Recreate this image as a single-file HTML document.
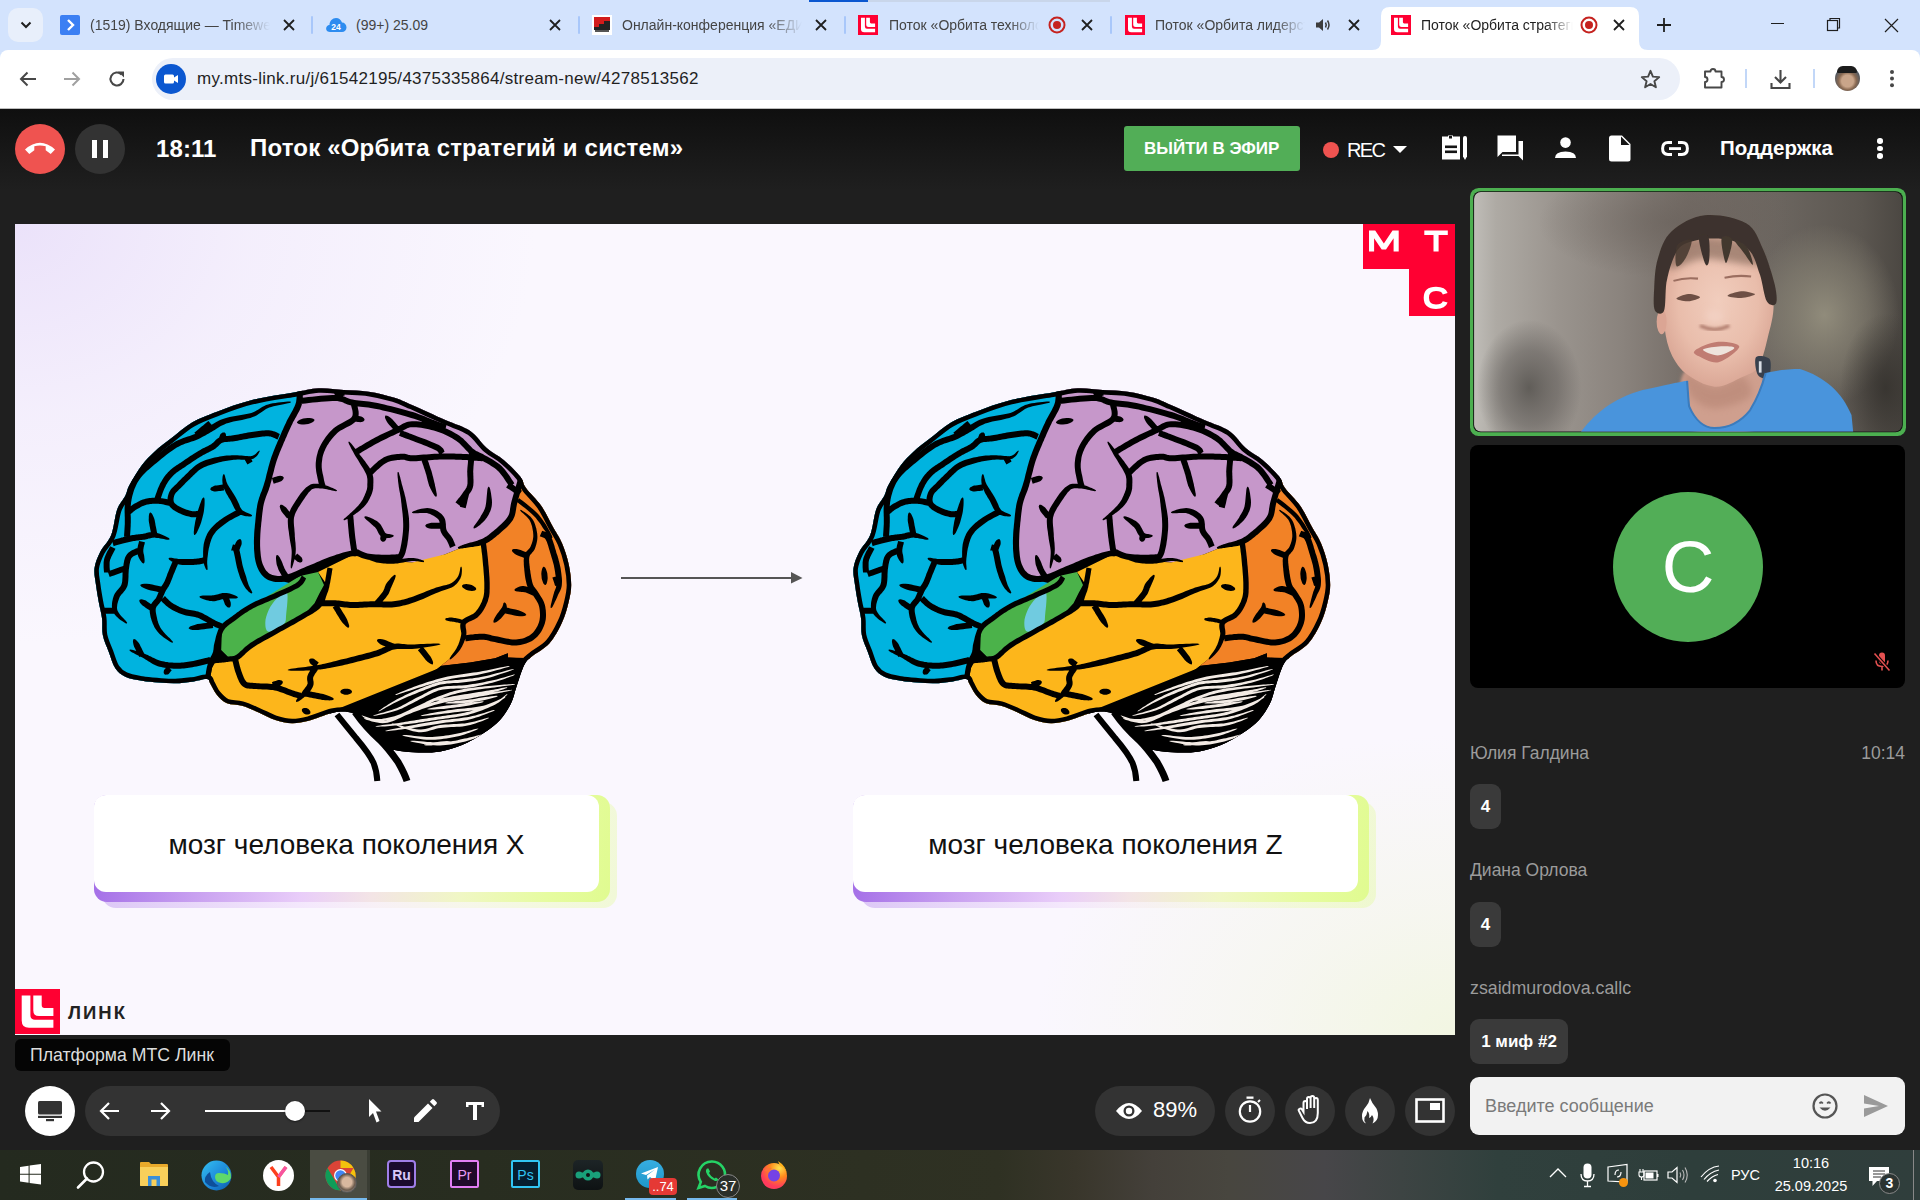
<!DOCTYPE html>
<html><head><meta charset="utf-8">
<style>
*{margin:0;padding:0;box-sizing:border-box}
html,body{width:1920px;height:1200px;overflow:hidden;background:#1f1f1f;font-family:"Liberation Sans",sans-serif}
.a{position:absolute}
svg{position:absolute;overflow:visible}
#tabs{left:0;top:0;width:1920px;height:58px;background:#d3e3fd}
#toolbar{left:0;top:50px;width:1920px;height:58px;background:#fff;border-radius:8px 8px 0 0}
.tt{position:absolute;top:15px;font-size:14px;color:#1f1f1f;white-space:nowrap;overflow:hidden;line-height:20px}
.sep{position:absolute;top:16px;width:2px;height:18px;background:#a8c7fa;border-radius:1px}
#hdr{left:0;top:109px;width:1920px;height:81px;background:linear-gradient(#0f0f0f,#1f1f1f)}
#slide{left:15px;top:224px;width:1440px;height:811px;background:radial-gradient(ellipse 520px 420px at 0% 0%,#ebe2fa 0%,rgba(240,233,251,0.6) 45%,rgba(250,247,254,0) 100%),radial-gradient(ellipse 420px 300px at 100% 100%,#f2f6e2 0%,rgba(244,246,232,0.6) 45%,rgba(250,247,254,0) 100%),#faf7fe;overflow:hidden}
#taskbar{left:0;top:1150px;width:1920px;height:50px;background:linear-gradient(90deg,#242a1f 0%,#282d20 25%,#2d3022 45%,#2f3123 52%,#39362b 56%,#44403a 60%,#48463f 64%,#474649 69%,#3d4443 73%,#30403d 78%,#2e3e3b 88%,#303e3c 100%)}
</style></head><body>

<!-- Tab strip -->
<div id="tabs" class="a">
  <div class="a" style="left:809px;top:0;width:59px;height:2px;background:#0b57d0"></div>
  <div class="a" style="left:868px;top:0;width:242px;height:2px;background:#c9d6ea"></div>
  <div class="a" style="left:8px;top:8px;width:35px;height:34px;border-radius:10px;background:#e8effb"></div>
  <svg style="left:18px;top:17px" width="16" height="16" viewBox="0 0 16 16"><path d="M3.5 5.5 L8 10 L12.5 5.5" fill="none" stroke="#1f1f1f" stroke-width="2"/></svg>
  <!-- tab1 -->
  <div class="a" style="left:60px;top:15px;width:20px;height:20px;background:#3b7ff3;border-radius:2px"></div>
  <svg style="left:60px;top:15px" width="20" height="20"><path d="M8 5 L13 10 L8 15" fill="none" stroke="#fff" stroke-width="2.4"/></svg>
  <div class="tt" style="left:90px;width:180px;color:#444;-webkit-mask-image:linear-gradient(90deg,#000 80%,transparent)">(1519) Входящие — Timeweb</div>
  <svg style="left:283px;top:19px" width="12" height="12"><path d="M1 1L11 11M11 1L1 11" stroke="#1f1f1f" stroke-width="1.8"/></svg>
  <div class="sep" style="left:311px"></div>
  <!-- tab2 -->
  <svg style="left:325px;top:15px" width="22" height="20" viewBox="0 0 22 20"><path d="M5 17 C1.5 17 0.5 14 1.5 12 C2.3 10.5 3.5 10 4.5 10 C4.5 6 7.5 3 11 3 C14 3 16 5 17 7.5 C19.5 7.5 21.5 9.5 21.5 12.5 C21.5 15 19.5 17 17 17 Z" fill="#2d8cf0"/><text x="11" y="14.5" font-size="8.5" font-weight="bold" fill="#fff" text-anchor="middle" font-family="Liberation Sans">24</text></svg>
  <div class="tt" style="left:356px;width:180px;color:#444">(99+) 25.09</div>
  <svg style="left:549px;top:19px" width="12" height="12"><path d="M1 1L11 11M11 1L1 11" stroke="#1f1f1f" stroke-width="1.8"/></svg>
  <div class="sep" style="left:578px"></div>
  <!-- tab3 -->
  <div class="a" style="left:592px;top:15px;width:20px;height:20px;background:#fff"></div>
  <div class="a" style="left:594px;top:17px;width:16px;height:12px;background:#d21b1b"></div>
  <svg style="left:594px;top:17px" width="16" height="16"><path d="M0 13 L0 10 L5 10 L5 7 L10 7 L10 4 L16 4 L16 13 Z" fill="#222"/><rect x="1" y="13" width="14" height="2" fill="#555"/></svg>
  <div class="tt" style="left:622px;width:180px;color:#444;-webkit-mask-image:linear-gradient(90deg,#000 80%,transparent)">Онлайн-конференция «ЕДИНО</div>
  <svg style="left:815px;top:19px" width="12" height="12"><path d="M1 1L11 11M11 1L1 11" stroke="#1f1f1f" stroke-width="1.8"/></svg>
  <div class="sep" style="left:844px"></div>
  <!-- tab4 -->
  <svg style="left:858px;top:15px" width="20" height="20"><rect width="20" height="20" fill="#ff0032"/><path d="M3 2.8 H6.9 V11.5 Q6.9 13.7 9 13.7 H17.1 V17.2 H6.3 Q3 17.2 3 14 Z M8.2 2.8 H11.9 V7.1 Q11.9 8.4 13.1 8.4 H17.1 V12 H10.7 Q8.2 12 8.2 9.5 Z" fill="#fff"/></svg>
  <div class="tt" style="left:889px;width:150px;color:#444;-webkit-mask-image:linear-gradient(90deg,#000 80%,transparent)">Поток «Орбита технологий</div>
  <svg style="left:1048px;top:16px" width="18" height="18"><circle cx="9" cy="9" r="7.5" fill="none" stroke="#c5221f" stroke-width="2"/><circle cx="9" cy="9" r="4" fill="#c5221f"/></svg>
  <svg style="left:1081px;top:19px" width="12" height="12"><path d="M1 1L11 11M11 1L1 11" stroke="#1f1f1f" stroke-width="1.8"/></svg>
  <div class="sep" style="left:1110px"></div>
  <!-- tab5 -->
  <svg style="left:1125px;top:15px" width="20" height="20"><rect width="20" height="20" fill="#ff0032"/><path d="M3 2.8 H6.9 V11.5 Q6.9 13.7 9 13.7 H17.1 V17.2 H6.3 Q3 17.2 3 14 Z M8.2 2.8 H11.9 V7.1 Q11.9 8.4 13.1 8.4 H17.1 V12 H10.7 Q8.2 12 8.2 9.5 Z" fill="#fff"/></svg>
  <div class="tt" style="left:1155px;width:150px;color:#444;-webkit-mask-image:linear-gradient(90deg,#000 80%,transparent)">Поток «Орбита лидерства</div>
  <svg style="left:1314px;top:16px" width="18" height="18" viewBox="0 0 18 18"><path d="M2 6.5 H5 L9 3 V15 L5 11.5 H2 Z" fill="#3c3c3c"/><path d="M11.5 6.5 Q13 9 11.5 11.5 M13.5 4.5 Q16.5 9 13.5 13.5" fill="none" stroke="#3c3c3c" stroke-width="1.5"/></svg>
  <svg style="left:1348px;top:19px" width="12" height="12"><path d="M1 1L11 11M11 1L1 11" stroke="#1f1f1f" stroke-width="1.8"/></svg>
  <!-- active tab -->
  <svg style="left:1372px;top:7px" width="276" height="43" viewBox="0 0 276 43"><path d="M0 43 Q9 43 9 34 V9 Q9 0 18 0 H258 Q267 0 267 9 V34 Q267 43 276 43 Z" fill="#fff"/></svg>
  <svg style="left:1391px;top:15px" width="20" height="20"><rect width="20" height="20" fill="#ff0032"/><path d="M3 2.8 H6.9 V11.5 Q6.9 13.7 9 13.7 H17.1 V17.2 H6.3 Q3 17.2 3 14 Z M8.2 2.8 H11.9 V7.1 Q11.9 8.4 13.1 8.4 H17.1 V12 H10.7 Q8.2 12 8.2 9.5 Z" fill="#fff"/></svg>
  <div class="tt" style="left:1421px;width:152px;color:#1f1f1f;-webkit-mask-image:linear-gradient(90deg,#000 82%,transparent)">Поток «Орбита стратегий</div>
  <svg style="left:1580px;top:16px" width="18" height="18"><circle cx="9" cy="9" r="7.5" fill="none" stroke="#c5221f" stroke-width="2"/><circle cx="9" cy="9" r="4" fill="#c5221f"/></svg>
  <svg style="left:1613px;top:19px" width="12" height="12"><path d="M1 1L11 11M11 1L1 11" stroke="#1f1f1f" stroke-width="1.8"/></svg>
  <svg style="left:1657px;top:18px" width="14" height="14"><path d="M7 0V14M0 7H14" stroke="#1f1f1f" stroke-width="1.8"/></svg>
  <div class="a" style="left:1771px;top:23px;width:13px;height:1px;background:#1f1f1f"></div>
  <svg style="left:1826px;top:17px" width="16" height="16"><rect x="1.5" y="3.5" width="10" height="10" fill="none" stroke="#1f1f1f" stroke-width="1.2"/><path d="M4 3.5 V1.5 H13.5 V11 H11.5" fill="none" stroke="#1f1f1f" stroke-width="1.2"/></svg>
  <svg style="left:1884px;top:18px" width="15" height="15"><path d="M1 1L14 14M14 1L1 14" stroke="#1f1f1f" stroke-width="1.2"/></svg>
</div>

<!-- Toolbar -->
<div id="toolbar" class="a">
  <div class="a" style="left:152px;top:8px;width:1528px;height:42px;border-radius:21px;background:#ecf0f9"></div>
  <svg style="left:18px;top:19px" width="20" height="20" viewBox="0 0 20 20"><path d="M18 10H3M9.5 3.5L3 10L9.5 16.5" fill="none" stroke="#474747" stroke-width="2"/></svg>
  <svg style="left:62px;top:19px" width="20" height="20" viewBox="0 0 20 20"><path d="M2 10H17M10.5 3.5L17 10L10.5 16.5" fill="none" stroke="#a0a0a0" stroke-width="2"/></svg>
  <svg style="left:107px;top:19px" width="20" height="20" viewBox="0 0 20 20"><path d="M16.5 10 A6.5 6.5 0 1 1 14.6 5.4" fill="none" stroke="#474747" stroke-width="2.1"/><path d="M11 2.5 H17 V8.5 Z" fill="#474747"/></svg>
  <div class="a" style="left:156px;top:14px;width:30px;height:30px;border-radius:50%;background:#0b57d0"></div>
  <svg style="left:161px;top:19px" width="20" height="20" viewBox="0 0 20 20"><rect x="3" y="5.5" width="10" height="9" rx="1.5" fill="#fff"/><path d="M13 8.5 L17 6 V14 L13 11.5 Z" fill="#fff"/></svg>
  <div class="a" style="left:197px;top:18px;font-size:17px;line-height:22px;color:#1f1f1f;white-space:nowrap;letter-spacing:0.28px">my.mts-link.ru/j/61542195/4375335864/stream-new/4278513562</div>
  <svg style="left:1640px;top:19px" width="21" height="20" viewBox="0 0 21 20"><path d="M10.5 1.8 L12.9 7.6 L19.2 8.1 L14.4 12.2 L15.9 18.3 L10.5 15 L5.1 18.3 L6.6 12.2 L1.8 8.1 L8.1 7.6 Z" fill="none" stroke="#474747" stroke-width="1.9" stroke-linejoin="round"/></svg>
  <svg style="left:1703px;top:18px" width="22" height="22" viewBox="0 0 22 22"><path d="M1.5 3.5 H7 Q7 1 9.5 1 Q12 1 12 3.5 H18 V9 Q20.5 9 20.5 11.5 Q20.5 14 18 14 V19.5 H1.5 V14 Q4 14 4 11.5 Q4 9 1.5 9 Z" fill="none" stroke="#474747" stroke-width="1.9" stroke-linejoin="round" transform="translate(0.5,0)"/></svg>
  <div class="a" style="left:1745px;top:19px;width:2px;height:19px;background:#c2d7f8"></div>
  <svg style="left:1770px;top:19px" width="21" height="21" viewBox="0 0 21 21"><path d="M10.5 1 V13 M5 8 L10.5 13.5 L16 8" fill="none" stroke="#474747" stroke-width="2.1"/><path d="M1.5 14 V19 H19.5 V14" fill="none" stroke="#474747" stroke-width="2.1"/></svg>
  <div class="a" style="left:1813px;top:19px;width:2px;height:19px;background:#c2d7f8"></div>
  <div class="a" style="left:1835px;top:16px;width:25px;height:25px;border-radius:50%;background:radial-gradient(circle at 50% 60%,#c9a58a 0 30%,#8a6a52 45%,#4b5560 70%,#9aa3ad 100%)"></div>
  <div class="a" style="left:1837px;top:16px;width:20px;height:7px;border-radius:10px 10px 2px 2px;background:#1c1c1c"></div>
  <svg style="left:1886px;top:69px;top:19px" width="12" height="20" viewBox="0 0 12 20"><circle cx="6" cy="3" r="2" fill="#474747"/><circle cx="6" cy="9.6" r="2" fill="#474747"/><circle cx="6" cy="16.2" r="2" fill="#474747"/></svg>
</div>
<div class="a" style="left:0;top:108px;width:1920px;height:1px;background:#bdbdbd"></div>

<!-- App header -->
<div id="hdr" class="a">
  <div class="a" style="left:15px;top:15px;width:50px;height:50px;border-radius:50%;background:#ef5350"></div>
  <svg style="left:15px;top:15px" width="50" height="50" viewBox="0 0 50 50"><path d="M10 25.5 Q25 12 40 25.5 L35.7 30 L30.7 26.2 L30.7 22.3 Q25 20.6 19.3 22.3 L19.3 26.2 L14.3 30 Z" fill="#fff"/></svg>
  <div class="a" style="left:75px;top:15px;width:50px;height:50px;border-radius:50%;background:#333"></div>
  <div class="a" style="left:92px;top:31px;width:5px;height:18px;background:#fff"></div>
  <div class="a" style="left:103px;top:31px;width:5px;height:18px;background:#fff"></div>
  <div class="a" style="left:156px;top:26px;font-size:24px;line-height:28px;color:#fff;font-weight:bold;letter-spacing:0.1px">18:11</div>
  <div class="a" style="left:250px;top:25px;font-size:24px;line-height:28px;color:#fff;font-weight:bold;letter-spacing:0.18px;white-space:nowrap">Поток «Орбита стратегий и систем»</div>
  <div class="a" style="left:1124px;top:17px;width:176px;height:45px;border-radius:3px;background:#52ae57"></div>
  <div class="a" style="left:1144px;top:30px;font-size:17px;line-height:20px;color:#fff;font-weight:bold;white-space:nowrap">ВЫЙТИ В ЭФИР</div>
  <div class="a" style="left:1323px;top:33px;width:16px;height:16px;border-radius:50%;background:#ef5350"></div>
  <div class="a" style="left:1347px;top:29px;font-size:20px;line-height:24px;color:#fff;letter-spacing:-1.6px;white-space:nowrap">REC</div>
  <svg style="left:1393px;top:37px" width="14" height="8"><path d="M0 0H14L7 7Z" fill="#fff"/></svg>
  <!-- icons -->
  <svg style="left:1441px;top:26px" width="28" height="26" viewBox="0 0 28 26"><path d="M1 1.5 H7 V0.5 H12 V1.5 H19 V24.5 H1 Z" fill="#fff"/><rect x="8" y="1" width="3" height="2.5" fill="#151515"/><rect x="4" y="10.5" width="12" height="2.6" fill="#151515"/><rect x="4" y="15.5" width="12" height="2.6" fill="#151515"/><path d="M22 3 Q22 1 24 1 Q26 1 26 3 V21.5 L24 25 L22 21.5 Z" fill="#fff"/></svg>
  <svg style="left:1497px;top:26px" width="27" height="26" viewBox="0 0 27 26"><path d="M0.5 0.5 H19 V17 H5.5 L0.5 22 Z" fill="#fff"/><path d="M21.5 6 H26 V25.5 L21.5 21 H5 V19.5 H21.5 Z" fill="#fff"/></svg>
  <svg style="left:1555px;top:28px" width="21" height="22" viewBox="0 0 21 22"><circle cx="10.5" cy="5.6" r="5.3" fill="#fff"/><path d="M0 21 Q0 14.5 10.5 14.5 Q21 14.5 21 21 Z" fill="#fff"/></svg>
  <svg style="left:1609px;top:26px" width="22" height="27" viewBox="0 0 22 27"><path d="M2.5 0.5 H13 L21.5 9 V24 Q21.5 26.5 19 26.5 H2.5 Q0 26.5 0 24 V3 Q0 0.5 2.5 0.5 Z" fill="#fff"/><path d="M12 1.5 V10 H20.5 Z" fill="#151515"/><path d="M12 1.5 L20.5 10 H12 Z" fill="#fff" opacity="0"/></svg>
  <svg style="left:1661px;top:32px" width="28" height="15" viewBox="0 0 28 15"><path d="M11 1.6 H7 Q1.6 1.6 1.6 7.5 Q1.6 13.4 7 13.4 H11 M17 1.6 H21 Q26.4 1.6 26.4 7.5 Q26.4 13.4 21 13.4 H17" fill="none" stroke="#fff" stroke-width="3"/><rect x="8" y="6.2" width="12" height="2.8" fill="#fff"/></svg>
  <div class="a" style="left:1720px;top:27px;font-size:20.5px;line-height:24px;color:#fff;font-weight:bold;white-space:nowrap">Поддержка</div>
  <div class="a" style="left:1877px;top:29px;width:5.5px;height:5.5px;border-radius:50%;background:#fff"></div>
  <div class="a" style="left:1877px;top:36.5px;width:5.5px;height:5.5px;border-radius:50%;background:#fff"></div>
  <div class="a" style="left:1877px;top:44px;width:5.5px;height:5.5px;border-radius:50%;background:#fff"></div>
</div>

<!-- Slide -->
<div id="slide" class="a">
  <!-- MTS logo -->
  <div class="a" style="left:1348px;top:0;width:92px;height:45px;background:#ff0032"></div>
  <div class="a" style="left:1394px;top:45px;width:46px;height:47px;background:#ff0032"></div>
  <svg style="left:1348px;top:0" width="92" height="92" viewBox="0 0 92 92"><path d="M6 27.6 V6.4 H12.2 L20.85 19.5 L29.5 6.4 H35.7 V27.6 H30.6 V14.2 L23 25.4 H18.7 L11.1 14.2 V27.6 Z" fill="#fff"/><path d="M61.3 6.4 H84.8 V11 H75.6 V27.6 H70.5 V11 H61.3 Z" fill="#fff"/><path d="M84.6 69 Q82.5 62.7 73 62.7 Q60.7 62.7 60.7 73.8 Q60.7 84.9 73 84.9 Q82.5 84.9 84.6 78.6 L79.8 77.2 Q78.5 80.5 73 80.5 Q66 80.5 66 73.8 Q66 67.1 73 67.1 Q78.5 67.1 79.8 70.4 Z" fill="#fff"/></svg>
  <!-- arrow -->
  <div class="a" style="left:606px;top:353px;width:170px;height:2px;background:#555"></div>
  <svg style="left:776px;top:348px" width="12" height="12"><path d="M0 0 L11.5 6 L0 11.5 Z" fill="#555"/></svg>
  <!-- caption boxes -->
  <div class="a" style="left:87px;top:578px;width:515px;height:106px;border-radius:14px;background:linear-gradient(100deg,#9f68e6 0%,#c8a0f0 22%,#e9cdf9 42%,#f3e4e6 55%,#f0f7c4 72%,#e6fca0 88%,#e0fb90 100%);opacity:0.35"></div>
  <div class="a" style="left:79px;top:570.5px;width:515.5px;height:107.5px;border-radius:13px;background:linear-gradient(100deg,#9f68e6 0%,#c8a0f0 22%,#e9cdf9 42%,#f3e4e6 55%,#f0f7c4 72%,#e6fca0 88%,#e0fb90 100%)"></div>
  <div class="a" style="left:79px;top:570.5px;width:505px;height:97.5px;border-radius:12px;background:#fff;font-size:28px;line-height:99px;text-align:center;color:#111">мозг человека поколения X</div>
  <div class="a" style="left:846px;top:578px;width:515px;height:106px;border-radius:14px;background:linear-gradient(100deg,#9f68e6 0%,#c8a0f0 22%,#e9cdf9 42%,#f3e4e6 55%,#f0f7c4 72%,#e6fca0 88%,#e0fb90 100%);opacity:0.35"></div>
  <div class="a" style="left:838px;top:570.5px;width:515.5px;height:107.5px;border-radius:13px;background:linear-gradient(100deg,#9f68e6 0%,#c8a0f0 22%,#e9cdf9 42%,#f3e4e6 55%,#f0f7c4 72%,#e6fca0 88%,#e0fb90 100%)"></div>
  <div class="a" style="left:838px;top:570.5px;width:505px;height:97.5px;border-radius:12px;background:#fff;font-size:28px;line-height:99px;text-align:center;color:#111">мозг человека поколения Z</div>
  <!-- Link logo -->
  <div class="a" style="left:0;top:765.3px;width:45px;height:45.2px;background:#ff0032"></div>
  <svg style="left:0;top:765.3px" width="45" height="45" viewBox="0 0 45 45"><path d="M6.7 6.4 H15.4 V26 Q15.4 30.75 20 30.75 H38.4 V38.8 H14 Q6.7 38.8 6.7 31.5 Z M18.3 6.4 H26.7 V16 Q26.7 19 29.5 19 H38.4 V27.1 H24 Q18.3 27.1 18.3 21.5 Z" fill="#fff"/></svg>
  <div class="a" style="left:53px;top:778px;font-size:18.5px;line-height:22px;color:#222;font-weight:bold;letter-spacing:2px">ЛИНК</div>
  <!--BRAINS--><svg style="left:-15px;top:-224px" width="1920" height="1200" viewBox="0 0 1920 1200"><defs><clipPath id="bclip"><path d="M94.5 568.3C95.2 562.8 97.5 557.2 100.3 551.7C103.1 546.2 108.4 542.0 111.2 535.0C114.0 528.0 114.7 516.5 117.0 510.0C119.3 503.5 123.2 500.0 125.3 495.8C127.4 491.6 126.7 490.1 129.5 485.0C132.3 479.9 137.8 470.6 142.0 465.0C146.2 459.4 149.6 456.1 154.5 451.7C159.4 447.2 164.9 443.2 171.2 438.3C177.4 433.4 184.4 426.9 192.0 422.5C199.6 418.1 207.0 415.4 217.0 411.7C227.0 407.9 239.2 403.2 252.0 400.0C264.8 396.8 282.6 394.4 293.7 392.5C304.8 390.6 310.4 388.7 318.7 388.3C327.0 387.9 335.4 389.4 343.7 390.0C352.0 390.6 360.4 390.4 368.7 391.7C377.0 392.9 386.5 395.3 393.7 397.5C400.9 399.7 403.4 401.2 412.0 405.0C420.6 408.8 435.6 415.7 445.3 420.0C455.0 424.3 463.4 426.3 470.3 431.0C477.2 435.7 481.4 443.5 487.0 448.3C492.6 453.1 498.1 455.3 503.7 460.0C509.2 464.7 516.6 472.0 520.3 476.7C524.0 481.4 522.5 483.1 526.0 488.0C529.5 492.9 536.6 499.1 541.2 505.8C545.8 512.5 550.2 522.0 553.7 528.3C557.2 534.5 559.5 537.3 562.0 543.3C564.5 549.3 567.2 557.2 568.7 564.2C570.2 571.2 571.2 578.8 571.2 585.0C571.2 591.2 570.2 595.5 568.7 601.7C567.2 608.0 565.2 615.6 562.0 622.5C558.8 629.4 554.4 637.8 549.5 643.3C544.6 648.8 536.7 652.7 532.8 655.8C528.9 658.9 527.9 659.4 526.0 662.0C524.1 664.6 523.2 667.0 521.6 671.3C520.0 675.5 518.0 682.1 516.2 687.5C514.4 692.9 513.5 698.4 510.8 703.8C508.1 709.2 504.5 715.1 500.0 720.0C495.5 724.9 490.0 728.8 483.7 733.0C477.4 737.2 469.2 741.9 462.0 745.0C454.8 748.1 447.5 750.1 440.3 751.4C433.1 752.6 425.4 752.6 418.7 752.5C412.0 752.4 405.4 751.9 400.0 751.0C394.6 750.1 390.5 749.7 386.0 747.0C381.5 744.3 377.5 740.0 373.0 735.0C368.5 730.0 363.2 720.8 359.0 717.0C354.8 713.2 352.5 712.7 348.0 712.0C343.5 711.3 338.6 711.5 332.0 713.0C325.4 714.5 315.4 719.1 308.7 720.8C302.0 722.5 297.6 723.4 292.0 723.3C286.4 723.2 280.9 721.8 275.3 720.0C269.8 718.2 264.2 714.9 258.7 712.5C253.1 710.1 247.3 707.3 242.0 705.8C236.7 704.3 231.2 705.1 227.0 703.3C222.8 701.5 219.8 698.2 217.0 695.0C214.2 691.8 212.2 686.7 210.5 684.0C208.8 681.3 210.1 679.4 207.0 679.0C203.9 678.6 197.3 681.0 192.0 681.7C186.7 682.4 180.9 683.2 175.3 683.3C169.8 683.4 164.2 682.9 158.7 682.5C153.1 682.1 147.6 681.8 142.0 680.8C136.4 679.8 129.8 678.8 125.3 676.7C120.8 674.6 118.1 672.5 115.3 668.3C112.5 664.1 110.8 657.2 108.7 651.7C106.6 646.2 103.9 640.6 102.8 635.0C101.7 629.4 102.7 623.8 102.0 618.3C101.3 612.8 99.7 607.2 98.7 601.7C97.7 596.2 96.7 590.6 96.0 585.0C95.3 579.4 93.8 573.8 94.5 568.3Z"/></clipPath><g id="brain"><path d="M94.5 568.3C95.2 562.8 97.5 557.2 100.3 551.7C103.1 546.2 108.4 542.0 111.2 535.0C114.0 528.0 114.7 516.5 117.0 510.0C119.3 503.5 123.2 500.0 125.3 495.8C127.4 491.6 126.7 490.1 129.5 485.0C132.3 479.9 137.8 470.6 142.0 465.0C146.2 459.4 149.6 456.1 154.5 451.7C159.4 447.2 164.9 443.2 171.2 438.3C177.4 433.4 184.4 426.9 192.0 422.5C199.6 418.1 207.0 415.4 217.0 411.7C227.0 407.9 239.2 403.2 252.0 400.0C264.8 396.8 282.6 394.4 293.7 392.5C304.8 390.6 310.4 388.7 318.7 388.3C327.0 387.9 335.4 389.4 343.7 390.0C352.0 390.6 360.4 390.4 368.7 391.7C377.0 392.9 386.5 395.3 393.7 397.5C400.9 399.7 403.4 401.2 412.0 405.0C420.6 408.8 435.6 415.7 445.3 420.0C455.0 424.3 463.4 426.3 470.3 431.0C477.2 435.7 481.4 443.5 487.0 448.3C492.6 453.1 498.1 455.3 503.7 460.0C509.2 464.7 516.6 472.0 520.3 476.7C524.0 481.4 522.5 483.1 526.0 488.0C529.5 492.9 536.6 499.1 541.2 505.8C545.8 512.5 550.2 522.0 553.7 528.3C557.2 534.5 559.5 537.3 562.0 543.3C564.5 549.3 567.2 557.2 568.7 564.2C570.2 571.2 571.2 578.8 571.2 585.0C571.2 591.2 570.2 595.5 568.7 601.7C567.2 608.0 565.2 615.6 562.0 622.5C558.8 629.4 554.4 637.8 549.5 643.3C544.6 648.8 536.7 652.7 532.8 655.8C528.9 658.9 527.9 659.4 526.0 662.0C524.1 664.6 523.2 667.0 521.6 671.3C520.0 675.5 518.0 682.1 516.2 687.5C514.4 692.9 513.5 698.4 510.8 703.8C508.1 709.2 504.5 715.1 500.0 720.0C495.5 724.9 490.0 728.8 483.7 733.0C477.4 737.2 469.2 741.9 462.0 745.0C454.8 748.1 447.5 750.1 440.3 751.4C433.1 752.6 425.4 752.6 418.7 752.5C412.0 752.4 405.4 751.9 400.0 751.0C394.6 750.1 390.5 749.7 386.0 747.0C381.5 744.3 377.5 740.0 373.0 735.0C368.5 730.0 363.2 720.8 359.0 717.0C354.8 713.2 352.5 712.7 348.0 712.0C343.5 711.3 338.6 711.5 332.0 713.0C325.4 714.5 315.4 719.1 308.7 720.8C302.0 722.5 297.6 723.4 292.0 723.3C286.4 723.2 280.9 721.8 275.3 720.0C269.8 718.2 264.2 714.9 258.7 712.5C253.1 710.1 247.3 707.3 242.0 705.8C236.7 704.3 231.2 705.1 227.0 703.3C222.8 701.5 219.8 698.2 217.0 695.0C214.2 691.8 212.2 686.7 210.5 684.0C208.8 681.3 210.1 679.4 207.0 679.0C203.9 678.6 197.3 681.0 192.0 681.7C186.7 682.4 180.9 683.2 175.3 683.3C169.8 683.4 164.2 682.9 158.7 682.5C153.1 682.1 147.6 681.8 142.0 680.8C136.4 679.8 129.8 678.8 125.3 676.7C120.8 674.6 118.1 672.5 115.3 668.3C112.5 664.1 110.8 657.2 108.7 651.7C106.6 646.2 103.9 640.6 102.8 635.0C101.7 629.4 102.7 623.8 102.0 618.3C101.3 612.8 99.7 607.2 98.7 601.7C97.7 596.2 96.7 590.6 96.0 585.0C95.3 579.4 93.8 573.8 94.5 568.3Z" fill="#000"/>
<g clip-path="url(#bclip)">
<path d="M80.0 370.0L299.5 370.0L299.5 393.3L298.7 404.2L289.5 422.5L282.0 439.2L273.7 460.0L267.0 485.0L261.2 501.7L258.7 518.3L257.0 543.3L259.5 564.2L268.7 576.7L285.3 582.0L297.8 585.0L277.0 595.0L252.0 606.0L233.7 618.3L222.0 628.3L217.0 643.3L215.3 653.3L210.3 664.2L207.0 700.0L80.0 700.0Z" fill="#00b3df"/>
<path d="M299.5 370.0L530.0 370.0L530.0 470.0L514.0 490.0L514.5 501.7L510.3 518.3L495.3 533.3L482.8 541.7L466.2 545.8L445.3 554.2L424.5 561.7L412.0 562.5L393.7 561.7L377.0 560.0L356.2 553.3L335.3 558.3L310.3 568.3L285.3 578.3L268.7 576.7L259.5 564.2L257.0 543.3L258.7 518.3L261.2 501.7L267.0 485.0L273.7 460.0L282.0 439.2L289.5 422.5L298.7 404.2L299.5 393.3Z" fill="#c697ca"/>
<path d="M318.0 572.0L356.2 553.3L377.0 560.0L412.0 562.5L445.3 554.2L466.2 545.8L482.8 541.7L485.3 560.0L487.0 585.0L485.3 600.0L477.0 614.2L463.7 622.5L463.7 635.0L458.7 648.3L453.7 655.8L437.0 669.0L400.0 690.0L332.0 712.0L308.7 730.0L240.0 730.0L212.0 700.0L209.0 684.0L212.0 668.0L216.0 661.0L229.5 660.0L237.8 656.7L252.0 645.0L277.0 630.8L302.0 616.7L318.7 605.8L324.5 593.3L327.0 585.0Z" fill="#fdb61b"/>
<path d="M514.0 490.0L530.0 470.0L590.0 470.0L590.0 660.0L527.0 659.0L520.3 658.3L507.8 657.5L507.8 653.3L495.3 658.3L470.3 662.5L441.2 665.8L437.0 669.0L453.7 655.8L458.7 648.3L463.7 635.0L463.7 622.5L477.0 614.2L485.3 600.0L487.0 585.0L485.3 560.0L482.8 541.7L495.3 533.3L510.3 518.3L514.5 501.7Z" fill="#f28226"/>
<path d="M252.0 606.0L285.3 585.0L300.0 576.0L318.0 572.0L324.0 585.0L319.5 593.3L314.5 603.3L302.0 616.7L277.0 630.8L252.0 645.0L237.8 656.7L229.5 658.3L221.2 650.0L222.0 628.3L233.7 618.3Z" fill="#4bb24a"/>
<path d="M265.3 622.5C265.3 618.9 266.8 614.0 268.7 610.0C270.6 606.0 273.9 601.2 277.0 598.3C280.1 595.4 285.5 589.9 287.0 592.5C288.5 595.1 286.8 608.9 286.2 614.2C285.6 619.5 286.6 621.3 283.7 624.2C280.8 627.1 271.8 632.0 268.7 631.7C265.6 631.4 265.3 626.1 265.3 622.5Z" fill="#70cbe0"/>
<path d="M330 712 L437 669 L441 666 L470 662.5 L495 658.3 L508 653.3 L508 657.5 L527 658 L590 655 L590 800 L330 800 Z" fill="#000"/>
<path d="M94.5 568.3C95.2 562.8 97.5 557.2 100.3 551.7C103.1 546.2 108.4 542.0 111.2 535.0C114.0 528.0 114.7 516.5 117.0 510.0C119.3 503.5 123.2 500.0 125.3 495.8C127.4 491.6 126.7 490.1 129.5 485.0C132.3 479.9 137.8 470.6 142.0 465.0C146.2 459.4 149.6 456.1 154.5 451.7C159.4 447.2 164.9 443.2 171.2 438.3C177.4 433.4 184.4 426.9 192.0 422.5C199.6 418.1 207.0 415.4 217.0 411.7C227.0 407.9 239.2 403.2 252.0 400.0C264.8 396.8 282.6 394.4 293.7 392.5C304.8 390.6 310.4 388.7 318.7 388.3C327.0 387.9 335.4 389.4 343.7 390.0C352.0 390.6 360.4 390.4 368.7 391.7C377.0 392.9 386.5 395.3 393.7 397.5C400.9 399.7 403.4 401.2 412.0 405.0C420.6 408.8 435.6 415.7 445.3 420.0C455.0 424.3 463.4 426.3 470.3 431.0C477.2 435.7 481.4 443.5 487.0 448.3C492.6 453.1 498.1 455.3 503.7 460.0C509.2 464.7 516.6 472.0 520.3 476.7C524.0 481.4 522.5 483.1 526.0 488.0C529.5 492.9 536.6 499.1 541.2 505.8C545.8 512.5 550.2 522.0 553.7 528.3C557.2 534.5 559.5 537.3 562.0 543.3C564.5 549.3 567.2 557.2 568.7 564.2C570.2 571.2 571.2 578.8 571.2 585.0C571.2 591.2 570.2 595.5 568.7 601.7C567.2 608.0 565.2 615.6 562.0 622.5C558.8 629.4 554.4 637.8 549.5 643.3C544.6 648.8 536.7 652.7 532.8 655.8C528.9 658.9 527.9 659.4 526.0 662.0C524.1 664.6 523.2 667.0 521.6 671.3C520.0 675.5 518.0 682.1 516.2 687.5C514.4 692.9 513.5 698.4 510.8 703.8C508.1 709.2 504.5 715.1 500.0 720.0C495.5 724.9 490.0 728.8 483.7 733.0C477.4 737.2 469.2 741.9 462.0 745.0C454.8 748.1 447.5 750.1 440.3 751.4C433.1 752.6 425.4 752.6 418.7 752.5C412.0 752.4 405.4 751.9 400.0 751.0C394.6 750.1 390.5 749.7 386.0 747.0C381.5 744.3 377.5 740.0 373.0 735.0C368.5 730.0 363.2 720.8 359.0 717.0C354.8 713.2 352.5 712.7 348.0 712.0C343.5 711.3 338.6 711.5 332.0 713.0C325.4 714.5 315.4 719.1 308.7 720.8C302.0 722.5 297.6 723.4 292.0 723.3C286.4 723.2 280.9 721.8 275.3 720.0C269.8 718.2 264.2 714.9 258.7 712.5C253.1 710.1 247.3 707.3 242.0 705.8C236.7 704.3 231.2 705.1 227.0 703.3C222.8 701.5 219.8 698.2 217.0 695.0C214.2 691.8 212.2 686.7 210.5 684.0C208.8 681.3 210.1 679.4 207.0 679.0C203.9 678.6 197.3 681.0 192.0 681.7C186.7 682.4 180.9 683.2 175.3 683.3C169.8 683.4 164.2 682.9 158.7 682.5C153.1 682.1 147.6 681.8 142.0 680.8C136.4 679.8 129.8 678.8 125.3 676.7C120.8 674.6 118.1 672.5 115.3 668.3C112.5 664.1 110.8 657.2 108.7 651.7C106.6 646.2 103.9 640.6 102.8 635.0C101.7 629.4 102.7 623.8 102.0 618.3C101.3 612.8 99.7 607.2 98.7 601.7C97.7 596.2 96.7 590.6 96.0 585.0C95.3 579.4 93.8 573.8 94.5 568.3Z" fill="none" stroke="#000" stroke-width="9"/>
<path fill="#000" d="M296.4 389.0L296.4 389.9L296.4 391.1L296.5 392.5L296.5 393.9L296.6 395.5L296.6 397.1L296.5 398.7L296.3 400.3L296.1 401.9L295.7 403.3L295.2 404.8L294.5 406.4L293.7 408.1L292.8 409.9L291.8 411.8L290.8 413.6L289.7 415.5L288.6 417.4L287.6 419.3L286.7 421.1L285.9 422.9L285.1 424.6L284.3 426.2L283.6 427.8L282.9 429.4L282.1 431.0L281.4 432.7L280.7 434.4L279.9 436.2L279.1 438.0L278.3 439.9L277.5 441.8L276.7 443.8L275.8 445.8L274.9 447.9L274.1 450.0L273.2 452.2L272.4 454.4L271.5 456.7L270.8 459.0L270.0 461.5L269.3 464.0L268.5 466.7L267.9 469.3L267.2 472.0L266.5 474.6L265.9 477.2L265.3 479.7L264.6 482.0L264.0 484.1L263.4 486.0L262.8 487.8L262.2 489.5L261.6 491.2L260.9 492.8L260.3 494.3L259.8 495.9L259.2 497.5L258.7 499.2L258.2 500.9L257.8 502.6L257.4 504.3L257.1 505.9L256.9 507.5L256.6 509.0L256.4 510.7L256.2 512.4L256.0 514.1L255.8 516.0L255.6 518.0L255.4 520.2L255.2 522.5L254.9 525.0L254.7 527.6L254.4 530.3L254.2 533.0L254.1 535.7L254.0 538.3L253.9 540.9L253.9 543.3L254.0 545.7L254.0 548.0L254.1 550.3L254.3 552.6L254.5 554.8L254.7 557.1L255.1 559.2L255.5 561.3L256.0 563.3L256.6 565.2L257.2 567.0L258.0 568.7L258.8 570.4L259.7 571.9L260.7 573.5L261.8 574.9L263.0 576.2L264.3 577.4L265.7 578.5L267.2 579.4L268.8 580.2L270.4 580.8L272.1 581.3L273.9 581.7L275.7 582.0L277.6 582.1L279.6 582.1L281.6 582.0L283.7 581.7L285.9 581.3L288.3 580.8L290.8 580.0L293.3 579.0L295.9 578.0L298.5 576.9L301.2 575.7L303.8 574.5L306.4 573.3L309.0 572.2L311.5 571.2L314.0 570.1L316.6 569.1L319.1 568.0L321.7 566.9L324.2 565.8L326.8 564.8L329.2 563.8L331.7 562.9L334.0 562.0L336.3 561.2L338.5 560.5L340.7 559.7L342.8 558.9L344.9 558.2L346.8 557.6L348.7 557.1L350.6 556.6L352.4 556.3L354.3 556.1L356.1 556.1L357.9 556.2L359.8 556.6L361.7 557.2L363.8 557.9L365.9 558.7L368.0 559.5L370.1 560.3L372.2 561.1L374.4 561.8L376.4 562.4L378.4 562.7L380.2 563.0L381.9 563.3L383.6 563.5L385.3 563.6L386.9 563.7L388.6 563.8L390.3 563.8L392.0 563.8L393.8 563.8L395.6 563.6L397.6 563.4L399.5 563.1L401.5 562.8L403.4 562.4L405.3 562.0L407.2 561.7L408.9 561.4L410.5 561.2L412.0 561.0L413.4 561.0L414.8 561.1L416.2 561.2L417.6 561.3L418.9 561.5L420.1 561.7L421.2 561.9L422.2 562.1L423.1 562.2L423.9 562.1L424.1 560.9L423.5 560.5L422.7 560.2L421.7 559.9L420.6 559.5L419.4 559.2L418.1 558.8L416.6 558.5L415.1 558.3L413.6 558.1L412.0 558.0L410.3 558.0L408.5 558.1L406.7 558.3L404.8 558.5L402.8 558.8L400.9 559.0L399.0 559.3L397.1 559.5L395.4 559.6L393.6 559.6L392.0 559.6L390.4 559.5L388.8 559.5L387.3 559.3L385.7 559.2L384.2 559.0L382.6 558.7L381.0 558.4L379.3 558.1L377.6 557.6L375.8 557.1L374.0 556.5L372.0 555.6L370.0 554.7L367.9 553.8L365.7 552.9L363.4 552.1L361.1 551.3L358.7 550.8L356.3 550.5L354.0 550.5L351.8 550.6L349.5 550.9L347.4 551.4L345.2 551.9L343.1 552.5L340.9 553.2L338.8 553.9L336.6 554.6L334.3 555.4L331.9 556.2L329.5 557.1L327.0 558.0L324.4 559.1L321.9 560.1L319.3 561.2L316.7 562.3L314.2 563.4L311.6 564.4L309.1 565.4L306.5 566.5L303.9 567.7L301.3 568.8L298.6 570.0L296.0 571.2L293.5 572.3L291.1 573.3L288.8 574.1L286.6 574.8L284.7 575.3L282.8 575.6L281.0 575.8L279.4 575.9L277.8 575.9L276.3 575.8L274.9 575.6L273.7 575.3L272.4 575.0L271.3 574.5L270.2 574.0L269.2 573.4L268.3 572.7L267.4 571.8L266.5 570.9L265.7 569.9L265.0 568.7L264.3 567.5L263.6 566.1L263.0 564.7L262.4 563.2L261.9 561.6L261.5 560.0L261.2 558.1L260.9 556.2L260.7 554.2L260.5 552.1L260.3 550.0L260.2 547.8L260.1 545.5L260.1 543.3L260.1 541.0L260.2 538.5L260.3 536.0L260.4 533.4L260.6 530.8L260.8 528.2L261.1 525.6L261.3 523.1L261.6 520.8L261.8 518.6L262.0 516.6L262.2 514.8L262.4 513.1L262.6 511.4L262.8 509.9L263.0 508.4L263.2 507.0L263.5 505.5L263.8 504.0L264.2 502.5L264.6 500.9L265.1 499.5L265.6 498.0L266.1 496.5L266.7 495.0L267.3 493.4L268.0 491.7L268.7 489.9L269.3 488.0L270.0 485.9L270.6 483.6L271.3 481.2L271.9 478.7L272.5 476.1L273.2 473.5L273.9 470.9L274.5 468.2L275.2 465.7L275.9 463.3L276.6 461.0L277.4 458.8L278.2 456.6L279.0 454.4L279.8 452.3L280.7 450.3L281.5 448.2L282.4 446.2L283.2 444.3L284.0 442.3L284.9 440.4L285.6 438.6L286.4 436.9L287.1 435.2L287.8 433.6L288.5 432.0L289.2 430.4L290.0 428.8L290.7 427.2L291.5 425.5L292.3 423.9L293.1 422.1L294.1 420.4L295.1 418.5L296.2 416.7L297.2 414.8L298.3 412.8L299.3 410.9L300.2 409.0L301.0 407.0L301.7 405.1L302.2 403.1L302.5 401.1L302.7 399.2L302.8 397.2L302.8 395.4L302.7 393.7L302.7 392.2L302.6 390.9L302.6 389.9L302.6 389.0ZM209.6 682.4L209.8 681.3L210.0 679.9L210.3 678.2L210.6 676.2L210.9 674.2L211.3 672.1L211.6 670.1L212.0 668.1L212.4 666.4L212.8 664.9L213.2 663.7L213.6 662.6L214.1 661.5L214.6 660.5L215.2 659.5L215.7 658.5L216.3 657.5L216.8 656.4L217.3 655.3L217.8 654.1L218.1 652.9L218.4 651.8L218.5 650.8L218.6 649.8L218.7 648.8L218.8 647.9L218.9 647.0L219.1 646.0L219.3 645.0L219.5 643.9L219.9 642.6L220.2 641.1L220.6 639.6L221.0 638.1L221.4 636.5L221.8 635.0L222.3 633.5L222.9 632.1L223.5 630.8L224.2 629.7L224.9 628.7L225.7 627.8L226.6 626.9L227.6 626.0L228.6 625.2L229.8 624.3L231.0 623.4L232.3 622.5L233.8 621.5L235.2 620.4L236.8 619.2L238.4 618.1L240.0 616.8L241.7 615.6L243.5 614.3L245.3 613.1L247.2 611.9L249.2 610.6L251.2 609.4L253.2 608.3L255.4 607.2L257.7 606.1L260.2 605.0L262.7 603.9L265.3 602.8L268.0 601.7L270.6 600.6L273.2 599.5L275.7 598.4L278.1 597.4L280.4 596.3L282.7 595.3L285.1 594.2L287.4 593.2L289.7 592.2L291.8 591.2L293.9 590.1L295.9 589.1L297.6 588.2L299.3 587.2L300.7 586.1L301.9 585.0L302.9 583.9L303.8 582.8L304.4 581.7L305.0 580.7L305.4 579.9L305.7 579.2L305.9 578.8L306.2 578.4L301.8 575.6L301.4 576.2L301.1 576.9L300.7 577.6L300.4 578.3L300.0 579.0L299.5 579.8L298.9 580.5L298.2 581.3L297.4 582.1L296.3 582.8L295.0 583.7L293.4 584.6L291.6 585.5L289.6 586.5L287.5 587.4L285.3 588.5L283.0 589.5L280.6 590.5L278.2 591.6L275.9 592.6L273.6 593.7L271.1 594.7L268.6 595.8L266.0 596.9L263.3 598.0L260.7 599.1L258.1 600.2L255.5 601.3L253.1 602.5L250.8 603.7L248.6 604.9L246.5 606.2L244.4 607.5L242.4 608.8L240.5 610.1L238.7 611.4L237.0 612.6L235.3 613.9L233.7 615.1L232.2 616.2L230.7 617.3L229.3 618.2L228.0 619.2L226.7 620.1L225.4 621.1L224.2 622.1L223.0 623.1L221.9 624.3L220.8 625.5L219.8 626.9L218.9 628.4L218.1 630.0L217.5 631.7L216.9 633.4L216.4 635.1L215.9 636.8L215.5 638.4L215.2 639.9L214.8 641.4L214.5 642.7L214.2 643.9L213.9 645.2L213.8 646.3L213.7 647.3L213.6 648.3L213.5 649.2L213.4 650.0L213.2 650.8L213.1 651.7L212.8 652.5L212.5 653.3L212.1 654.2L211.7 655.1L211.2 656.0L210.6 657.0L210.0 658.1L209.4 659.3L208.9 660.5L208.3 661.9L207.8 663.5L207.4 665.2L206.9 667.1L206.5 669.1L206.1 671.2L205.8 673.4L205.4 675.4L205.1 677.3L204.9 679.1L204.6 680.5L204.4 681.6ZM209.2 663.6L210.0 663.5L211.0 663.5L212.3 663.4L213.7 663.3L215.2 663.2L216.8 663.0L218.3 662.9L219.8 662.8L221.1 662.7L222.2 662.6L223.2 662.5L224.1 662.4L224.9 662.3L225.7 662.2L226.4 662.1L227.1 662.0L227.8 661.9L228.5 661.8L229.2 661.7L229.9 661.6L230.6 661.5L231.2 661.4L231.9 661.4L232.7 661.3L233.5 661.3L234.5 661.1L235.6 660.9L236.7 660.5L237.9 659.9L239.2 659.2L240.5 658.3L241.8 657.3L243.0 656.1L244.3 654.9L245.6 653.6L247.0 652.3L248.5 651.0L250.0 649.7L251.7 648.4L253.5 647.2L255.4 645.9L257.6 644.5L260.0 643.2L262.5 641.7L265.1 640.3L267.7 638.9L270.4 637.4L273.1 635.9L275.7 634.5L278.3 633.1L280.8 631.6L283.4 630.2L286.0 628.7L288.7 627.3L291.3 625.8L293.9 624.4L296.4 623.0L298.8 621.6L301.1 620.2L303.3 618.9L305.4 617.7L307.3 616.6L309.3 615.5L311.1 614.4L312.9 613.4L314.6 612.3L316.2 611.2L317.8 610.1L319.2 608.9L320.6 607.6L321.8 606.2L322.8 604.7L323.7 603.2L324.4 601.7L324.9 600.3L325.4 598.9L325.8 597.6L326.2 596.3L326.6 595.2L326.9 594.2L327.3 593.3L327.6 592.4L327.9 591.7L328.2 590.9L328.4 590.2L328.6 589.4L328.8 588.6L329.1 587.7L329.3 586.7L329.5 585.5L329.8 584.1L330.2 582.4L330.5 580.5L330.9 578.5L331.2 576.4L331.6 574.4L331.9 572.6L332.1 570.9L332.4 569.5L332.6 568.4L327.4 567.6L327.3 568.6L327.0 570.0L326.7 571.7L326.4 573.6L326.1 575.5L325.7 577.6L325.4 579.5L325.1 581.4L324.7 583.1L324.5 584.5L324.2 585.6L324.0 586.6L323.8 587.4L323.6 588.1L323.4 588.7L323.2 589.3L323.0 589.9L322.8 590.6L322.5 591.4L322.1 592.4L321.6 593.5L321.2 594.8L320.9 596.0L320.5 597.3L320.0 598.5L319.6 599.7L319.0 600.8L318.4 602.0L317.7 603.0L316.8 604.0L315.8 605.0L314.6 606.0L313.3 607.0L311.8 607.9L310.2 608.9L308.5 609.9L306.7 611.0L304.8 612.1L302.7 613.2L300.7 614.5L298.5 615.7L296.2 617.1L293.8 618.4L291.3 619.8L288.8 621.3L286.1 622.7L283.5 624.2L280.9 625.7L278.3 627.1L275.7 628.5L273.2 630.0L270.6 631.4L267.9 632.8L265.2 634.3L262.6 635.8L260.0 637.2L257.4 638.6L255.0 640.1L252.7 641.5L250.5 642.8L248.6 644.2L246.7 645.7L245.0 647.1L243.5 648.5L242.1 649.9L240.7 651.1L239.5 652.3L238.4 653.3L237.4 654.1L236.4 654.8L235.5 655.3L234.8 655.6L234.1 655.9L233.5 656.0L232.9 656.1L232.3 656.2L231.6 656.2L230.8 656.2L230.0 656.3L229.1 656.4L228.3 656.6L227.6 656.7L227.0 656.8L226.3 656.9L225.7 657.0L225.0 657.1L224.3 657.1L223.6 657.2L222.7 657.3L221.8 657.4L220.6 657.5L219.3 657.6L217.9 657.7L216.4 657.9L214.8 658.0L213.3 658.1L211.9 658.2L210.7 658.3L209.6 658.3L208.8 658.4ZM519.1 475.2L518.7 476.7L518.1 478.8L517.3 481.3L516.5 484.0L515.6 487.0L514.7 490.0L513.9 493.0L513.0 495.9L512.3 498.6L511.6 500.9L511.1 503.1L510.7 505.1L510.4 507.0L510.1 508.6L509.9 510.2L509.7 511.6L509.4 512.9L509.0 514.2L508.4 515.4L507.7 516.7L506.8 518.1L505.7 519.6L504.3 521.1L502.8 522.6L501.3 524.1L499.6 525.6L498.0 527.1L496.4 528.5L494.8 529.8L493.4 531.0L492.0 532.1L490.8 533.1L489.6 534.1L488.5 534.9L487.4 535.7L486.4 536.4L485.3 537.1L484.1 537.7L482.9 538.4L481.7 539.0L480.3 539.6L478.8 540.1L477.2 540.7L475.5 541.2L473.7 541.7L472.0 542.2L470.2 542.6L468.6 543.0L467.1 543.5L465.7 543.9L464.5 544.3L463.4 544.7L462.4 545.1L461.5 545.4L460.7 545.8L459.9 546.1L459.3 546.4L458.7 546.7L458.2 547.0L457.8 547.4L458.2 548.6L458.7 548.8L459.3 548.8L459.9 548.7L460.6 548.6L461.4 548.5L462.3 548.4L463.3 548.3L464.3 548.1L465.5 547.9L466.7 547.7L468.0 547.5L469.5 547.3L471.1 547.1L472.9 546.9L474.7 546.6L476.6 546.3L478.5 545.9L480.4 545.5L482.2 545.0L483.9 544.4L485.5 543.8L486.9 543.1L488.3 542.3L489.6 541.5L490.9 540.6L492.1 539.8L493.3 538.8L494.6 537.8L495.9 536.7L497.2 535.6L498.7 534.4L500.3 533.0L501.9 531.6L503.6 530.1L505.4 528.5L507.1 526.9L508.7 525.2L510.2 523.4L511.6 521.7L512.9 519.9L513.8 518.0L514.6 516.3L515.1 514.5L515.5 512.8L515.8 511.1L516.1 509.5L516.3 507.8L516.6 506.2L516.9 504.4L517.4 502.5L518.0 500.2L518.8 497.6L519.6 494.7L520.5 491.7L521.4 488.7L522.3 485.7L523.1 483.0L523.8 480.5L524.4 478.4L524.9 476.8ZM480.3 541.3L480.5 542.5L480.6 543.8L480.9 545.5L481.1 547.3L481.4 549.3L481.6 551.4L481.9 553.6L482.2 555.8L482.4 558.0L482.6 560.3L482.8 562.5L483.0 565.0L483.3 567.6L483.5 570.3L483.7 573.0L483.9 575.6L484.1 578.2L484.2 580.7L484.3 582.9L484.3 585.0L484.3 586.9L484.3 588.6L484.2 590.2L484.2 591.6L484.1 592.9L483.9 594.2L483.7 595.4L483.5 596.6L483.2 597.8L482.7 599.1L482.2 600.5L481.7 601.9L481.0 603.3L480.3 604.8L479.5 606.2L478.7 607.5L477.8 608.9L476.9 610.1L476.0 611.3L475.1 612.3L474.2 613.1L473.0 613.9L471.7 614.6L470.3 615.3L468.7 616.0L467.1 616.7L465.6 617.5L464.0 618.4L462.6 619.6L461.4 621.0L460.6 622.7L460.3 624.4L460.2 626.0L460.3 627.5L460.5 628.9L460.8 630.2L461.0 631.4L461.2 632.6L461.3 633.6L461.2 634.6L461.0 635.7L460.7 637.0L460.4 638.3L460.0 639.6L459.6 641.0L459.2 642.3L458.7 643.6L458.2 644.9L457.6 646.1L457.0 647.3L456.4 648.5L455.6 649.7L454.8 651.0L453.9 652.3L452.9 653.5L452.0 654.7L451.2 655.8L450.5 656.9L449.9 657.8L449.6 658.6L450.4 659.4L451.2 659.0L452.0 658.3L453.0 657.5L454.0 656.5L455.1 655.4L456.3 654.3L457.4 653.1L458.5 651.8L459.5 650.6L460.4 649.3L461.1 648.0L461.9 646.7L462.6 645.3L463.2 644.0L463.9 642.6L464.4 641.1L465.0 639.7L465.4 638.3L465.8 636.9L466.2 635.4L466.4 633.8L466.4 632.2L466.3 630.7L466.1 629.3L465.8 628.0L465.7 626.8L465.6 625.9L465.6 625.1L465.7 624.5L466.0 624.0L466.4 623.5L467.1 622.9L468.2 622.2L469.5 621.6L471.0 620.9L472.5 620.2L474.2 619.4L475.9 618.5L477.5 617.4L478.9 616.1L480.1 614.8L481.2 613.4L482.3 611.9L483.3 610.4L484.2 608.9L485.1 607.3L485.9 605.7L486.6 604.1L487.3 602.5L487.9 600.9L488.3 599.3L488.7 597.8L489.1 596.4L489.3 594.9L489.5 593.4L489.6 591.9L489.6 590.3L489.7 588.7L489.7 586.9L489.7 585.0L489.7 582.8L489.6 580.4L489.5 577.9L489.3 575.2L489.1 572.5L488.9 569.8L488.7 567.1L488.4 564.5L488.2 562.1L488.0 559.7L487.8 557.5L487.5 555.2L487.3 552.9L487.0 550.7L486.7 548.6L486.5 546.6L486.2 544.8L486.0 543.1L485.8 541.8L485.7 540.7ZM465.5 620.6L464.9 620.4L464.2 620.2L463.3 620.0L462.2 619.7L461.1 619.4L460.0 619.1L458.8 618.8L457.6 618.5L456.4 618.2L455.3 618.0L454.2 617.9L453.1 617.7L451.9 617.6L450.8 617.5L449.6 617.6L448.6 617.7L447.6 617.9L446.7 618.1L445.9 618.3L445.3 618.8L445.3 619.6L445.8 620.2L446.5 620.5L447.4 620.8L448.4 621.1L449.4 621.3L450.5 621.5L451.6 621.6L452.7 621.7L453.7 621.8L454.7 622.0L455.6 622.2L456.7 622.4L457.8 622.6L459.0 622.9L460.1 623.2L461.2 623.5L462.2 623.8L463.1 624.1L463.9 624.3L464.5 624.4ZM516.7 501.7L517.8 502.6L519.2 503.7L520.9 505.0L522.8 506.5L524.9 508.1L527.0 509.8L529.0 511.5L531.0 513.2L532.9 514.9L534.4 516.5L535.9 518.1L537.3 519.9L538.7 521.7L540.1 523.6L541.4 525.5L542.6 527.4L543.8 529.2L545.0 530.8L546.1 532.2L547.1 533.4L548.0 534.4L548.7 535.2L549.2 535.9L549.7 536.5L550.1 536.9L550.4 537.3L550.7 537.6L551.0 537.9L551.2 538.1L551.6 538.2L552.4 537.8L552.4 537.4L552.4 537.0L552.3 536.7L552.1 536.3L552.0 535.8L551.7 535.2L551.4 534.5L551.0 533.7L550.5 532.7L549.9 531.6L549.1 530.2L548.3 528.7L547.3 526.9L546.2 525.1L544.9 523.1L543.6 521.2L542.2 519.2L540.7 517.2L539.2 515.3L537.6 513.5L535.8 511.8L533.9 510.0L531.8 508.2L529.7 506.4L527.6 504.7L525.5 503.1L523.6 501.6L521.9 500.3L520.4 499.2L519.3 498.3ZM291.0 401.7L289.6 401.6L287.8 401.6L285.6 401.8L283.3 402.0L280.7 402.2L278.1 402.5L275.4 402.9L272.8 403.3L270.4 403.8L268.2 404.4L266.1 405.1L264.3 405.9L262.6 406.8L261.0 407.8L259.5 408.7L258.0 409.7L256.5 410.6L254.9 411.4L253.2 412.2L251.3 412.9L249.1 413.5L246.6 414.1L243.9 414.6L241.1 415.1L238.2 415.5L235.3 416.0L232.4 416.5L229.6 417.0L226.9 417.7L224.4 418.4L222.2 419.2L220.1 420.1L218.1 421.0L216.3 422.0L214.6 422.9L213.0 423.9L211.5 424.8L210.0 425.7L208.6 426.6L207.2 427.4L205.9 428.1L204.6 428.9L203.4 429.5L202.3 430.2L201.2 430.8L200.2 431.4L199.0 432.0L197.8 432.6L196.5 433.3L195.0 434.0L193.4 434.6L191.6 435.2L189.7 435.9L187.7 436.5L185.6 437.2L183.3 438.0L181.0 438.9L178.6 439.9L176.2 441.1L173.8 442.4L171.3 444.0L168.6 445.8L165.9 447.8L163.2 449.8L160.4 452.0L157.7 454.1L155.1 456.3L152.6 458.3L150.4 460.2L148.4 461.9L146.6 463.4L144.9 464.9L143.4 466.2L142.1 467.5L140.8 468.7L139.6 469.9L138.5 471.1L137.4 472.3L136.4 473.6L135.4 474.9L134.4 476.3L133.5 477.7L132.6 479.1L131.9 480.5L131.1 481.9L130.5 483.3L129.8 484.7L129.3 486.1L128.7 487.5L128.2 489.0L127.7 490.5L127.2 492.0L126.8 493.5L126.4 495.1L126.0 496.6L125.7 498.2L125.5 499.8L125.2 501.4L125.0 503.0L124.8 504.7L124.7 506.5L124.6 508.3L124.6 510.2L124.6 512.0L124.7 513.9L124.7 515.7L124.8 517.5L124.8 519.2L124.8 520.9L124.8 522.4L124.8 524.0L124.7 525.6L124.6 527.3L124.5 528.9L124.4 530.5L124.3 532.0L124.2 533.4L124.1 534.6L124.1 535.7L124.0 536.5L130.0 536.9L130.0 536.1L130.1 535.0L130.2 533.8L130.3 532.4L130.4 530.9L130.5 529.3L130.6 527.6L130.7 525.9L130.7 524.2L130.8 522.6L130.8 520.9L130.8 519.1L130.8 517.3L130.7 515.5L130.6 513.7L130.6 511.9L130.6 510.2L130.6 508.5L130.7 506.8L130.8 505.3L131.0 503.7L131.1 502.2L131.4 500.7L131.6 499.3L131.9 497.9L132.2 496.5L132.6 495.1L133.0 493.7L133.4 492.3L133.8 491.0L134.3 489.6L134.8 488.3L135.4 487.0L135.9 485.8L136.5 484.5L137.1 483.3L137.8 482.1L138.5 480.9L139.3 479.7L140.2 478.5L141.1 477.3L142.0 476.2L143.0 475.1L144.0 474.0L145.0 472.9L146.2 471.8L147.5 470.6L148.9 469.4L150.5 468.0L152.2 466.5L154.2 464.8L156.5 462.9L158.9 460.9L161.5 458.8L164.1 456.7L166.8 454.6L169.5 452.6L172.1 450.7L174.6 449.0L176.8 447.6L179.0 446.4L181.1 445.3L183.3 444.4L185.4 443.6L187.5 442.9L189.6 442.2L191.6 441.6L193.6 440.9L195.6 440.2L197.4 439.4L199.1 438.7L200.5 438.0L201.8 437.3L203.1 436.6L204.2 436.0L205.3 435.4L206.4 434.7L207.6 434.1L208.8 433.4L210.2 432.6L211.7 431.8L213.2 430.8L214.7 429.9L216.1 428.9L217.6 428.0L219.2 427.0L220.8 426.1L222.5 425.2L224.3 424.4L226.2 423.6L228.3 422.9L230.8 422.3L233.4 421.6L236.2 421.1L239.1 420.5L242.0 419.9L244.9 419.3L247.7 418.6L250.3 417.9L252.7 417.1L254.9 416.2L256.9 415.2L258.6 414.1L260.2 413.1L261.7 412.0L263.2 411.0L264.6 410.0L266.0 409.1L267.6 408.3L269.2 407.6L271.2 407.0L273.5 406.3L276.0 405.8L278.5 405.2L281.1 404.7L283.6 404.2L285.9 403.7L288.0 403.3L289.7 402.9L291.0 402.3ZM198.1 437.3L199.0 436.6L200.3 435.5L201.8 434.3L203.4 432.9L205.2 431.5L206.9 430.0L208.6 428.6L210.1 427.4L211.3 426.4L212.2 425.6L208.4 421.0L207.5 421.7L206.2 422.8L204.7 424.0L203.1 425.4L201.3 426.8L199.6 428.3L197.9 429.7L196.4 430.9L195.2 431.9L194.3 432.7ZM279.8 433.9L279.3 433.7L278.7 433.4L277.9 433.1L277.0 432.6L275.9 432.1L274.7 431.6L273.4 431.2L272.0 430.8L270.5 430.5L268.9 430.3L267.3 430.3L265.7 430.3L264.0 430.4L262.3 430.6L260.5 430.8L258.7 431.0L256.9 431.2L255.1 431.5L253.3 431.8L251.6 432.0L249.7 432.3L247.8 432.6L245.9 433.0L244.0 433.3L242.0 433.7L240.1 434.1L238.3 434.4L236.5 434.8L234.8 435.1L233.2 435.3L231.8 435.5L230.5 435.7L229.2 435.8L227.9 435.9L226.6 435.9L225.3 436.1L224.0 436.2L222.7 436.4L221.4 436.8L220.1 437.2L218.8 437.8L217.6 438.6L216.6 439.3L215.7 440.1L214.9 440.9L214.1 441.7L213.4 442.4L212.7 443.0L212.0 443.6L211.2 444.2L210.2 444.7L209.2 445.3L208.1 445.9L207.0 446.4L205.8 447.0L204.5 447.7L203.1 448.3L201.7 449.1L200.3 449.9L198.8 450.7L197.2 451.7L195.6 452.7L193.9 453.8L192.1 454.9L190.3 456.1L188.6 457.3L186.8 458.4L185.1 459.6L183.5 460.7L182.0 461.7L180.6 462.7L179.2 463.6L177.9 464.5L176.5 465.3L175.2 466.2L174.0 467.1L172.7 468.1L171.5 469.0L170.3 470.1L169.1 471.2L168.0 472.3L167.0 473.5L166.0 474.6L165.0 475.8L164.1 477.0L163.3 478.3L162.5 479.6L161.7 480.9L160.9 482.2L160.1 483.6L159.4 485.2L158.6 486.9L157.9 488.6L157.2 490.4L156.6 492.2L155.9 493.9L155.4 495.5L154.9 496.9L154.5 498.1L154.2 499.0L159.8 501.0L160.2 500.1L160.6 498.9L161.1 497.5L161.6 495.9L162.2 494.2L162.8 492.5L163.5 490.8L164.1 489.2L164.8 487.7L165.5 486.4L166.1 485.1L166.8 483.9L167.5 482.8L168.3 481.6L169.0 480.5L169.8 479.4L170.6 478.4L171.5 477.4L172.4 476.4L173.3 475.4L174.3 474.5L175.3 473.7L176.3 472.8L177.5 472.0L178.6 471.2L179.9 470.3L181.2 469.5L182.5 468.6L183.9 467.7L185.4 466.7L186.9 465.6L188.5 464.5L190.2 463.4L191.9 462.3L193.7 461.1L195.4 459.9L197.1 458.8L198.8 457.8L200.4 456.8L201.8 455.9L203.2 455.1L204.5 454.4L205.8 453.7L207.1 453.0L208.4 452.4L209.6 451.8L210.8 451.2L212.0 450.6L213.2 449.9L214.4 449.2L215.6 448.4L216.6 447.6L217.6 446.7L218.4 445.9L219.1 445.2L219.8 444.5L220.4 444.0L221.0 443.5L221.6 443.1L222.3 442.8L223.1 442.5L224.0 442.3L224.9 442.1L225.9 442.0L227.1 441.9L228.3 441.8L229.6 441.8L231.0 441.6L232.6 441.5L234.2 441.3L235.8 441.0L237.6 440.7L239.4 440.3L241.2 440.0L243.2 439.6L245.1 439.2L247.0 438.9L248.9 438.5L250.7 438.2L252.4 438.0L254.2 437.7L256.0 437.4L257.8 437.2L259.5 436.9L261.2 436.7L262.9 436.5L264.5 436.4L265.9 436.3L267.3 436.3L268.5 436.3L269.5 436.4L270.6 436.6L271.6 436.9L272.6 437.3L273.6 437.7L274.5 438.1L275.4 438.5L276.2 438.9L276.9 439.2L277.6 439.5ZM223.9 441.2L224.2 440.7L224.4 440.1L224.8 439.3L225.2 438.4L225.6 437.5L226.0 436.5L226.0 435.5L225.9 434.5L225.6 433.6L224.8 432.6L224.2 432.4L223.0 432.4L222.1 432.8L221.3 433.4L220.5 434.1L220.1 435.0L219.7 436.0L219.3 436.9L219.0 437.7L218.7 438.3L218.5 438.8ZM259.3 450.6L258.6 450.9L258.1 451.4L257.4 452.0L256.8 452.7L256.1 453.4L255.3 454.2L254.5 454.8L253.6 455.3L252.6 455.8L251.6 456.0L250.4 456.2L248.9 456.2L247.3 456.1L245.5 456.0L243.5 455.8L241.5 455.6L239.5 455.4L237.5 455.3L235.5 455.2L233.6 455.2L231.8 455.3L230.0 455.4L228.3 455.5L226.6 455.6L224.9 455.8L223.2 456.0L221.5 456.3L219.8 456.6L218.0 456.9L216.3 457.2L214.6 457.6L212.8 458.0L211.1 458.5L209.3 459.0L207.5 459.5L205.7 460.1L203.9 460.8L202.2 461.5L200.5 462.3L198.8 463.2L197.2 464.2L195.7 465.3L194.2 466.5L192.8 467.7L191.5 468.9L190.2 470.1L189.0 471.3L187.9 472.5L186.8 473.5L185.7 474.5L184.7 475.5L183.8 476.4L182.9 477.2L182.0 478.1L181.2 478.9L180.4 479.7L179.6 480.5L178.9 481.3L178.1 482.1L177.3 482.9L176.6 483.7L175.8 484.5L174.9 485.2L174.1 486.1L173.2 486.9L172.3 487.8L171.4 488.7L170.6 489.8L169.9 490.9L169.3 492.0L168.8 493.2L168.4 494.4L168.1 495.6L167.8 496.8L167.6 498.1L167.5 499.4L167.6 500.7L167.7 502.0L168.0 503.3L168.5 504.5L169.1 505.7L169.9 506.8L170.8 507.8L171.7 508.6L172.7 509.4L173.8 510.2L174.8 510.8L175.9 511.5L177.0 512.1L178.1 512.7L179.3 513.3L180.6 513.8L182.0 514.4L183.4 514.9L184.8 515.4L186.2 515.9L187.6 516.3L189.0 516.6L190.3 516.9L191.6 517.2L192.8 517.3L194.1 517.3L195.3 517.3L196.4 517.1L197.5 517.0L198.4 516.8L199.2 516.6L199.9 516.4L200.4 516.3L200.8 516.3L199.8 510.3L199.3 510.4L198.6 510.6L197.9 510.7L197.1 510.9L196.4 511.1L195.6 511.2L194.8 511.3L194.0 511.3L193.2 511.3L192.4 511.2L191.5 511.1L190.4 510.8L189.2 510.5L188.0 510.1L186.7 509.7L185.4 509.3L184.2 508.8L183.0 508.3L181.9 507.8L180.9 507.3L179.9 506.8L178.9 506.3L178.0 505.7L177.1 505.2L176.3 504.6L175.6 504.0L175.0 503.5L174.5 503.0L174.2 502.5L173.9 502.1L173.8 501.6L173.6 501.0L173.6 500.3L173.5 499.5L173.6 498.7L173.7 497.8L173.9 497.0L174.1 496.1L174.4 495.3L174.7 494.6L175.0 493.9L175.5 493.3L176.0 492.6L176.7 491.9L177.4 491.2L178.2 490.4L179.0 489.6L179.9 488.8L180.8 488.0L181.7 487.1L182.5 486.3L183.2 485.5L184.0 484.7L184.7 483.9L185.5 483.1L186.3 482.3L187.1 481.5L187.9 480.7L188.9 479.8L189.9 478.9L190.9 477.8L192.1 476.7L193.2 475.6L194.4 474.4L195.6 473.3L196.8 472.2L198.0 471.1L199.3 470.1L200.5 469.2L201.8 468.4L203.1 467.7L204.6 467.0L206.1 466.4L207.7 465.8L209.3 465.2L211.0 464.7L212.7 464.2L214.3 463.7L216.0 463.2L217.7 462.8L219.3 462.3L220.9 461.9L222.5 461.6L224.0 461.3L225.6 461.0L227.2 460.7L228.8 460.4L230.5 460.2L232.2 460.0L233.8 459.8L235.5 459.7L237.4 459.6L239.3 459.6L241.3 459.7L243.3 459.7L245.3 459.7L247.2 459.7L249.1 459.6L250.8 459.3L252.4 459.0L253.8 458.4L255.0 457.6L256.1 456.8L257.0 455.8L257.7 454.9L258.3 453.9L258.8 453.0L259.2 452.3L259.6 451.6L259.7 451.0ZM244.4 458.9L244.6 459.3L244.8 459.8L245.1 460.4L245.5 461.0L245.9 461.7L246.2 462.4L246.6 463.0L246.9 463.6L247.2 464.1L247.4 464.4L252.6 461.6L252.4 461.2L252.2 460.7L251.9 460.1L251.5 459.5L251.1 458.8L250.8 458.1L250.4 457.5L250.1 456.9L249.8 456.4L249.6 456.1ZM223.4 474.2L223.0 474.9L222.8 475.7L222.6 476.6L222.5 477.6L222.4 478.8L222.3 480.1L222.4 481.4L222.5 482.9L222.7 484.3L223.1 485.8L223.6 487.4L224.2 489.0L225.0 490.6L225.7 492.3L226.6 494.0L227.6 495.6L228.5 497.2L229.5 498.7L230.3 500.1L231.1 501.5L231.7 502.7L232.3 503.9L232.9 505.2L233.5 506.5L234.1 507.8L234.8 509.1L235.6 510.3L236.5 511.5L237.5 512.6L238.7 513.6L240.1 514.5L241.5 515.1L243.1 515.6L244.6 515.9L246.1 516.2L247.6 516.3L248.9 516.4L250.1 516.5L251.1 516.4L251.9 516.1L252.1 515.5L251.5 514.8L250.6 514.3L249.5 513.8L248.3 513.3L247.0 512.8L245.8 512.2L244.5 511.6L243.5 511.0L242.6 510.4L241.9 509.8L241.4 509.1L240.9 508.3L240.4 507.4L239.9 506.4L239.5 505.3L239.0 504.1L238.4 502.8L237.8 501.4L237.1 500.0L236.3 498.5L235.5 497.1L234.6 495.6L233.7 494.1L232.7 492.5L231.8 490.9L230.8 489.4L229.8 488.0L228.9 486.6L228.1 485.3L227.5 484.2L227.0 483.1L226.5 481.9L226.2 480.8L225.9 479.6L225.6 478.5L225.3 477.5L225.1 476.5L224.8 475.6L224.6 474.8L224.0 474.2ZM210.3 489.5L211.3 490.5L212.6 491.0L214.1 491.4L215.7 491.5L217.4 491.3L219.0 491.1L220.6 490.9L222.0 490.7L223.2 490.6L224.1 490.5L223.3 484.5L222.5 484.6L221.3 484.8L219.9 485.0L218.3 485.2L216.6 485.4L215.0 485.6L213.4 486.2L212.1 486.9L211.0 487.6L210.3 488.9ZM238.9 509.1L238.0 509.5L236.9 510.1L235.5 510.8L233.9 511.6L232.2 512.5L230.4 513.5L228.6 514.4L226.9 515.5L225.2 516.5L223.6 517.5L222.2 518.5L220.8 519.6L219.3 520.6L217.9 521.7L216.5 522.8L215.2 524.0L213.9 525.2L212.7 526.4L211.5 527.7L210.4 528.9L209.5 530.2L208.6 531.5L207.8 532.8L207.1 534.1L206.5 535.5L205.9 536.8L205.4 538.2L204.9 539.6L204.5 541.1L204.1 542.6L203.7 544.2L203.5 546.0L203.3 547.8L203.2 549.7L203.1 551.6L203.1 553.4L203.1 555.2L203.1 556.9L203.2 558.5L203.3 560.0L203.5 561.4L203.7 562.8L204.0 564.1L204.3 565.2L204.7 566.3L205.1 567.3L205.5 568.2L205.8 569.0L206.2 569.6L206.7 570.1L207.3 569.9L207.6 569.3L207.6 568.5L207.5 567.7L207.5 566.8L207.4 565.7L207.3 564.7L207.2 563.6L207.2 562.4L207.2 561.2L207.3 560.0L207.4 558.6L207.6 557.1L207.8 555.5L208.0 553.8L208.2 552.0L208.5 550.3L208.8 548.6L209.2 547.0L209.6 545.4L209.9 544.0L210.3 542.7L210.7 541.4L211.1 540.2L211.5 539.0L212.0 537.9L212.5 536.8L213.0 535.8L213.7 534.7L214.4 533.7L215.2 532.7L216.0 531.6L217.0 530.6L218.0 529.5L219.2 528.5L220.4 527.4L221.7 526.4L223.0 525.4L224.3 524.4L225.7 523.4L227.0 522.5L228.4 521.6L229.9 520.6L231.6 519.7L233.3 518.7L235.0 517.8L236.6 517.0L238.2 516.2L239.6 515.5L240.8 514.8L241.7 514.3ZM203.4 497.4L202.5 498.3L201.8 499.6L201.2 501.0L200.6 502.7L199.9 504.5L199.3 506.5L198.6 508.4L198.0 510.4L197.5 512.4L197.1 514.3L196.6 516.2L196.0 518.4L195.4 520.7L195.0 523.0L194.6 525.4L194.2 527.7L194.0 529.9L193.8 531.8L193.8 533.5L194.2 534.9L194.8 535.1L195.9 534.1L196.8 532.7L197.6 530.9L198.5 528.9L199.5 526.8L200.4 524.5L201.2 522.2L201.8 519.9L202.4 517.7L202.9 515.7L203.4 513.7L203.8 511.7L204.1 509.6L204.3 507.5L204.5 505.5L204.6 503.5L204.6 501.7L204.6 500.1L204.5 498.7L204.0 497.6ZM129.7 514.8L130.1 514.5L130.7 514.0L131.3 513.4L132.0 512.9L132.8 512.2L133.6 511.6L134.4 511.0L135.2 510.3L136.0 509.8L136.8 509.3L137.7 508.7L138.7 508.2L139.7 507.7L140.7 507.1L141.7 506.6L142.8 506.1L143.8 505.7L144.9 505.2L145.9 504.9L146.9 504.6L148.0 504.4L149.1 504.2L150.2 504.0L151.4 503.9L152.5 503.8L153.7 503.7L154.9 503.7L156.1 503.7L157.3 503.7L158.5 503.8L159.7 503.9L160.9 504.1L162.3 504.3L163.7 504.6L165.1 504.9L166.4 505.2L167.7 505.5L168.8 505.8L169.8 506.1L170.6 506.2L171.8 500.4L171.1 500.2L170.2 500.0L169.1 499.7L167.8 499.4L166.4 499.1L164.9 498.7L163.4 498.4L161.9 498.2L160.4 497.9L158.9 497.8L157.6 497.7L156.2 497.7L154.9 497.7L153.5 497.7L152.2 497.8L150.8 497.9L149.4 498.0L148.1 498.2L146.8 498.5L145.5 498.8L144.1 499.2L142.8 499.6L141.6 500.1L140.3 500.6L139.1 501.2L138.0 501.8L136.8 502.4L135.8 503.0L134.7 503.6L133.8 504.1L132.7 504.8L131.7 505.5L130.8 506.2L129.8 506.9L129.0 507.6L128.2 508.3L127.4 508.9L126.8 509.4L126.3 509.8L125.9 510.2ZM168.6 558.6L169.0 559.4L169.6 559.9L170.4 560.5L171.3 561.2L172.4 561.8L173.6 562.4L174.8 563.0L176.2 563.6L177.6 564.1L179.1 564.5L180.7 564.8L182.4 564.9L184.2 565.0L186.1 565.0L188.0 565.0L189.9 565.0L191.7 564.9L193.4 564.9L195.0 564.8L196.4 564.7L197.8 564.6L199.1 564.4L200.3 564.2L201.4 564.0L202.5 563.8L203.4 563.6L204.2 563.3L204.9 563.2L205.5 563.0L205.9 562.9L204.7 557.1L204.1 557.2L203.5 557.3L202.7 557.5L202.0 557.7L201.1 557.9L200.2 558.1L199.3 558.3L198.2 558.5L197.1 558.6L196.0 558.7L194.6 558.8L193.1 558.9L191.5 558.9L189.7 559.0L187.9 559.0L186.1 559.0L184.4 559.0L182.7 558.9L181.2 558.9L179.9 558.9L178.6 558.9L177.4 558.8L176.1 558.6L174.9 558.4L173.7 558.2L172.6 558.0L171.5 557.8L170.5 557.7L169.6 557.7L168.8 558.0ZM173.2 559.8L172.9 560.5L172.6 561.4L172.1 562.5L171.6 563.7L171.1 564.9L170.5 566.3L170.0 567.6L169.4 568.9L168.9 570.2L168.4 571.4L168.0 572.5L167.5 573.6L167.1 574.8L166.7 575.9L166.3 577.0L165.9 578.0L165.5 579.0L165.1 580.0L164.7 580.9L164.3 581.7L163.9 582.4L163.6 583.1L163.2 583.7L162.8 584.3L162.4 584.9L162.0 585.6L161.5 586.2L161.1 587.0L160.6 587.8L160.1 588.6L159.7 589.6L159.3 590.5L158.9 591.4L158.5 592.4L158.1 593.3L157.7 594.3L157.3 595.2L156.9 596.1L156.5 596.9L156.1 597.7L155.7 598.4L155.2 599.1L154.5 599.8L153.8 600.6L153.0 601.5L152.2 602.5L151.5 603.6L150.8 604.9L150.2 606.3L149.8 607.8L149.7 609.4L149.7 611.0L149.8 612.6L150.1 614.3L150.4 615.9L150.7 617.6L151.2 619.1L151.7 620.7L152.2 622.1L152.7 623.4L153.2 624.6L153.8 625.8L154.3 626.9L154.9 628.0L155.6 629.0L156.3 630.0L157.0 631.0L157.8 632.0L158.7 632.9L159.6 633.9L160.7 635.0L162.0 636.1L163.4 637.2L164.9 638.3L166.4 639.3L167.9 640.3L169.3 641.2L170.5 641.9L171.6 642.5L172.6 642.7L173.0 642.3L172.6 641.3L171.7 640.4L170.7 639.3L169.6 638.1L168.3 636.9L167.1 635.7L165.8 634.4L164.7 633.2L163.6 632.1L162.8 631.1L162.1 630.1L161.4 629.2L160.8 628.3L160.3 627.4L159.8 626.5L159.4 625.6L159.0 624.7L158.6 623.7L158.2 622.7L157.9 621.6L157.5 620.4L157.2 619.0L156.9 617.6L156.6 616.2L156.3 614.7L156.0 613.3L155.8 612.0L155.7 610.7L155.7 609.6L155.8 608.8L155.9 608.1L156.2 607.5L156.5 606.8L157.0 606.1L157.6 605.4L158.3 604.6L159.1 603.7L159.8 602.8L160.6 601.8L161.3 600.7L161.9 599.6L162.4 598.6L162.8 597.6L163.2 596.6L163.6 595.6L164.0 594.7L164.4 593.8L164.8 592.9L165.1 592.1L165.5 591.4L165.8 590.7L166.2 590.1L166.6 589.5L167.0 588.9L167.4 588.2L167.8 587.6L168.3 586.9L168.8 586.1L169.2 585.2L169.7 584.3L170.2 583.3L170.6 582.3L171.0 581.3L171.4 580.2L171.9 579.1L172.3 578.0L172.7 576.9L173.1 575.8L173.5 574.7L174.0 573.6L174.5 572.5L175.0 571.2L175.5 569.9L176.1 568.6L176.6 567.3L177.2 566.0L177.7 564.8L178.1 563.7L178.5 562.8L178.8 562.2ZM140.2 585.3L141.4 586.7L143.3 587.8L145.5 588.8L148.1 589.8L150.9 590.4L153.7 591.0L156.3 591.6L158.7 592.2L160.7 592.6L162.1 592.9L163.5 587.1L162.0 586.8L160.0 586.3L157.6 585.8L155.0 585.2L152.2 584.6L149.4 584.0L146.7 583.7L144.2 583.7L142.1 583.9L140.4 584.7ZM139.3 600.2L139.5 601.7L140.2 603.0L141.3 604.3L142.5 605.6L144.1 606.6L145.6 607.7L147.1 608.7L148.4 609.5L149.5 610.3L150.3 610.8L153.7 605.8L152.9 605.3L151.8 604.5L150.4 603.7L149.0 602.7L147.4 601.7L145.9 600.6L144.2 600.0L142.6 599.5L141.1 599.3L139.7 599.8ZM113.7 546.2L114.2 546.0L114.8 545.8L115.5 545.6L116.3 545.3L117.2 545.1L118.1 544.8L119.1 544.5L120.1 544.2L121.0 544.0L122.0 543.7L122.9 543.5L123.9 543.2L125.0 542.9L126.0 542.7L127.1 542.4L128.2 542.2L129.3 541.9L130.4 541.7L131.5 541.5L132.5 541.3L133.6 541.1L134.7 540.9L135.9 540.7L137.0 540.6L138.2 540.4L139.4 540.3L140.6 540.1L141.8 540.0L143.0 539.8L144.2 539.7L145.4 539.4L146.5 539.2L147.6 538.9L148.6 538.6L149.6 538.4L150.5 538.2L151.4 538.0L152.3 537.8L153.2 537.7L154.2 537.6L155.4 537.7L156.9 537.9L158.6 538.1L160.3 538.5L162.1 538.8L163.9 539.1L165.5 539.4L167.0 539.7L168.3 539.8L169.4 539.5L169.6 538.9L168.9 538.1L167.8 537.4L166.4 536.7L164.9 535.9L163.2 535.2L161.5 534.4L159.8 533.8L158.0 533.2L156.3 532.7L154.8 532.4L153.3 532.2L151.9 532.1L150.6 532.2L149.3 532.3L148.2 532.6L147.1 532.8L146.1 533.1L145.2 533.4L144.2 533.6L143.2 533.7L142.2 533.9L141.0 534.0L139.9 534.2L138.7 534.3L137.5 534.5L136.3 534.6L135.1 534.8L133.9 535.0L132.7 535.1L131.5 535.3L130.3 535.6L129.1 535.8L128.0 536.1L126.8 536.3L125.7 536.6L124.6 536.8L123.5 537.1L122.5 537.4L121.4 537.6L120.4 537.9L119.4 538.2L118.4 538.5L117.4 538.8L116.4 539.0L115.4 539.3L114.5 539.6L113.7 539.9L113.0 540.1L112.4 540.3L111.9 540.4ZM150.0 512.6L149.3 513.6L149.0 514.8L148.8 516.3L148.8 517.9L148.7 519.6L148.8 521.3L149.1 522.9L149.4 524.5L149.6 526.0L149.9 527.3L150.1 528.4L150.3 529.5L150.5 530.5L150.7 531.5L150.9 532.4L151.0 533.2L151.2 533.9L151.3 534.6L151.5 535.2L151.6 535.6L157.4 534.4L157.3 533.9L157.2 533.3L157.1 532.7L156.9 531.9L156.7 531.1L156.6 530.2L156.4 529.3L156.2 528.3L156.0 527.2L155.7 526.1L155.5 524.9L155.3 523.5L155.0 521.9L154.7 520.2L154.2 518.6L153.6 517.0L152.9 515.5L152.3 514.2L151.6 513.2L150.6 512.4ZM139.1 541.1L139.0 541.6L138.8 542.3L138.6 543.2L138.3 544.2L138.0 545.3L137.8 546.5L137.5 547.8L137.4 549.2L137.3 550.5L137.3 551.9L137.5 553.3L137.8 554.8L138.2 556.2L138.7 557.6L139.5 558.9L140.2 560.2L141.0 561.3L141.7 562.2L142.4 563.0L143.4 563.4L144.0 563.2L144.5 562.2L144.6 561.2L144.6 560.0L144.5 558.7L144.3 557.3L144.2 555.9L143.9 554.6L143.6 553.4L143.4 552.3L143.3 551.5L143.3 550.6L143.3 549.7L143.5 548.7L143.6 547.7L143.9 546.6L144.1 545.6L144.4 544.7L144.6 543.8L144.8 543.0L144.9 542.3ZM110.1 546.2L109.8 546.9L109.3 547.8L108.7 548.9L108.0 550.2L107.2 551.6L106.5 553.1L105.8 554.6L105.1 556.2L104.5 557.8L104.1 559.3L103.8 560.9L103.6 562.5L103.6 564.1L103.6 565.7L103.6 567.2L103.7 568.6L103.8 569.9L103.9 571.0L104.0 571.9L104.0 572.6L110.0 572.4L110.0 571.6L109.9 570.6L109.8 569.4L109.7 568.2L109.6 566.9L109.6 565.5L109.6 564.2L109.6 562.9L109.7 561.7L109.9 560.7L110.2 559.6L110.7 558.4L111.2 557.1L111.9 555.7L112.6 554.3L113.3 553.0L113.9 551.8L114.6 550.6L115.1 549.6L115.5 548.8ZM139.0 547.3L138.4 547.6L137.6 547.9L136.5 548.3L135.3 548.8L133.9 549.4L132.5 550.0L131.1 550.8L129.7 551.7L128.3 552.7L127.2 553.9L126.3 555.2L125.6 556.5L125.0 557.8L124.6 559.2L124.2 560.5L124.0 561.9L123.7 563.3L123.5 564.7L123.3 566.1L123.0 567.6L122.8 569.2L122.7 571.0L122.6 572.8L122.5 574.7L122.5 576.5L122.4 578.3L122.3 580.0L122.2 581.5L121.9 582.9L121.6 584.1L121.3 585.1L120.7 586.0L120.1 586.9L119.4 587.8L118.6 588.7L117.7 589.7L116.8 590.8L115.9 591.9L115.0 593.2L114.3 594.5L113.7 595.9L113.3 597.2L112.9 598.6L112.6 599.9L112.3 601.3L112.1 602.6L112.0 603.9L111.9 605.2L111.9 606.4L112.0 607.6L112.1 608.7L112.3 609.7L112.6 610.7L112.9 611.6L113.4 612.4L113.8 613.3L114.4 614.0L114.9 614.8L115.6 615.5L116.2 616.3L117.1 617.1L118.1 618.1L119.2 619.0L120.4 619.9L121.7 620.7L122.9 621.5L124.0 622.3L125.1 622.9L126.0 623.4L126.8 623.5L127.2 623.1L126.9 622.3L126.3 621.4L125.5 620.5L124.5 619.5L123.6 618.5L122.6 617.5L121.6 616.4L120.7 615.4L119.9 614.5L119.4 613.7L118.9 613.0L118.4 612.3L118.0 611.6L117.7 611.0L117.5 610.5L117.3 609.9L117.2 609.4L117.1 608.8L117.0 608.1L117.0 607.4L117.1 606.6L117.2 605.6L117.3 604.6L117.5 603.5L117.8 602.4L118.1 601.3L118.5 600.2L118.9 599.1L119.3 598.0L119.7 597.1L120.1 596.3L120.7 595.5L121.4 594.6L122.2 593.7L123.1 592.7L124.0 591.6L124.9 590.5L125.9 589.1L126.7 587.6L127.4 585.9L127.8 584.2L128.1 582.3L128.3 580.4L128.4 578.6L128.5 576.7L128.5 574.8L128.6 573.0L128.7 571.4L128.8 569.8L129.0 568.4L129.2 567.0L129.4 565.6L129.6 564.3L129.9 563.0L130.1 561.9L130.4 560.8L130.7 559.9L131.0 559.0L131.4 558.3L131.8 557.7L132.3 557.2L133.1 556.6L134.0 556.0L135.1 555.4L136.3 554.9L137.5 554.4L138.7 553.9L139.8 553.5L140.8 553.1L141.6 552.7ZM109.7 577.0L110.8 576.6L112.2 576.1L114.0 575.5L115.9 574.8L118.0 574.1L120.1 573.3L122.0 572.6L123.8 572.0L125.2 571.5L126.3 571.1L124.3 565.5L123.2 565.9L121.8 566.4L120.0 567.0L118.1 567.7L116.0 568.4L113.9 569.2L112.0 569.9L110.2 570.5L108.8 571.0L107.7 571.4ZM102.0 613.8L102.9 613.8L104.0 613.8L105.4 613.8L107.0 613.8L108.6 613.8L110.3 613.8L111.9 613.8L113.3 613.8L114.4 613.8L115.3 613.8L115.3 607.8L114.4 607.8L113.3 607.8L111.9 607.8L110.3 607.8L108.6 607.8L107.0 607.8L105.4 607.8L104.0 607.8L102.9 607.8L102.0 607.8ZM231.1 550.4L231.8 550.5L232.6 550.6L233.0 550.6L233.3 550.6L233.3 550.6L233.2 550.5L233.1 550.4L233.0 550.4L233.2 550.6L233.4 551.1L233.7 552.1L234.1 553.4L234.4 555.0L234.8 556.8L235.2 558.8L235.6 560.9L236.0 563.0L236.4 565.1L236.9 567.2L237.4 569.1L237.9 570.9L238.5 572.8L239.1 574.6L239.7 576.5L240.3 578.3L241.1 580.0L241.8 581.6L242.6 583.2L243.4 584.7L244.1 586.0L244.9 587.2L245.7 588.4L246.6 589.4L247.4 590.3L248.2 591.2L249.0 591.9L249.8 592.5L250.4 593.0L251.0 593.3L251.8 593.5L252.2 593.1L252.3 592.4L252.0 591.7L251.6 590.9L251.2 590.1L250.7 589.2L250.2 588.3L249.7 587.3L249.2 586.3L248.7 585.2L248.3 584.0L247.9 582.7L247.4 581.2L246.9 579.7L246.5 578.0L246.0 576.3L245.4 574.5L244.8 572.8L244.2 571.0L243.7 569.2L243.2 567.5L242.7 565.7L242.3 563.9L241.9 561.8L241.5 559.8L241.1 557.7L240.7 555.7L240.3 553.8L239.9 552.0L239.5 550.3L239.0 548.9L238.4 547.6L237.6 546.5L236.6 545.6L235.5 545.0L234.4 544.7L233.5 544.6L232.9 544.6L232.5 544.6L232.7 544.6L232.9 544.6ZM239.0 551.1L239.3 550.4L239.6 549.4L240.1 548.3L240.5 547.0L241.1 545.7L241.6 544.3L241.7 542.9L241.6 541.6L241.4 540.4L240.6 539.3L240.0 539.1L238.7 539.4L237.7 540.1L236.8 541.1L236.0 542.2L235.4 543.5L234.9 544.9L234.5 546.1L234.0 547.3L233.7 548.2L233.4 548.9ZM160.7 600.5L161.2 600.9L161.8 601.5L162.4 602.2L163.2 603.0L164.1 603.8L165.1 604.8L166.1 605.7L167.2 606.6L168.4 607.5L169.6 608.3L170.7 609.0L171.9 609.7L173.2 610.4L174.4 611.1L175.8 611.7L177.1 612.3L178.5 612.9L179.9 613.5L181.3 614.0L182.8 614.6L184.3 615.0L185.9 615.4L187.5 615.7L189.1 616.0L190.6 616.2L192.1 616.5L193.6 616.7L195.0 617.0L196.4 617.4L197.7 617.8L199.0 618.3L200.3 619.0L201.8 619.7L203.2 620.5L204.6 621.3L206.0 622.1L207.4 623.0L208.8 623.7L210.2 624.5L211.4 625.2L212.6 625.8L213.8 626.3L215.0 626.9L216.0 627.4L217.1 627.8L218.0 628.2L218.9 628.6L219.6 628.9L220.3 629.2L220.8 629.4L223.2 624.0L222.7 623.7L222.0 623.4L221.3 623.1L220.4 622.7L219.5 622.3L218.5 621.9L217.5 621.4L216.4 620.9L215.3 620.4L214.2 619.8L213.0 619.2L211.8 618.5L210.5 617.8L209.1 616.9L207.6 616.1L206.1 615.2L204.5 614.4L203.0 613.6L201.4 612.8L199.7 612.2L198.1 611.6L196.4 611.2L194.8 610.8L193.2 610.5L191.6 610.3L190.0 610.0L188.6 609.8L187.2 609.5L185.9 609.2L184.6 608.8L183.4 608.4L182.1 607.9L180.8 607.4L179.5 606.9L178.3 606.3L177.1 605.7L176.0 605.1L174.9 604.5L173.8 603.9L172.8 603.3L171.9 602.7L171.0 601.9L170.1 601.2L169.2 600.4L168.3 599.5L167.5 598.7L166.7 597.9L166.0 597.2L165.4 596.6L164.9 596.1ZM188.7 628.6L190.4 629.5L192.6 629.9L195.3 630.0L198.2 630.0L201.2 629.6L204.1 629.2L207.0 628.8L209.5 628.5L211.7 628.2L213.2 628.0L212.4 622.0L210.9 622.2L208.7 622.5L206.2 622.9L203.3 623.3L200.3 623.7L197.4 624.1L194.6 624.9L192.1 625.7L190.0 626.6L188.7 628.0ZM199.5 597.0L200.1 597.8L201.1 598.3L202.3 598.8L203.6 599.2L205.1 599.7L206.6 600.2L208.2 600.6L209.8 600.9L211.4 601.1L212.9 601.3L214.4 601.2L215.9 600.9L217.3 600.6L218.6 600.3L219.9 599.9L221.1 599.6L222.3 599.3L223.4 599.0L224.4 598.9L225.4 598.7L226.5 598.6L227.8 598.5L229.1 598.5L230.6 598.5L232.0 598.5L233.4 598.5L234.7 598.5L235.9 598.4L236.9 598.3L237.8 597.8L237.8 597.2L237.2 596.5L236.3 596.0L235.3 595.5L234.0 595.0L232.7 594.5L231.2 594.0L229.7 593.6L228.2 593.3L226.7 593.0L225.2 592.9L223.7 592.9L222.3 593.1L220.9 593.5L219.6 593.8L218.3 594.2L217.1 594.5L215.9 594.8L214.8 595.0L213.7 595.2L212.7 595.3L211.5 595.5L210.2 595.5L208.7 595.6L207.2 595.6L205.7 595.6L204.2 595.6L202.8 595.6L201.5 595.7L200.4 595.9L199.5 596.4ZM222.5 598.1L222.8 598.8L223.2 599.7L223.6 600.8L224.1 602.1L224.6 603.4L225.1 604.7L226.0 605.8L226.9 606.7L227.9 607.4L229.2 607.6L229.8 607.4L230.6 606.3L230.8 605.1L230.8 603.8L230.7 602.4L230.2 601.1L229.7 599.8L229.2 598.6L228.7 597.5L228.4 596.6L228.1 595.9ZM129.4 650.3L130.1 651.1L131.0 651.7L132.2 652.4L133.6 653.1L135.1 653.9L136.6 654.7L138.2 655.5L139.8 656.3L141.3 657.1L142.8 657.8L144.1 658.6L145.5 659.4L146.9 660.3L148.3 661.2L149.7 662.1L151.2 663.0L152.8 663.9L154.4 664.8L156.0 665.5L157.8 666.2L159.5 666.7L161.2 667.1L163.0 667.5L164.7 667.8L166.5 668.1L168.2 668.3L170.0 668.5L171.7 668.6L173.5 668.7L175.2 668.8L177.0 668.8L178.7 668.8L180.4 668.7L182.2 668.6L183.9 668.4L185.6 668.2L187.3 668.0L189.0 667.7L190.7 667.4L192.5 667.2L194.4 666.8L196.5 666.4L198.6 665.9L200.8 665.4L202.9 664.9L204.9 664.4L206.8 663.9L208.5 663.5L209.9 663.2L211.0 662.9L209.6 657.1L208.5 657.3L207.1 657.7L205.4 658.1L203.5 658.6L201.5 659.1L199.4 659.6L197.3 660.1L195.2 660.5L193.3 660.9L191.5 661.2L189.8 661.5L188.1 661.8L186.5 662.0L184.8 662.2L183.2 662.4L181.6 662.6L180.1 662.7L178.5 662.8L176.9 662.8L175.4 662.8L173.8 662.7L172.2 662.6L170.5 662.5L168.9 662.4L167.3 662.1L165.7 661.9L164.2 661.6L162.6 661.3L161.1 660.9L159.6 660.4L158.2 659.9L156.8 659.4L155.3 658.8L153.9 658.1L152.4 657.4L150.9 656.6L149.3 655.9L147.8 655.1L146.2 654.4L144.6 653.8L143.0 653.2L141.4 652.6L139.7 652.0L137.9 651.5L136.2 651.0L134.6 650.5L133.1 650.1L131.8 649.8L130.6 649.6L129.6 649.7ZM133.4 639.3L132.9 640.9L133.1 642.7L133.5 644.7L134.1 646.8L135.2 648.8L136.2 650.9L137.2 652.9L138.1 654.6L138.8 656.1L139.3 657.1L144.7 654.5L144.2 653.4L143.4 651.9L142.5 650.2L141.6 648.2L140.5 646.2L139.5 644.1L138.2 642.3L136.8 640.8L135.5 639.6L134.0 639.1ZM167.2 666.4L166.9 666.7L166.5 667.3L165.9 667.9L165.3 668.6L164.7 669.3L164.1 670.0L163.8 671.0L163.7 672.0L163.7 672.9L164.3 674.0L164.7 674.4L165.9 674.8L166.8 674.6L167.8 674.4L168.7 673.9L169.3 673.2L169.9 672.5L170.5 671.8L171.0 671.1L171.5 670.6L171.8 670.2ZM300.3 404.0L302.5 403.8L305.4 403.5L308.9 403.1L312.8 402.6L316.9 402.2L321.1 401.8L325.2 401.4L329.0 401.2L332.4 401.0L335.2 401.0L337.4 401.1L339.2 401.4L340.6 401.7L341.9 402.1L343.2 402.6L344.4 403.2L345.8 403.8L347.5 404.4L349.3 405.0L351.4 405.4L353.7 405.8L355.9 406.2L358.2 406.4L360.6 406.7L363.0 407.0L365.5 407.2L368.1 407.6L370.8 407.9L373.5 408.4L376.4 408.9L379.5 409.6L382.8 410.4L386.4 411.2L390.0 412.1L393.8 413.0L397.5 414.0L401.1 415.0L404.7 416.0L408.0 416.9L411.1 417.9L414.0 418.8L416.9 419.8L419.7 420.8L422.4 421.9L425.0 422.9L427.5 424.0L429.9 424.9L432.1 425.8L434.1 426.6L436.0 427.3L437.6 427.9L439.1 428.4L440.3 428.7L441.4 429.0L442.4 429.3L443.2 429.4L443.8 429.6L444.4 429.7L444.8 429.8L445.3 429.9L446.7 424.1L446.2 424.0L445.7 423.8L445.1 423.7L444.5 423.6L443.8 423.4L442.9 423.2L442.0 423.0L440.9 422.6L439.5 422.2L438.0 421.7L436.3 421.0L434.3 420.3L432.1 419.4L429.8 418.4L427.2 417.4L424.6 416.3L421.8 415.2L418.9 414.2L415.9 413.1L412.9 412.1L409.7 411.2L406.3 410.2L402.7 409.2L399.0 408.2L395.2 407.2L391.5 406.3L387.8 405.4L384.2 404.5L380.8 403.7L377.6 403.1L374.6 402.5L371.7 402.0L368.9 401.6L366.2 401.3L363.7 401.0L361.2 400.7L358.9 400.5L356.7 400.2L354.6 399.9L352.6 399.6L350.9 399.2L349.4 398.7L348.1 398.2L346.8 397.7L345.4 397.1L343.9 396.5L342.2 395.9L340.2 395.5L338.0 395.2L335.4 395.0L332.3 395.0L328.7 395.2L324.7 395.5L320.5 395.8L316.3 396.2L312.1 396.7L308.3 397.1L304.8 397.5L301.9 397.8L299.7 398.0ZM336.5 398.8L337.0 398.5L337.7 398.2L338.6 397.9L339.6 397.5L340.7 397.0L341.7 396.6L342.7 396.2L343.6 395.8L344.3 395.5L344.9 395.3L342.5 389.7L342.0 390.0L341.3 390.3L340.4 390.6L339.4 391.0L338.3 391.5L337.3 391.9L336.3 392.3L335.4 392.7L334.7 393.0L334.1 393.2ZM350.7 403.8L350.9 404.8L351.2 406.1L351.6 407.6L352.0 409.0L352.4 410.6L352.6 412.1L352.7 413.5L352.6 414.8L352.4 415.8L352.0 416.6L351.3 417.5L350.1 418.5L348.4 419.5L346.5 420.6L344.3 421.8L342.1 423.0L339.7 424.2L337.5 425.5L335.3 427.0L333.3 428.6L331.6 430.2L330.0 431.8L328.5 433.6L327.1 435.3L325.7 437.1L324.4 438.9L323.2 440.7L322.1 442.6L321.0 444.4L320.1 446.2L319.3 448.0L318.5 449.8L317.9 451.6L317.4 453.4L316.9 455.2L316.5 457.0L316.2 458.8L316.0 460.6L315.8 462.3L315.7 464.1L315.7 465.9L315.8 467.8L316.0 469.7L316.2 471.5L316.5 473.3L316.9 475.0L317.2 476.6L317.5 478.1L317.8 479.4L318.1 480.6L318.3 481.7L318.5 482.7L318.7 483.6L319.0 484.5L319.2 485.2L319.4 485.9L319.6 486.4L319.7 486.9L319.8 487.2L319.9 487.5L325.7 485.9L325.6 485.5L325.4 485.0L325.3 484.5L325.1 484.0L324.9 483.5L324.7 482.8L324.5 482.1L324.3 481.3L324.1 480.5L323.9 479.4L323.7 478.2L323.4 476.8L323.1 475.3L322.7 473.8L322.4 472.2L322.1 470.6L321.9 468.9L321.7 467.3L321.7 465.8L321.7 464.3L321.8 462.8L322.0 461.3L322.2 459.7L322.4 458.1L322.7 456.6L323.1 455.0L323.6 453.5L324.1 451.9L324.8 450.4L325.5 448.8L326.3 447.2L327.2 445.6L328.3 444.0L329.3 442.3L330.5 440.7L331.8 439.0L333.1 437.4L334.4 435.9L335.9 434.4L337.3 433.0L338.8 431.8L340.6 430.6L342.7 429.4L344.9 428.3L347.1 427.1L349.4 425.9L351.6 424.7L353.6 423.3L355.5 421.8L357.0 420.0L358.0 417.8L358.6 415.6L358.7 413.5L358.6 411.4L358.2 409.5L357.8 407.6L357.4 406.0L357.0 404.6L356.8 403.6L356.7 402.8ZM354.0 421.3L354.6 421.4L355.5 421.5L356.6 421.7L357.8 421.9L359.0 422.1L360.2 422.3L361.5 422.1L362.6 421.8L363.6 421.3L364.4 420.3L364.6 419.7L364.1 418.5L363.3 417.7L362.4 417.0L361.2 416.4L360.0 416.2L358.8 416.0L357.6 415.8L356.5 415.6L355.6 415.5L355.0 415.3ZM337.1 490.5L336.4 489.9L335.3 489.3L334.1 488.7L332.7 488.0L331.1 487.4L329.5 486.7L327.8 486.1L326.2 485.6L324.6 485.1L323.1 484.8L321.8 484.5L320.5 484.3L319.2 484.0L317.8 483.8L316.4 483.7L315.0 483.7L313.5 483.8L312.0 484.1L310.5 484.6L309.0 485.4L307.5 486.4L306.0 487.6L304.6 488.9L303.2 490.4L301.9 492.0L300.6 493.6L299.4 495.3L298.2 496.9L297.2 498.5L296.2 500.1L295.2 501.5L294.3 503.0L293.3 504.5L292.4 506.0L291.5 507.5L290.7 509.1L290.0 510.8L289.3 512.5L288.7 514.3L288.3 516.1L288.0 518.1L287.8 520.1L287.8 522.1L287.9 524.0L288.0 526.0L288.2 528.0L288.5 529.9L288.8 531.7L289.0 533.5L289.2 535.2L289.5 537.0L289.7 538.8L290.0 540.5L290.3 542.2L290.6 543.8L290.9 545.4L291.2 547.0L291.4 548.5L291.6 550.1L291.7 551.6L291.7 553.3L291.6 555.1L291.5 557.0L291.3 558.9L291.1 560.8L290.9 562.6L290.8 564.3L290.7 565.9L290.7 567.2L290.9 568.2L291.5 568.4L292.1 567.4L292.5 566.2L293.0 564.8L293.5 563.1L294.0 561.3L294.5 559.4L294.9 557.5L295.3 555.5L295.6 553.6L295.7 551.8L295.8 550.0L295.8 548.2L295.7 546.5L295.6 544.8L295.5 543.1L295.3 541.4L295.1 539.8L295.0 538.1L294.8 536.5L294.8 534.8L294.7 532.9L294.5 531.1L294.4 529.2L294.2 527.3L294.0 525.5L293.9 523.7L293.8 521.9L293.8 520.3L293.9 518.7L294.1 517.3L294.5 515.9L294.9 514.5L295.5 513.1L296.1 511.7L296.8 510.4L297.6 509.0L298.4 507.6L299.3 506.2L300.3 504.8L301.2 503.3L302.2 501.8L303.2 500.3L304.3 498.7L305.4 497.0L306.5 495.5L307.6 494.0L308.6 492.6L309.7 491.4L310.7 490.4L311.6 489.6L312.5 489.1L313.4 488.7L314.3 488.5L315.3 488.3L316.3 488.2L317.5 488.2L318.6 488.3L319.9 488.4L321.2 488.5L322.5 488.6L323.9 488.8L325.3 489.0L326.9 489.3L328.6 489.7L330.3 490.0L331.9 490.4L333.4 490.7L334.7 491.0L335.9 491.2L336.9 491.1ZM280.1 505.2L279.7 506.6L280.1 508.1L280.6 509.6L281.4 511.3L282.5 512.7L283.7 514.2L284.8 515.5L285.7 516.8L286.6 517.8L287.1 518.6L291.9 514.8L291.3 514.1L290.5 513.1L289.5 511.8L288.4 510.4L287.3 509.0L286.1 507.5L284.7 506.4L283.3 505.5L282.0 504.8L280.5 504.8ZM293.3 558.1L293.7 558.4L294.3 558.9L295.0 559.6L295.8 560.3L296.7 561.0L297.5 561.7L298.5 562.1L299.6 562.4L300.6 562.4L301.8 561.9L302.2 561.5L302.5 560.2L302.4 559.2L302.0 558.2L301.5 557.2L300.6 556.5L299.8 555.8L299.0 555.1L298.3 554.4L297.7 553.9L297.3 553.5ZM297.0 422.8L298.3 423.8L300.0 424.2L301.9 424.4L304.0 424.5L306.2 424.2L308.3 423.9L310.4 423.2L312.1 422.4L313.6 421.6L314.5 420.3L314.5 419.7L313.2 418.7L311.5 418.3L309.6 418.1L307.5 418.0L305.3 418.3L303.2 418.6L301.1 419.3L299.4 420.1L297.9 420.9L297.0 422.2ZM273.7 483.7L274.4 483.5L275.3 483.2L276.5 482.8L277.8 482.4L279.1 482.0L280.5 481.6L281.6 480.9L282.6 480.0L283.4 479.1L283.8 477.8L283.6 477.2L282.6 476.3L281.4 476.0L280.1 475.8L278.7 475.9L277.4 476.3L276.0 476.7L274.7 477.1L273.6 477.4L272.6 477.7L271.9 477.9ZM348.4 441.9L348.5 442.7L348.9 443.7L349.3 444.7L349.9 445.8L350.5 447.1L351.2 448.4L351.9 449.8L352.8 451.3L353.6 452.8L354.5 454.4L355.5 456.2L356.7 458.1L358.0 460.1L359.3 462.2L360.6 464.4L361.9 466.5L363.2 468.5L364.3 470.5L365.2 472.2L366.0 473.7L366.5 475.0L366.9 476.3L367.1 477.4L367.3 478.5L367.4 479.6L367.4 480.6L367.4 481.7L367.4 482.8L367.3 483.9L367.3 485.0L367.3 485.9L367.3 486.7L367.2 487.4L367.1 488.1L367.0 488.7L366.9 489.3L366.7 489.9L366.5 490.6L366.2 491.3L365.9 492.2L365.5 493.2L365.1 494.1L364.7 495.2L364.2 496.2L363.7 497.3L363.2 498.4L362.7 499.5L362.1 500.5L361.4 501.6L360.7 502.6L360.0 503.6L359.1 504.6L358.2 505.7L357.1 506.8L356.1 507.8L355.0 508.9L353.9 510.0L352.8 511.0L351.8 511.9L350.9 512.8L350.0 513.6L349.1 514.4L348.2 515.2L347.3 516.0L346.5 516.7L345.7 517.4L345.0 518.0L344.3 518.6L343.8 519.1L343.5 519.8L343.9 520.2L344.5 520.2L345.2 520.0L346.0 519.6L346.9 519.2L347.9 518.8L348.9 518.2L349.9 517.6L351.0 517.0L352.1 516.3L353.1 515.6L354.2 514.8L355.3 514.0L356.5 513.1L357.8 512.2L359.0 511.2L360.3 510.2L361.5 509.1L362.7 508.1L363.8 507.0L364.9 505.8L365.8 504.7L366.7 503.5L367.5 502.4L368.2 501.2L368.9 500.0L369.6 498.8L370.1 497.6L370.6 496.5L371.1 495.4L371.5 494.4L371.9 493.4L372.2 492.5L372.5 491.6L372.7 490.7L372.9 489.8L373.1 488.9L373.2 488.0L373.2 487.1L373.3 486.1L373.3 485.0L373.3 484.0L373.4 483.0L373.4 481.8L373.4 480.6L373.4 479.3L373.3 477.8L373.0 476.3L372.7 474.7L372.1 473.0L371.4 471.3L370.5 469.4L369.4 467.4L368.0 465.4L366.5 463.4L365.0 461.3L363.4 459.3L361.9 457.3L360.4 455.5L359.1 453.7L357.9 452.2L356.8 450.7L355.8 449.3L354.7 448.0L353.8 446.7L352.8 445.5L352.0 444.5L351.2 443.5L350.4 442.7L349.7 442.0L349.0 441.5ZM347.3 516.3L347.4 517.4L347.5 518.9L347.7 520.6L347.8 522.6L348.0 524.7L348.2 526.9L348.4 529.1L348.6 531.3L348.8 533.4L349.0 535.3L349.2 537.2L349.5 539.1L349.7 541.1L350.0 543.0L350.3 544.9L350.6 546.7L350.8 548.4L351.1 549.9L351.3 551.2L351.6 552.4L351.9 553.4L352.2 554.3L352.8 555.2L353.9 556.2L355.5 556.5L356.8 556.3L357.4 556.0L357.4 556.0L356.4 556.3L355.4 556.2L357.0 550.4L355.8 550.3L354.6 550.7L354.3 550.8L354.6 550.7L355.5 550.5L356.7 550.9L357.4 551.4L357.6 551.7L357.6 551.6L357.4 551.0L357.2 550.1L357.0 548.8L356.7 547.4L356.5 545.8L356.2 544.0L356.0 542.2L355.7 540.3L355.4 538.3L355.2 536.5L355.0 534.7L354.8 532.8L354.6 530.8L354.4 528.6L354.2 526.4L354.0 524.2L353.8 522.1L353.7 520.1L353.5 518.4L353.4 516.9L353.3 515.7ZM357.7 454.6L359.0 453.9L360.6 452.9L362.4 451.8L364.5 450.6L366.8 449.2L369.2 447.8L371.6 446.4L374.0 445.1L376.3 443.8L378.4 442.7L380.5 441.6L382.6 440.5L384.8 439.4L386.9 438.4L389.1 437.3L391.2 436.3L393.3 435.4L395.3 434.4L397.2 433.6L399.1 432.7L400.8 431.9L402.4 431.0L403.7 430.2L404.9 429.5L406.1 428.9L407.1 428.3L408.1 427.9L409.3 427.6L410.6 427.3L412.1 427.2L414.0 427.2L416.2 427.3L418.5 427.5L421.0 427.8L423.6 428.2L426.2 428.7L428.8 429.3L431.4 429.9L433.8 430.5L436.1 431.2L438.3 431.9L440.5 432.7L442.6 433.5L444.7 434.4L446.8 435.4L448.8 436.4L450.7 437.5L452.6 438.6L454.4 439.7L456.1 440.8L457.7 441.9L459.1 443.1L460.6 444.5L462.0 445.9L463.3 447.3L464.7 448.8L466.0 450.2L467.4 451.6L468.7 452.9L470.2 454.1L471.5 455.0L472.7 455.8L473.9 456.5L475.0 457.0L476.0 457.5L477.0 457.9L478.0 458.4L479.0 458.8L480.1 459.4L481.3 460.1L482.8 461.0L484.4 461.9L486.0 462.8L487.8 463.8L489.5 464.8L491.2 465.9L492.9 467.0L494.5 468.1L496.1 469.3L497.4 470.5L498.8 471.8L500.2 473.4L501.6 475.2L503.0 477.1L504.3 479.0L505.6 480.9L506.8 482.7L507.9 484.3L508.8 485.7L509.6 486.7L514.4 483.3L513.7 482.3L512.9 481.0L511.8 479.4L510.6 477.6L509.3 475.6L507.8 473.6L506.3 471.6L504.8 469.6L503.2 467.8L501.6 466.1L499.9 464.6L498.1 463.3L496.3 462.0L494.4 460.8L492.6 459.6L490.8 458.6L489.0 457.6L487.3 456.6L485.7 455.8L484.3 454.9L482.9 454.1L481.6 453.5L480.5 452.9L479.4 452.4L478.5 452.0L477.6 451.6L476.7 451.2L475.8 450.7L474.9 450.1L473.8 449.3L472.7 448.4L471.6 447.3L470.4 446.1L469.1 444.7L467.7 443.2L466.3 441.7L464.7 440.2L463.1 438.6L461.3 437.2L459.5 435.8L457.6 434.6L455.7 433.4L453.6 432.2L451.5 431.1L449.4 430.0L447.2 429.0L444.9 428.0L442.6 427.1L440.3 426.2L437.9 425.4L435.4 424.7L432.8 424.0L430.1 423.4L427.4 422.8L424.6 422.3L421.8 421.9L419.2 421.5L416.6 421.3L414.1 421.2L411.9 421.2L409.8 421.4L407.9 421.7L406.2 422.2L404.6 422.9L403.2 423.6L401.9 424.3L400.7 425.1L399.4 425.8L398.1 426.5L396.5 427.3L394.7 428.1L392.8 429.0L390.8 429.9L388.7 430.9L386.5 431.9L384.3 433.0L382.1 434.0L379.9 435.1L377.7 436.2L375.6 437.3L373.4 438.5L371.0 439.8L368.6 441.2L366.2 442.6L363.8 444.0L361.5 445.4L359.4 446.6L357.5 447.8L355.9 448.7L354.7 449.4ZM400.1 428.0L399.3 427.1L398.2 425.9L396.8 424.4L395.4 422.7L393.8 420.9L392.3 419.2L390.5 417.7L388.8 416.6L387.2 415.7L385.5 415.6L385.1 416.0L385.0 417.7L385.6 419.3L386.6 421.2L387.7 423.1L389.3 424.9L390.8 426.6L392.3 428.3L393.6 429.8L394.7 431.1L395.5 432.0ZM372.3 474.7L373.2 473.9L374.4 472.8L375.7 471.6L377.2 470.1L378.8 468.7L380.4 467.2L382.1 465.8L383.7 464.5L385.3 463.5L386.7 462.7L388.0 462.1L389.5 461.5L391.1 461.1L392.8 460.7L394.4 460.4L396.1 460.2L397.7 460.0L399.3 459.9L400.8 459.8L402.1 459.7L403.1 459.7L403.8 459.7L404.3 459.8L404.8 460.0L405.5 460.2L406.3 460.5L407.4 460.8L408.7 461.1L410.2 461.2L412.0 461.3L414.0 461.3L416.3 461.2L418.7 461.0L421.4 460.8L424.1 460.6L426.8 460.4L429.6 460.2L432.2 460.0L434.8 459.8L437.1 459.7L439.4 459.6L441.6 459.6L443.8 459.6L445.9 459.5L448.1 459.5L450.1 459.6L452.1 459.6L454.1 459.6L455.9 459.7L457.7 459.7L459.4 459.7L461.0 459.8L462.5 459.9L463.9 460.0L465.3 460.0L466.7 460.1L468.0 460.2L469.3 460.3L470.5 460.4L471.8 460.5L473.1 460.6L474.3 460.7L475.6 460.8L476.9 460.8L478.1 460.9L479.2 461.0L480.2 461.1L481.2 461.2L481.9 461.2L482.6 461.3L483.0 455.3L482.4 455.3L481.6 455.2L480.7 455.1L479.7 455.0L478.5 455.0L477.3 454.9L476.0 454.8L474.8 454.7L473.5 454.6L472.2 454.5L471.0 454.4L469.7 454.3L468.4 454.2L467.1 454.1L465.7 454.1L464.3 454.0L462.8 453.9L461.2 453.8L459.6 453.7L457.9 453.7L456.1 453.7L454.2 453.6L452.2 453.6L450.2 453.6L448.1 453.6L445.9 453.5L443.7 453.6L441.5 453.6L439.2 453.6L436.9 453.7L434.4 453.8L431.8 454.0L429.1 454.2L426.3 454.4L423.6 454.6L420.9 454.8L418.3 455.0L415.9 455.2L413.8 455.3L412.0 455.3L410.6 455.3L409.6 455.1L408.8 455.0L408.1 454.8L407.5 454.6L406.7 454.3L405.7 454.0L404.6 453.8L403.3 453.7L401.9 453.7L400.4 453.8L398.8 453.9L397.1 454.1L395.4 454.2L393.5 454.5L391.6 454.8L389.7 455.3L387.7 455.8L385.8 456.5L383.9 457.3L382.1 458.4L380.2 459.7L378.3 461.1L376.5 462.7L374.7 464.2L373.1 465.8L371.6 467.2L370.2 468.5L369.2 469.5L368.3 470.3ZM399.0 435.8L399.6 436.1L400.4 436.3L401.3 436.7L402.3 437.0L403.4 437.4L404.6 437.9L406.0 438.4L407.5 439.0L409.1 439.6L410.9 440.3L413.0 441.1L415.4 442.0L418.1 443.0L421.0 444.1L423.9 445.2L426.7 446.3L429.4 447.4L431.9 448.4L434.0 449.4L435.6 450.2L436.7 450.8L437.5 451.4L438.0 451.8L438.2 452.2L438.4 452.4L438.5 452.7L438.6 453.1L438.8 453.6L439.1 454.3L439.5 454.9L444.5 451.7L444.5 451.6L444.5 451.6L444.3 451.2L444.1 450.5L443.7 449.6L443.1 448.6L442.3 447.7L441.2 446.7L440.0 445.8L438.4 444.8L436.5 443.9L434.3 442.9L431.7 441.9L428.9 440.7L426.0 439.6L423.1 438.5L420.2 437.4L417.5 436.4L415.1 435.5L413.1 434.7L411.3 434.0L409.6 433.4L408.1 432.8L406.7 432.3L405.5 431.8L404.3 431.4L403.3 431.0L402.5 430.7L401.7 430.4L401.0 430.2ZM421.7 461.0L421.9 461.7L422.3 462.7L422.6 463.8L423.1 465.1L423.6 466.4L424.0 467.9L424.5 469.3L425.0 470.7L425.4 472.1L425.8 473.4L426.2 474.6L426.5 475.8L426.8 477.0L427.1 478.3L427.4 479.5L427.7 480.8L428.1 482.1L428.4 483.3L428.8 484.6L429.2 485.9L429.8 487.1L430.4 488.4L431.1 489.7L431.7 491.1L432.4 492.3L433.1 493.5L433.8 494.6L434.4 495.6L435.1 496.3L435.9 496.8L436.5 496.6L436.8 495.7L436.8 494.7L436.7 493.5L436.4 492.3L436.2 490.9L435.9 489.5L435.6 488.1L435.3 486.7L435.0 485.4L434.8 484.1L434.5 483.0L434.2 481.8L433.9 480.6L433.6 479.3L433.3 478.1L433.0 476.8L432.6 475.5L432.3 474.2L432.0 472.9L431.6 471.6L431.2 470.3L430.7 468.9L430.2 467.4L429.7 465.9L429.2 464.5L428.8 463.1L428.3 461.8L427.9 460.7L427.6 459.8L427.3 459.0ZM469.0 451.4L468.9 452.5L468.8 453.9L468.6 455.6L468.4 457.6L468.2 459.6L468.0 461.8L467.8 463.9L467.6 466.0L467.4 468.0L467.3 469.9L467.2 471.6L467.3 473.4L467.3 475.1L467.4 476.7L467.5 478.3L467.5 479.7L467.5 481.1L467.5 482.4L467.5 483.5L467.3 484.5L467.2 485.4L466.9 486.1L466.7 486.8L466.5 487.4L466.2 487.9L465.8 488.5L465.4 489.2L464.9 489.9L464.3 490.7L463.7 491.6L463.0 492.6L462.2 493.7L461.3 494.9L460.4 496.2L459.4 497.4L458.4 498.6L457.5 499.8L456.7 500.8L456.0 501.7L455.4 502.3L460.2 506.1L460.7 505.4L461.3 504.6L462.2 503.5L463.1 502.4L464.1 501.1L465.1 499.8L466.1 498.5L467.1 497.3L468.0 496.1L468.7 495.0L469.3 494.1L469.8 493.3L470.4 492.5L470.9 491.7L471.4 490.9L471.9 490.0L472.3 489.0L472.7 487.9L473.0 486.8L473.3 485.5L473.4 484.1L473.5 482.6L473.5 481.1L473.5 479.5L473.4 478.0L473.4 476.4L473.3 474.8L473.3 473.3L473.2 471.7L473.3 470.1L473.4 468.4L473.5 466.5L473.7 464.4L473.9 462.3L474.1 460.2L474.3 458.2L474.5 456.3L474.7 454.6L474.9 453.1L475.0 452.0ZM463.3 492.6L463.1 493.5L462.8 494.8L462.4 496.3L462.0 497.9L461.6 499.7L461.2 501.5L460.8 503.1L460.4 504.6L460.1 505.9L459.9 506.8L465.7 508.2L465.9 507.3L466.2 506.0L466.6 504.5L467.0 502.9L467.4 501.1L467.8 499.3L468.2 497.7L468.6 496.2L468.9 494.9L469.1 494.0ZM488.4 486.7L487.7 487.9L487.4 489.5L487.2 491.3L487.0 493.4L486.8 495.5L486.6 497.8L486.4 499.9L486.2 502.0L486.0 503.8L485.7 505.3L485.5 506.6L485.1 507.8L484.7 509.0L484.2 510.1L483.7 511.2L483.1 512.3L482.4 513.4L481.8 514.4L481.1 515.6L480.5 516.7L479.9 517.9L479.1 519.0L478.3 520.3L477.4 521.5L476.5 522.7L475.6 523.9L474.8 525.1L474.1 526.1L473.6 527.1L473.5 528.1L473.9 528.5L474.9 528.3L475.8 527.8L476.9 527.2L478.1 526.3L479.3 525.4L480.5 524.4L481.7 523.3L482.9 522.2L484.1 521.0L485.1 519.9L485.9 518.8L486.8 517.7L487.5 516.5L488.3 515.3L489.0 514.0L489.6 512.6L490.3 511.2L490.8 509.7L491.3 508.1L491.7 506.3L491.9 504.4L492.0 502.2L491.9 500.0L491.6 497.7L491.3 495.4L491.0 493.2L490.6 491.2L490.2 489.3L489.7 487.8L489.0 486.7ZM506.1 487.5L506.9 488.0L508.0 488.8L509.4 489.6L510.8 490.6L512.4 491.6L513.9 492.7L515.4 493.7L516.7 494.5L517.8 495.3L518.6 495.8L522.0 490.8L521.2 490.3L520.1 489.5L518.7 488.7L517.3 487.7L515.7 486.7L514.2 485.6L512.7 484.6L511.4 483.8L510.3 483.0L509.5 482.5ZM355.0 554.8L355.6 555.0L356.3 555.4L357.3 555.9L358.4 556.4L359.6 557.0L361.1 557.7L362.6 558.3L364.4 558.8L366.2 559.3L368.2 559.7L370.4 559.9L372.9 560.2L375.6 560.4L378.5 560.5L381.4 560.7L384.3 560.7L387.0 560.8L389.6 560.7L392.0 560.6L393.9 560.5L395.4 560.4L396.6 560.3L397.7 560.3L398.8 560.2L400.0 560.0L401.4 559.4L402.5 558.4L403.4 557.2L404.1 555.9L404.8 554.4L405.5 552.4L406.1 550.1L406.7 547.5L407.3 544.7L407.7 541.8L408.2 538.7L408.5 535.6L408.8 532.5L409.1 529.6L409.2 526.8L409.2 524.1L409.1 521.3L409.0 518.6L408.7 515.9L408.3 513.2L407.9 510.6L407.4 508.1L407.0 505.7L406.6 503.5L406.2 501.3L405.8 499.3L405.4 497.3L404.9 495.5L404.5 493.8L404.1 492.1L403.6 490.6L403.2 489.0L402.8 487.6L402.4 486.1L402.0 484.7L401.6 483.2L401.3 481.7L400.9 480.2L400.5 478.7L400.2 477.2L399.8 475.9L399.4 474.7L399.1 473.6L398.8 472.6L398.3 471.9L397.7 472.1L397.5 472.9L397.5 473.8L397.5 475.0L397.6 476.3L397.7 477.7L397.9 479.1L398.0 480.7L398.2 482.2L398.4 483.8L398.6 485.3L398.8 486.9L399.1 488.4L399.3 489.9L399.6 491.5L399.9 493.1L400.2 494.7L400.5 496.4L400.8 498.2L401.0 500.1L401.2 502.1L401.5 504.2L401.7 506.5L402.0 508.9L402.3 511.4L402.6 513.9L402.8 516.5L403.0 519.1L403.1 521.6L403.2 524.1L403.2 526.6L403.1 529.2L402.9 532.0L402.6 534.9L402.2 537.9L401.8 540.8L401.3 543.7L400.8 546.3L400.3 548.7L399.8 550.7L399.2 552.2L398.7 553.4L398.3 554.1L398.1 554.3L398.2 554.3L398.3 554.2L398.0 554.3L397.4 554.3L396.4 554.3L395.1 554.4L393.5 554.5L391.7 554.6L389.5 554.7L387.0 554.8L384.4 554.7L381.6 554.7L378.7 554.5L376.0 554.4L373.4 554.2L371.1 554.0L369.2 553.7L367.5 553.4L366.0 553.1L364.6 552.6L363.3 552.1L362.1 551.6L361.0 551.0L360.0 550.5L359.1 550.0L358.2 549.6L357.4 549.2ZM364.3 517.0L364.7 518.0L365.6 519.0L366.6 520.0L367.9 521.0L369.1 522.1L370.5 523.3L371.8 524.4L373.0 525.4L374.0 526.4L374.9 527.1L375.6 527.9L376.2 528.7L376.7 529.6L377.3 530.7L377.8 531.8L378.4 533.0L379.1 534.2L379.9 535.3L381.0 536.4L382.2 537.3L383.7 537.8L385.1 538.1L386.5 538.2L387.9 538.1L389.2 537.9L390.4 537.7L391.4 537.4L392.4 537.0L393.1 536.7L393.7 536.1L393.7 535.5L393.1 534.9L392.2 534.7L391.2 534.5L390.2 534.3L389.1 534.1L388.0 533.9L387.0 533.7L386.2 533.4L385.5 533.1L385.2 532.7L384.9 532.4L384.6 531.8L384.2 531.1L383.7 530.2L383.2 529.1L382.6 528.0L381.9 526.7L381.2 525.4L380.2 524.1L379.1 522.9L377.8 521.7L376.4 520.8L374.8 519.9L373.2 519.1L371.5 518.3L369.9 517.6L368.4 517.1L367.0 516.6L365.8 516.3L364.7 516.4ZM380.7 534.6L380.7 535.0L380.6 535.6L380.5 536.3L380.4 537.1L380.3 538.0L380.2 538.8L380.4 539.6L380.9 540.4L381.4 541.1L382.5 541.7L383.1 541.7L384.3 541.5L385.0 541.0L385.6 540.3L386.1 539.6L386.2 538.7L386.3 537.9L386.4 537.1L386.5 536.4L386.6 535.8L386.7 535.4ZM276.7 555.1L276.2 556.1L276.0 557.3L276.0 558.6L276.1 560.1L276.3 561.8L276.5 563.4L276.8 565.1L277.4 566.6L277.9 568.1L278.4 569.5L279.0 570.8L279.7 572.1L280.4 573.3L281.1 574.6L281.8 575.7L282.5 576.8L283.1 577.8L283.7 578.6L284.1 579.3L284.4 579.9L289.6 576.7L289.2 576.1L288.7 575.4L288.2 574.5L287.6 573.6L286.9 572.6L286.3 571.5L285.6 570.4L285.0 569.3L284.4 568.2L284.0 567.1L283.5 566.0L283.0 564.7L282.5 563.2L281.9 561.7L281.2 560.3L280.5 558.9L279.8 557.6L279.0 556.4L278.3 555.5L277.3 554.9ZM412.0 512.8L413.2 513.2L414.6 513.3L416.2 513.2L418.0 513.2L419.9 513.1L421.8 513.0L423.7 512.9L425.4 513.0L427.0 513.1L428.2 513.4L429.4 513.8L430.6 514.3L431.9 514.9L433.1 515.6L434.3 516.2L435.4 517.0L436.4 517.7L437.4 518.5L438.2 519.3L438.8 520.0L439.1 520.7L439.4 521.4L439.6 522.4L439.8 523.5L439.9 524.7L439.9 526.0L440.0 527.4L440.2 528.9L440.4 530.4L440.9 531.9L441.5 533.2L442.1 534.3L442.8 535.4L443.5 536.3L444.2 537.2L444.9 538.0L445.5 538.8L446.1 539.5L446.5 540.1L446.9 540.7L447.3 541.4L447.7 542.2L448.0 543.0L448.4 543.8L448.7 544.6L449.1 545.4L449.3 546.1L449.6 546.8L449.8 547.4L450.0 547.9L455.6 545.5L455.4 545.1L455.2 544.6L454.9 543.9L454.6 543.2L454.3 542.3L453.9 541.4L453.5 540.5L453.1 539.6L452.6 538.6L452.1 537.7L451.5 536.7L450.8 535.8L450.2 535.0L449.5 534.2L448.9 533.4L448.3 532.7L447.7 531.9L447.3 531.2L446.8 530.5L446.5 529.7L446.3 529.0L446.1 528.1L446.0 527.0L445.9 525.7L445.9 524.3L445.7 522.8L445.5 521.3L445.2 519.7L444.5 518.1L443.6 516.6L442.6 515.3L441.5 514.1L440.2 513.1L438.8 512.0L437.4 511.1L435.9 510.2L434.3 509.5L432.6 508.9L430.9 508.5L429.2 508.2L427.3 508.1L425.3 508.2L423.3 508.4L421.3 508.8L419.3 509.3L417.4 509.8L415.7 510.4L414.1 511.0L412.9 511.5L412.0 512.2ZM425.3 526.1L426.3 527.3L427.7 527.9L429.4 528.4L431.3 528.8L433.2 528.8L435.2 528.8L437.1 528.8L438.8 528.8L440.2 528.8L441.2 528.8L441.2 522.8L440.2 522.8L438.8 522.8L437.1 522.8L435.2 522.8L433.2 522.8L431.3 522.8L429.4 523.2L427.7 523.7L426.3 524.3L425.3 525.5ZM520.1 510.2L520.6 511.0L521.4 511.9L522.4 512.8L523.6 513.8L524.8 514.9L526.0 516.1L527.2 517.3L528.3 518.5L529.2 519.6L529.9 520.8L530.5 522.0L531.1 523.4L531.5 524.8L532.0 526.3L532.3 527.8L532.6 529.3L532.9 530.9L533.1 532.3L533.2 533.8L533.3 535.1L533.3 536.4L533.2 537.6L533.0 538.8L532.8 540.0L532.5 541.2L532.2 542.3L531.8 543.5L531.4 544.6L531.0 545.6L530.6 546.6L530.2 547.3L529.8 548.0L529.3 548.6L528.6 549.2L527.9 549.9L527.2 550.7L526.4 551.6L525.7 552.6L525.0 553.8L524.5 555.1L524.2 556.4L524.0 557.6L523.8 558.9L523.7 560.3L523.7 561.6L523.8 563.0L523.8 564.3L523.9 565.7L524.0 567.1L524.2 568.6L524.3 570.2L524.5 571.9L524.7 573.7L524.9 575.5L525.2 577.4L525.5 579.3L525.9 581.1L526.3 582.8L526.7 584.5L527.2 586.0L527.7 587.3L528.2 588.5L528.8 589.6L529.5 590.5L530.1 591.3L530.7 592.0L531.2 592.6L531.7 593.3L532.2 594.0L532.7 594.9L533.4 596.0L534.1 597.1L534.9 598.3L535.7 599.4L536.4 600.6L537.1 601.8L537.8 602.9L538.3 604.1L538.7 605.3L539.1 606.5L539.4 607.9L539.6 609.3L539.8 610.9L539.9 612.5L540.0 614.1L540.0 615.7L539.9 617.3L539.7 618.8L539.5 620.3L539.1 621.7L538.7 623.0L538.1 624.5L537.5 625.9L536.7 627.3L535.9 628.7L535.0 630.0L534.1 631.2L533.1 632.4L532.0 633.4L531.0 634.3L529.8 635.2L528.5 635.9L527.2 636.6L525.8 637.3L524.2 637.9L522.7 638.4L521.1 638.8L519.4 639.1L517.7 639.3L516.0 639.5L514.3 639.5L512.4 639.4L510.4 639.2L508.3 638.8L506.1 638.4L503.9 638.0L501.7 637.5L499.7 637.0L497.7 636.6L495.9 636.3L494.3 636.0L493.0 635.7L491.9 635.4L490.7 635.1L489.6 634.7L488.5 634.4L487.2 634.2L485.9 634.0L484.5 633.8L482.9 633.7L481.1 633.7L479.2 633.8L477.1 633.9L475.0 634.1L472.9 634.4L470.9 634.6L469.1 634.8L467.4 635.0L466.0 635.2L465.0 635.3L465.6 641.3L466.7 641.2L468.1 641.0L469.8 640.8L471.6 640.6L473.6 640.3L475.6 640.1L477.6 639.9L479.5 639.8L481.2 639.7L482.7 639.7L484.0 639.8L485.1 639.9L486.1 640.1L487.1 640.3L488.1 640.5L489.1 640.8L490.3 641.2L491.6 641.5L493.1 641.8L494.7 642.1L496.5 642.5L498.4 642.9L500.4 643.3L502.6 643.8L504.9 644.3L507.2 644.8L509.6 645.1L511.9 645.4L514.2 645.5L516.4 645.5L518.4 645.3L520.4 645.0L522.4 644.6L524.3 644.1L526.2 643.5L528.0 642.8L529.8 642.0L531.5 641.2L533.1 640.2L534.6 639.1L536.1 637.8L537.5 636.5L538.7 635.0L539.9 633.5L541.0 631.9L542.0 630.2L542.8 628.5L543.6 626.8L544.3 625.1L544.9 623.3L545.3 621.5L545.7 619.7L545.9 617.8L546.0 615.9L546.0 614.0L545.9 612.1L545.8 610.3L545.5 608.5L545.3 606.8L544.9 605.1L544.4 603.4L543.8 601.8L543.1 600.3L542.3 598.8L541.5 597.5L540.7 596.2L539.9 595.0L539.2 593.8L538.5 592.8L537.9 591.7L537.2 590.7L536.5 589.7L535.9 588.9L535.3 588.2L534.8 587.5L534.3 587.0L533.9 586.4L533.6 585.7L533.2 585.0L532.8 584.0L532.5 582.9L532.1 581.4L531.8 579.9L531.4 578.2L531.1 576.4L530.8 574.6L530.5 572.9L530.3 571.1L530.0 569.5L529.8 568.0L529.7 566.6L529.5 565.2L529.4 563.9L529.2 562.6L529.2 561.5L529.1 560.3L529.1 559.3L529.2 558.3L529.3 557.4L529.5 556.5L529.7 555.9L530.0 555.3L530.4 554.7L530.9 554.1L531.6 553.4L532.2 552.6L533.0 551.7L533.7 550.8L534.4 549.7L535.0 548.4L535.4 547.2L535.8 546.1L536.2 544.8L536.5 543.5L536.8 542.2L537.1 540.8L537.3 539.3L537.4 537.9L537.4 536.4L537.3 534.9L537.2 533.4L536.9 531.8L536.6 530.2L536.3 528.6L535.8 526.9L535.3 525.3L534.7 523.6L534.1 522.1L533.3 520.6L532.5 519.2L531.5 517.9L530.3 516.6L529.0 515.4L527.6 514.3L526.2 513.2L524.8 512.3L523.5 511.4L522.3 510.7L521.4 510.1L520.5 509.8ZM528.1 553.0L527.1 552.6L525.8 552.1L524.2 551.5L522.4 550.8L520.6 550.1L518.7 549.4L516.8 549.1L515.0 548.9L513.5 549.0L512.1 549.7L511.9 550.3L512.4 551.7L513.5 552.8L514.9 553.9L516.6 555.0L518.4 555.7L520.3 556.4L522.0 557.1L523.6 557.7L525.0 558.2L525.9 558.6ZM536.4 590.5L535.8 590.3L535.0 589.9L534.1 589.5L532.9 589.0L531.7 588.4L530.4 587.9L529.0 587.4L527.7 586.9L526.3 586.5L525.0 586.2L523.6 586.1L522.3 586.1L520.9 586.3L519.7 586.6L518.5 587.0L517.4 587.5L516.5 587.9L515.6 588.4L514.9 588.9L514.5 589.7L514.5 590.3L515.2 591.0L516.1 591.2L517.0 591.4L518.1 591.6L519.1 591.7L520.2 591.8L521.3 591.9L522.3 592.1L523.2 592.1L524.0 592.2L524.9 592.3L525.9 592.6L527.0 593.0L528.2 593.5L529.4 594.0L530.5 594.5L531.6 595.0L532.6 595.4L533.5 595.8L534.2 596.1ZM539.8 536.2L540.3 536.5L541.1 536.7L541.8 536.9L542.4 537.2L543.1 537.4L543.7 537.7L544.2 538.0L544.7 538.3L545.1 538.7L545.5 539.2L545.9 539.9L546.4 540.9L546.9 542.0L547.3 543.3L547.8 544.7L548.3 546.2L548.7 547.8L549.2 549.4L549.7 551.0L550.1 552.6L550.6 554.1L551.1 555.7L551.6 557.4L552.1 559.0L552.6 560.7L553.0 562.3L553.5 564.0L553.9 565.6L554.2 567.2L554.5 568.8L554.8 570.5L555.1 572.2L555.3 573.9L555.6 575.7L555.7 577.4L555.9 579.1L556.0 580.7L556.1 582.2L556.2 583.6L556.2 584.8L556.2 585.8L556.1 586.7L556.0 587.4L555.8 588.0L555.6 588.6L555.3 589.3L555.0 590.1L554.6 591.0L554.2 592.1L553.9 593.2L553.5 594.5L553.1 596.0L552.7 597.6L552.2 599.3L551.8 601.0L551.4 602.7L551.0 604.2L550.7 605.7L550.6 606.9L550.7 607.9L551.3 608.1L552.0 607.4L552.7 606.4L553.4 605.1L554.1 603.7L554.8 602.1L555.6 600.5L556.3 598.9L557.0 597.4L557.6 596.0L558.1 594.8L558.6 593.8L559.0 593.0L559.4 592.2L559.8 591.5L560.2 590.7L560.6 589.8L561.0 588.8L561.3 587.8L561.6 586.5L561.8 585.2L561.9 583.7L562.0 582.1L562.0 580.4L561.9 578.6L561.7 576.8L561.5 575.0L561.3 573.2L561.0 571.3L560.8 569.5L560.5 567.8L560.1 566.0L559.7 564.3L559.3 562.5L558.8 560.8L558.4 559.0L557.9 557.3L557.4 555.6L556.8 554.0L556.3 552.4L555.9 550.8L555.4 549.3L554.9 547.7L554.5 546.1L554.0 544.5L553.5 542.9L553.0 541.4L552.5 539.9L551.9 538.4L551.2 537.1L550.5 535.8L549.6 534.6L548.5 533.7L547.4 532.9L546.3 532.3L545.3 531.8L544.4 531.5L543.5 531.2L542.9 531.0L542.5 530.9L542.2 530.8ZM543.4 566.7L542.4 568.0L541.9 569.7L541.5 571.6L541.3 573.8L541.5 576.1L541.7 578.4L542.3 580.5L543.0 582.4L543.7 584.0L545.0 585.0L545.6 585.0L546.6 583.7L547.1 582.0L547.5 580.1L547.7 577.9L547.5 575.6L547.3 573.3L546.7 571.2L546.0 569.3L545.3 567.7L544.0 566.7ZM493.9 622.7L495.3 622.5L496.5 621.9L497.9 620.9L499.4 619.8L500.9 618.6L502.2 617.1L503.4 615.6L504.5 614.2L505.5 612.8L506.2 611.4L506.7 610.0L506.9 608.7L506.9 607.5L506.8 606.4L506.6 605.4L506.4 604.6L506.1 603.9L505.7 603.3L505.4 602.9L504.8 602.5L504.2 602.5L503.6 603.0L503.3 603.6L503.2 604.2L503.0 604.9L502.8 605.5L502.6 606.2L502.3 606.8L502.0 607.4L501.6 608.0L501.2 608.6L500.5 609.5L499.7 610.6L498.7 611.9L497.6 613.3L496.4 614.9L495.5 616.5L494.6 618.1L493.9 619.6L493.4 620.9L493.5 622.3ZM503.0 612.9L504.5 613.2L506.5 613.7L508.9 614.2L511.5 614.8L514.3 615.4L517.1 616.0L519.8 616.3L522.3 616.3L524.4 616.1L526.1 615.3L526.3 614.7L525.1 613.3L523.2 612.2L521.0 611.2L518.4 610.2L515.6 609.6L512.8 609.0L510.2 608.4L507.8 607.8L505.8 607.4L504.4 607.1ZM552.4 577.6L552.6 578.2L552.9 578.9L553.1 579.8L553.5 580.7L553.8 581.8L554.1 582.8L554.5 583.8L554.7 584.7L555.0 585.4L555.1 585.9L560.9 584.1L560.7 583.5L560.4 582.8L560.2 581.9L559.8 581.0L559.5 579.9L559.2 578.9L558.8 577.9L558.6 577.0L558.3 576.3L558.2 575.8ZM460.9 566.7L460.5 567.2L460.3 568.0L460.1 569.0L460.0 570.0L459.8 571.1L459.5 572.2L459.3 573.3L458.9 574.3L458.6 575.2L458.2 576.1L457.7 576.9L457.1 577.7L456.6 578.5L455.9 579.3L455.3 580.0L454.5 580.8L453.7 581.4L452.9 582.1L452.0 582.7L451.0 583.3L450.0 583.8L448.9 584.2L447.7 584.6L446.4 584.9L445.0 585.2L443.5 585.6L441.8 586.0L440.1 586.4L438.2 587.0L436.1 587.6L433.9 588.4L431.5 589.3L429.0 590.3L426.3 591.3L423.6 592.4L420.9 593.4L418.2 594.5L415.7 595.5L413.3 596.4L411.0 597.2L409.0 597.8L407.1 598.4L405.3 598.9L403.6 599.4L401.9 599.8L400.3 600.2L398.6 600.5L397.0 600.8L395.2 601.0L393.4 601.2L391.5 601.4L389.6 601.5L387.6 601.5L385.6 601.5L383.5 601.4L381.4 601.3L379.2 601.3L377.1 601.2L374.9 601.2L372.7 601.2L370.6 601.3L368.4 601.4L366.3 601.5L364.1 601.6L362.0 601.7L359.9 601.8L357.8 601.9L355.8 602.0L353.9 602.0L352.1 602.0L350.3 601.9L348.6 601.8L347.0 601.6L345.3 601.4L343.7 601.2L342.1 601.0L340.4 600.8L338.8 600.6L337.1 600.4L335.5 600.3L333.8 600.2L332.0 600.2L330.2 600.2L328.4 600.2L326.7 600.2L325.1 600.2L323.6 600.2L322.3 600.3L321.1 600.3L320.3 600.3L320.3 606.3L321.2 606.3L322.4 606.3L323.7 606.2L325.2 606.2L326.8 606.2L328.5 606.2L330.2 606.2L331.9 606.2L333.6 606.2L335.1 606.3L336.6 606.4L338.1 606.6L339.7 606.7L341.3 607.0L342.9 607.2L344.6 607.4L346.3 607.6L348.1 607.8L350.0 607.9L351.9 608.0L353.9 608.0L356.0 608.0L358.1 607.9L360.2 607.8L362.3 607.7L364.4 607.6L366.6 607.5L368.7 607.3L370.8 607.3L372.9 607.2L374.9 607.2L377.0 607.2L379.1 607.3L381.2 607.3L383.3 607.4L385.5 607.5L387.6 607.5L389.8 607.5L391.9 607.4L394.0 607.2L396.0 607.0L397.9 606.7L399.7 606.4L401.5 606.0L403.3 605.6L405.1 605.2L406.9 604.7L408.8 604.2L410.8 603.5L413.0 602.8L415.3 602.0L417.8 601.1L420.4 600.1L423.1 598.9L425.8 597.7L428.5 596.5L431.1 595.3L433.5 594.2L435.8 593.2L437.9 592.4L439.7 591.7L441.5 591.0L443.1 590.5L444.7 590.0L446.2 589.6L447.6 589.1L449.0 588.6L450.4 588.1L451.7 587.5L453.0 586.7L454.2 585.9L455.2 585.1L456.2 584.2L457.1 583.2L457.9 582.3L458.6 581.3L459.3 580.3L459.8 579.3L460.4 578.4L460.8 577.3L461.2 576.2L461.5 575.0L461.7 573.7L461.8 572.5L461.9 571.3L461.9 570.1L461.9 569.1L461.8 568.1L461.7 567.4L461.5 566.7ZM332.7 607.4L333.1 608.0L333.7 608.9L334.3 609.8L334.9 610.9L335.7 612.1L336.4 613.4L337.2 614.7L338.0 615.9L338.7 617.1L339.4 618.3L340.1 619.4L340.9 620.6L341.7 621.8L342.7 623.0L343.7 624.1L344.7 625.1L345.6 626.0L346.5 626.8L347.4 627.4L348.4 627.7L349.0 627.3L349.2 626.3L349.1 625.2L348.7 624.1L348.3 622.8L347.8 621.5L347.3 620.1L346.7 618.7L346.0 617.5L345.3 616.3L344.6 615.1L343.9 614.0L343.1 612.8L342.3 611.5L341.6 610.3L340.8 609.0L340.1 607.8L339.4 606.7L338.8 605.7L338.3 604.9L337.9 604.2ZM379.3 605.2L379.8 604.7L380.5 603.9L381.3 603.0L382.2 601.9L383.2 600.8L384.2 599.6L385.2 598.4L386.2 597.2L387.0 596.0L387.8 594.9L388.5 593.9L389.0 592.9L389.4 591.9L389.8 591.0L390.1 590.2L390.4 589.4L390.6 588.6L390.9 587.9L391.3 587.2L391.6 586.4L392.0 585.5L392.5 584.4L393.0 583.2L393.6 581.9L394.2 580.6L394.7 579.4L395.1 578.2L395.5 577.1L395.7 576.1L395.6 575.2L395.0 574.8L394.1 575.1L393.3 575.7L392.4 576.4L391.5 577.3L390.6 578.3L389.7 579.4L388.8 580.5L387.9 581.5L387.1 582.6L386.4 583.6L385.8 584.6L385.4 585.6L385.0 586.5L384.7 587.3L384.5 588.1L384.2 588.9L383.9 589.6L383.6 590.2L383.2 590.9L382.8 591.7L382.2 592.5L381.4 593.5L380.6 594.6L379.6 595.7L378.6 596.9L377.7 598.0L376.8 599.0L376.0 599.9L375.2 600.7L374.7 601.4ZM461.9 586.1L462.6 587.4L463.7 588.3L465.1 589.2L466.6 590.0L468.4 590.4L470.2 590.8L471.9 590.9L473.6 590.7L475.0 590.4L476.1 589.5L476.3 588.9L475.6 587.6L474.5 586.7L473.1 585.8L471.6 585.0L469.8 584.6L468.0 584.2L466.3 584.1L464.6 584.3L463.2 584.6L462.1 585.5ZM287.8 670.3L289.2 670.6L291.0 670.7L293.2 670.8L295.5 670.8L298.1 670.8L300.8 670.7L303.4 670.7L306.0 670.6L308.4 670.5L310.5 670.3L312.4 670.2L314.1 670.1L315.7 669.9L317.3 669.8L318.8 669.6L320.4 669.4L322.0 669.2L323.7 669.0L325.5 668.7L327.5 668.3L329.7 668.0L332.0 667.5L334.5 667.1L337.0 666.6L339.6 666.0L342.3 665.5L344.9 664.8L347.6 664.2L350.2 663.5L352.7 662.9L355.3 662.3L357.9 661.6L360.5 661.0L363.1 660.3L365.8 659.6L368.4 658.9L370.9 658.2L373.4 657.5L375.7 656.8L377.9 656.2L380.0 655.4L382.0 654.6L383.8 653.8L385.5 653.0L387.1 652.3L388.5 651.6L389.9 650.9L391.3 650.3L392.7 649.8L394.2 649.5L395.7 649.2L397.2 649.0L398.7 649.0L400.3 649.0L402.0 649.0L403.7 649.1L405.6 649.1L407.6 649.1L409.8 649.1L412.1 648.9L414.7 648.7L417.6 648.4L420.8 648.0L424.1 647.5L427.4 647.1L430.7 646.6L433.7 646.1L436.4 645.6L438.6 645.1L440.3 644.5L440.3 643.9L438.5 643.6L436.2 643.6L433.5 643.6L430.4 643.7L427.1 643.8L423.8 644.0L420.5 644.1L417.3 644.3L414.4 644.4L411.9 644.5L409.7 644.4L407.7 644.4L405.8 644.2L404.0 644.1L402.3 643.9L400.5 643.7L398.8 643.6L397.0 643.6L395.1 643.7L393.2 643.9L391.3 644.3L389.4 644.9L387.7 645.5L386.1 646.2L384.5 646.9L382.9 647.6L381.3 648.4L379.7 649.1L378.0 649.8L376.1 650.4L374.0 651.1L371.7 651.8L369.3 652.4L366.8 653.1L364.3 653.8L361.7 654.5L359.0 655.1L356.4 655.8L353.8 656.5L351.3 657.1L348.7 657.7L346.2 658.4L343.5 659.0L340.9 659.6L338.3 660.3L335.8 661.0L333.3 661.6L330.9 662.2L328.6 662.8L326.5 663.3L324.5 663.7L322.8 664.1L321.2 664.4L319.6 664.7L318.2 665.0L316.7 665.3L315.2 665.5L313.6 665.7L311.9 666.0L310.1 666.3L308.0 666.6L305.7 666.9L303.1 667.2L300.5 667.5L297.9 667.8L295.4 668.2L293.0 668.5L290.9 668.8L289.1 669.2L287.8 669.7ZM376.9 640.3L377.5 641.8L378.8 642.9L380.3 644.2L382.2 645.3L384.2 646.1L386.3 647.0L388.3 647.8L390.0 648.5L391.5 649.1L392.6 649.5L394.8 643.9L393.7 643.5L392.3 642.9L390.5 642.2L388.5 641.4L386.5 640.6L384.4 639.7L382.3 639.3L380.3 639.1L378.6 639.1L377.1 639.7ZM309.3 659.4L309.1 660.7L309.4 661.7L309.8 662.8L310.5 663.8L311.4 664.5L312.3 665.2L313.2 665.9L314.0 666.5L314.7 667.0L315.2 667.4L318.8 662.6L318.4 662.3L317.7 661.7L316.9 661.1L316.0 660.4L315.1 659.7L314.2 659.0L313.0 658.6L311.9 658.4L310.9 658.4L309.7 659.0ZM312.8 666.7L312.5 667.1L312.1 667.7L311.5 668.5L310.9 669.4L310.3 670.3L309.6 671.4L309.0 672.4L308.4 673.5L307.9 674.7L307.4 675.9L307.2 677.1L307.1 678.4L307.1 679.5L307.2 680.4L307.4 681.3L307.5 682.1L307.6 682.7L307.6 683.2L307.6 683.7L307.5 684.1L307.2 684.6L306.9 685.2L306.5 685.9L306.1 686.6L305.5 687.3L304.9 688.1L304.3 688.9L303.6 689.7L303.0 690.6L302.4 691.5L301.8 692.4L301.0 693.4L300.3 694.4L299.4 695.5L298.6 696.6L297.8 697.7L297.1 698.7L296.5 699.7L296.1 700.6L296.0 701.5L296.4 701.9L297.3 701.8L298.2 701.4L299.2 700.9L300.2 700.2L301.4 699.4L302.5 698.6L303.6 697.7L304.7 696.8L305.7 695.9L306.6 695.1L307.4 694.3L308.2 693.6L308.9 692.7L309.6 691.8L310.3 690.9L311.0 690.0L311.6 689.1L312.2 688.1L312.7 687.1L313.1 685.9L313.5 684.7L313.6 683.4L313.6 682.3L313.5 681.3L313.3 680.4L313.2 679.6L313.1 678.9L313.1 678.4L313.1 677.9L313.2 677.5L313.4 677.0L313.7 676.3L314.2 675.4L314.7 674.5L315.3 673.6L315.9 672.7L316.5 671.9L317.0 671.1L317.5 670.5L317.8 669.9ZM417.9 650.2L418.7 651.2L419.8 652.6L421.2 654.3L422.6 656.1L424.2 658.1L425.7 660.1L427.5 661.7L429.3 663.1L430.9 664.1L432.6 664.4L433.0 664.0L433.1 662.3L432.5 660.5L431.6 658.5L430.5 656.4L428.9 654.4L427.4 652.4L425.9 650.5L424.6 648.9L423.5 647.5L422.7 646.4ZM273.7 687.8L274.4 687.6L275.3 687.3L276.3 687.0L277.5 686.6L278.7 686.2L280.0 685.8L281.0 685.0L281.9 684.2L282.6 683.3L282.9 682.0L282.7 681.4L281.7 680.5L280.6 680.2L279.4 680.1L278.1 680.1L276.9 680.5L275.6 680.9L274.4 681.3L273.4 681.6L272.5 681.9L271.9 682.2ZM232.4 660.7L232.6 661.5L232.8 662.4L233.1 663.6L233.4 664.9L233.7 666.3L234.1 667.7L234.5 669.2L234.9 670.7L235.4 672.2L235.9 673.5L236.3 674.8L236.8 676.1L237.3 677.4L237.8 678.7L238.4 680.1L239.0 681.5L239.7 682.8L240.5 684.1L241.5 685.2L242.6 686.3L243.7 687.1L245.0 687.8L246.2 688.2L247.4 688.5L248.6 688.6L249.7 688.7L250.9 688.7L252.0 688.8L253.3 688.9L254.7 689.0L256.4 689.1L258.3 689.3L260.4 689.3L262.5 689.4L264.6 689.5L266.8 689.6L268.9 689.7L271.0 689.9L272.9 690.1L274.7 690.4L276.4 690.8L278.1 691.3L279.9 691.9L281.6 692.5L283.3 693.1L285.0 693.8L286.6 694.5L288.2 695.1L289.6 695.6L291.0 696.1L292.3 696.6L293.4 696.9L294.5 697.2L295.5 697.5L296.4 697.8L297.2 698.0L297.9 698.2L298.5 698.4L299.0 698.5L299.5 698.7L301.1 692.9L300.7 692.8L300.1 692.6L299.5 692.5L298.8 692.3L298.0 692.0L297.2 691.8L296.2 691.5L295.2 691.2L294.1 690.8L293.0 690.5L291.7 690.0L290.4 689.5L288.8 688.9L287.2 688.2L285.5 687.5L283.7 686.9L281.8 686.2L279.9 685.6L277.9 685.0L275.9 684.6L273.8 684.2L271.6 683.9L269.4 683.8L267.1 683.6L264.9 683.5L262.7 683.4L260.6 683.4L258.6 683.3L256.9 683.2L255.3 683.0L253.8 682.9L252.3 682.8L251.1 682.7L250.0 682.7L249.1 682.6L248.4 682.5L247.8 682.4L247.3 682.3L246.9 682.0L246.4 681.7L246.0 681.2L245.5 680.6L244.9 679.8L244.4 678.8L243.9 677.7L243.4 676.5L242.9 675.3L242.4 674.0L242.0 672.7L241.5 671.5L241.1 670.3L240.7 669.0L240.3 667.6L239.9 666.2L239.5 664.8L239.2 663.4L238.9 662.2L238.6 661.0L238.4 660.0L238.2 659.3ZM303.9 696.2L304.9 696.4L306.2 696.7L307.8 697.0L309.6 697.4L311.5 697.8L313.4 698.2L315.4 698.6L317.3 699.0L319.0 699.3L320.6 699.6L322.1 699.9L323.6 700.1L325.1 700.2L326.6 700.3L328.1 700.3L329.4 700.4L330.7 700.3L331.8 700.2L332.8 700.1L333.6 699.5L333.8 698.9L333.2 698.1L332.3 697.5L331.3 697.0L330.2 696.5L328.9 696.0L327.6 695.5L326.2 695.0L324.7 694.4L323.3 694.1L321.8 693.8L320.2 693.4L318.5 693.1L316.6 692.7L314.6 692.3L312.7 691.9L310.8 691.5L309.0 691.2L307.4 690.8L306.1 690.6L305.1 690.4ZM301.9 709.5L301.9 710.8L302.3 711.7L303.0 712.6L303.8 713.4L304.8 713.9L305.9 714.4L307.0 714.6L308.1 714.5L309.1 714.3L310.2 713.6L310.4 713.0L310.4 711.7L310.0 710.8L309.3 709.9L308.5 709.1L307.5 708.6L306.4 708.1L305.3 707.9L304.2 708.0L303.2 708.2L302.1 708.9ZM340.3 692.0L341.0 693.2L342.1 693.8L343.3 694.3L344.7 694.7L346.1 694.7L347.6 694.7L349.0 694.3L350.2 693.8L351.3 693.2L352.0 692.0L352.0 691.4L351.3 690.2L350.2 689.6L349.0 689.1L347.6 688.7L346.1 688.7L344.7 688.7L343.3 689.1L342.1 689.6L341.0 690.2L340.3 691.4Z"/>
<path fill="#f3ebe5" d="M378.7 711.4L379.9 711.0L381.3 710.2L383.0 709.3L384.8 708.3L386.8 707.1L388.9 706.0L391.1 704.8L393.3 703.6L395.4 702.5L397.5 701.4L399.5 700.5L401.6 699.5L403.8 698.5L406.0 697.6L408.2 696.6L410.4 695.7L412.6 694.8L414.9 693.9L417.1 693.0L419.2 692.1L421.4 691.3L423.6 690.4L425.7 689.5L427.9 688.7L430.0 687.9L432.1 687.1L434.3 686.4L436.4 685.7L438.5 685.1L440.6 684.6L442.7 684.2L444.8 683.9L447.0 683.6L449.1 683.4L451.2 683.3L453.4 683.1L455.6 683.0L457.8 682.9L460.0 682.7L462.2 682.4L464.3 682.2L466.4 682.0L468.4 681.7L470.4 681.5L472.5 681.2L474.6 680.9L476.8 680.6L479.1 680.1L481.4 679.6L484.0 679.0L486.8 678.3L490.0 677.4L493.4 676.4L496.9 675.3L500.5 674.1L503.9 673.0L507.1 671.9L509.9 670.9L512.3 670.0L514.0 669.2L514.0 669.0L512.0 669.2L509.6 669.8L506.7 670.6L503.4 671.5L499.9 672.4L496.4 673.3L492.8 674.3L489.4 675.2L486.2 675.9L483.4 676.6L480.9 677.1L478.6 677.5L476.3 677.8L474.2 678.1L472.1 678.4L470.1 678.6L468.1 678.8L466.0 679.1L464.0 679.3L461.8 679.6L459.7 679.8L457.5 680.0L455.4 680.1L453.2 680.2L451.0 680.4L448.9 680.5L446.7 680.7L444.4 681.0L442.2 681.3L440.0 681.8L437.8 682.3L435.6 683.0L433.4 683.6L431.2 684.4L429.0 685.2L426.8 686.0L424.7 686.8L422.5 687.7L420.3 688.6L418.2 689.5L416.0 690.3L413.8 691.3L411.6 692.3L409.3 693.3L407.1 694.3L404.9 695.3L402.8 696.4L400.6 697.4L398.5 698.5L396.5 699.6L394.5 700.7L392.3 701.9L390.2 703.2L388.1 704.6L386.1 705.9L384.1 707.1L382.4 708.3L380.8 709.4L379.5 710.3L378.5 711.2ZM373.2 715.8L374.7 715.7L376.6 715.4L378.8 715.0L381.3 714.5L383.9 713.9L386.7 713.3L389.5 712.6L392.3 711.8L394.9 711.1L397.4 710.2L399.7 709.3L402.0 708.4L404.2 707.3L406.4 706.2L408.6 705.1L410.8 704.0L412.9 702.9L415.1 701.7L417.2 700.7L419.3 699.6L421.5 698.5L423.6 697.4L425.7 696.3L427.8 695.3L429.8 694.2L431.9 693.2L434.0 692.3L436.1 691.4L438.3 690.6L440.6 690.0L443.0 689.5L445.5 689.2L448.1 688.9L450.8 688.8L453.6 688.7L456.3 688.6L459.2 688.5L462.0 688.4L464.8 688.2L467.6 687.8L470.4 687.4L473.2 687.0L476.0 686.4L478.8 685.8L481.6 685.2L484.4 684.6L487.1 684.0L489.8 683.3L492.3 682.7L494.8 682.0L497.2 681.3L499.6 680.6L502.1 679.8L504.4 678.9L506.7 678.1L508.9 677.3L510.8 676.5L512.6 675.9L514.0 675.2L515.1 674.6L515.1 674.4L513.8 674.5L512.2 675.0L510.5 675.5L508.4 676.1L506.3 676.7L503.9 677.4L501.5 678.1L499.1 678.8L496.7 679.4L494.2 680.0L491.8 680.5L489.2 681.1L486.6 681.6L483.9 682.2L481.1 682.7L478.3 683.2L475.5 683.7L472.7 684.1L469.9 684.6L467.2 685.0L464.5 685.3L461.8 685.5L459.0 685.6L456.3 685.7L453.5 685.8L450.7 685.9L447.9 686.0L445.2 686.3L442.5 686.7L440.0 687.2L437.5 687.9L435.1 688.7L432.9 689.6L430.7 690.6L428.5 691.6L426.4 692.7L424.3 693.8L422.3 694.9L420.2 696.0L418.1 697.0L415.9 698.1L413.7 699.2L411.6 700.4L409.5 701.6L407.4 702.8L405.2 704.0L403.1 705.1L401.0 706.2L398.8 707.2L396.6 708.2L394.3 709.1L391.7 709.9L389.0 710.8L386.3 711.6L383.6 712.4L380.9 713.1L378.5 713.8L376.4 714.4L374.5 715.0L373.2 715.6ZM355.7 713.6L356.8 714.3L358.2 715.0L359.9 715.8L361.9 716.7L363.9 717.6L366.1 718.5L368.4 719.4L370.7 720.1L373.0 720.6L375.2 721.0L377.4 721.1L379.5 721.2L381.7 721.1L384.0 720.9L386.2 720.6L388.4 720.2L390.7 719.8L392.9 719.3L395.2 718.7L397.4 718.1L399.6 717.4L401.9 716.6L404.1 715.7L406.3 714.7L408.5 713.6L410.7 712.5L412.8 711.4L415.0 710.4L417.2 709.3L419.3 708.3L421.5 707.3L423.6 706.3L425.8 705.3L428.0 704.3L430.1 703.3L432.3 702.3L434.4 701.3L436.5 700.4L438.7 699.5L440.8 698.7L442.9 697.9L445.0 697.1L446.9 696.4L448.9 695.7L450.9 695.1L452.9 694.5L455.1 693.9L457.3 693.3L459.7 692.8L462.3 692.2L465.1 691.7L468.2 691.1L471.5 690.6L475.0 690.1L478.5 689.6L482.0 689.1L485.4 688.6L488.7 688.2L491.8 687.8L494.6 687.4L497.2 687.0L499.8 686.7L502.3 686.3L504.7 686.0L506.9 685.7L509.0 685.5L510.9 685.2L512.5 685.0L514.0 684.8L515.1 684.4L515.1 684.2L513.9 684.1L512.4 684.1L510.8 684.2L508.9 684.3L506.8 684.4L504.5 684.6L502.1 684.7L499.6 684.9L497.0 685.2L494.4 685.4L491.6 685.7L488.5 686.0L485.1 686.3L481.7 686.7L478.2 687.1L474.6 687.5L471.1 687.9L467.8 688.3L464.6 688.8L461.7 689.4L459.1 689.9L456.6 690.5L454.3 691.1L452.1 691.7L450.0 692.3L448.0 693.0L446.0 693.7L444.0 694.4L441.9 695.2L439.8 695.9L437.6 696.8L435.4 697.7L433.2 698.6L431.1 699.6L428.9 700.6L426.7 701.6L424.6 702.7L422.4 703.7L420.3 704.7L418.1 705.7L415.9 706.7L413.7 707.8L411.5 708.8L409.4 709.9L407.2 711.0L405.1 712.0L402.9 713.0L400.8 713.9L398.7 714.8L396.6 715.5L394.5 716.2L392.3 716.8L390.1 717.3L388.0 717.8L385.8 718.3L383.7 718.6L381.6 718.9L379.5 719.0L377.4 719.1L375.4 719.0L373.3 718.8L371.2 718.4L368.9 717.8L366.7 717.1L364.4 716.3L362.3 715.5L360.4 714.8L358.6 714.1L357.1 713.6L355.9 713.4ZM375.3 726.6L376.6 726.7L378.3 726.7L380.3 726.6L382.5 726.5L384.9 726.4L387.4 726.2L389.9 726.0L392.4 725.8L394.9 725.6L397.1 725.4L399.3 725.1L401.5 724.9L403.7 724.6L405.9 724.3L408.1 724.1L410.2 723.8L412.4 723.5L414.6 723.2L416.8 722.9L418.9 722.5L421.1 722.2L423.2 721.9L425.2 721.6L427.3 721.3L429.4 721.0L431.5 720.6L433.6 720.3L435.9 720.0L438.1 719.6L440.5 719.2L443.0 718.9L445.6 718.5L448.2 718.2L450.9 717.8L453.7 717.5L456.5 717.1L459.3 716.6L462.2 716.1L465.0 715.6L467.8 714.9L470.6 714.1L473.5 713.3L476.4 712.3L479.3 711.3L482.3 710.2L485.1 709.1L487.8 707.9L490.4 706.8L492.8 705.7L494.9 704.7L496.9 703.6L498.7 702.4L500.3 701.2L501.8 700.0L503.1 698.8L504.3 697.7L505.3 696.6L506.3 695.7L507.0 694.8L507.6 694.1L507.4 693.9L506.6 694.3L505.7 695.0L504.7 695.8L503.5 696.8L502.3 697.8L500.9 698.8L499.4 699.9L497.7 701.0L496.0 702.0L494.1 702.9L491.9 703.9L489.6 704.8L487.0 705.8L484.3 706.8L481.4 707.8L478.5 708.8L475.6 709.7L472.6 710.6L469.8 711.4L467.0 712.1L464.4 712.7L461.6 713.3L458.9 713.8L456.1 714.2L453.3 714.6L450.6 715.0L447.8 715.3L445.2 715.7L442.6 716.0L440.1 716.4L437.7 716.7L435.4 717.1L433.2 717.4L431.0 717.8L428.9 718.1L426.9 718.4L424.8 718.7L422.7 719.0L420.6 719.3L418.5 719.7L416.3 720.0L414.2 720.4L412.0 720.7L409.8 721.1L407.7 721.5L405.5 721.8L403.3 722.2L401.2 722.6L399.0 722.9L396.9 723.2L394.6 723.5L392.2 723.9L389.7 724.2L387.2 724.5L384.7 724.8L382.4 725.1L380.2 725.4L378.2 725.7L376.6 726.0L375.3 726.4ZM391.6 723.4L393.1 724.2L395.2 725.1L397.7 726.1L400.5 727.2L403.5 728.3L406.6 729.3L409.8 730.3L412.9 731.2L415.9 731.8L418.6 732.2L421.1 732.3L423.5 732.1L425.7 731.7L427.8 731.2L429.9 730.6L432.0 730.0L434.0 729.4L436.1 728.8L438.2 728.3L440.5 727.9L443.0 727.7L445.6 727.4L448.3 727.3L451.1 727.1L453.9 727.0L456.8 726.8L459.6 726.7L462.4 726.4L465.1 726.0L467.6 725.6L470.2 725.0L472.7 724.3L475.3 723.5L477.8 722.6L480.2 721.8L482.5 720.9L484.6 720.0L486.4 719.3L488.0 718.6L489.1 717.9L489.1 717.7L487.7 717.8L486.1 718.2L484.1 718.8L482.0 719.4L479.7 720.1L477.2 720.8L474.7 721.4L472.1 722.1L469.6 722.6L467.2 723.0L464.7 723.4L462.1 723.6L459.4 723.8L456.6 723.9L453.8 724.1L450.9 724.2L448.1 724.4L445.3 724.5L442.7 724.8L440.1 725.1L437.7 725.5L435.4 726.0L433.2 726.6L431.1 727.2L429.1 727.9L427.1 728.4L425.1 728.9L423.1 729.2L421.0 729.4L418.8 729.4L416.3 729.2L413.5 728.7L410.4 728.0L407.3 727.2L404.1 726.4L401.0 725.5L398.2 724.7L395.6 723.9L393.4 723.4L391.6 723.2ZM402.4 735.3L403.9 735.9L406.0 736.4L408.4 736.9L411.1 737.5L414.1 738.1L417.2 738.6L420.4 739.1L423.5 739.5L426.6 739.8L429.5 739.8L432.3 739.8L435.1 739.7L437.9 739.5L440.8 739.2L443.6 738.8L446.4 738.5L449.1 738.0L451.8 737.6L454.4 737.1L456.9 736.6L459.4 736.0L462.0 735.2L464.5 734.4L467.0 733.6L469.4 732.7L471.7 731.8L473.8 731.0L475.6 730.2L477.2 729.5L478.3 728.8L478.3 728.6L476.9 728.7L475.2 729.1L473.3 729.6L471.2 730.2L468.8 730.8L466.4 731.5L463.9 732.1L461.3 732.8L458.8 733.3L456.3 733.8L453.8 734.3L451.3 734.7L448.6 735.2L445.9 735.6L443.2 736.0L440.4 736.3L437.7 736.6L434.9 736.8L432.2 736.9L429.5 737.0L426.7 736.9L423.8 736.7L420.7 736.5L417.5 736.2L414.4 735.9L411.4 735.6L408.7 735.3L406.2 735.1L404.1 734.9L402.4 735.1ZM424.1 745.0L425.9 745.4L428.3 745.5L431.3 745.4L434.5 745.1L437.8 744.7L441.2 744.3L444.4 743.9L447.2 743.3L449.6 742.6L451.2 741.8L451.2 741.6L449.4 741.2L447.0 741.1L444.0 741.2L440.8 741.5L437.5 741.9L434.1 742.3L430.9 742.7L428.1 743.3L425.7 744.0L424.1 744.8ZM434.9 700.6L436.6 700.7L438.7 700.6L441.2 700.4L443.9 700.1L446.9 699.7L450.1 699.3L453.2 698.9L456.4 698.5L459.4 698.1L462.2 697.6L465.0 697.2L467.8 696.8L470.6 696.3L473.5 695.9L476.3 695.4L479.1 695.0L481.8 694.5L484.5 694.1L487.0 693.6L489.4 693.1L491.6 692.6L493.9 692.0L496.1 691.4L498.2 690.9L500.2 690.3L502.1 689.7L503.8 689.2L505.3 688.6L506.5 688.2L507.5 687.6L507.5 687.4L506.3 687.3L505.0 687.5L503.4 687.8L501.7 688.1L499.8 688.5L497.7 688.9L495.6 689.3L493.4 689.7L491.1 690.1L488.8 690.5L486.5 690.8L484.0 691.2L481.4 691.7L478.7 692.1L475.9 692.6L473.0 693.0L470.2 693.5L467.3 693.9L464.5 694.3L461.8 694.8L458.9 695.2L455.9 695.7L452.8 696.3L449.7 696.9L446.6 697.5L443.6 698.1L440.9 698.7L438.5 699.2L436.4 699.8L434.9 700.4ZM420.8 715.8L422.7 715.9L425.0 715.8L427.7 715.5L430.8 715.2L434.1 714.8L437.6 714.4L441.2 714.0L444.7 713.6L448.1 713.2L451.4 712.7L454.6 712.3L457.9 712.0L461.3 711.6L464.7 711.3L468.2 710.9L471.6 710.5L474.9 710.1L478.1 709.6L481.2 709.1L484.1 708.3L486.8 707.5L489.5 706.4L492.1 705.2L494.6 704.0L497.0 702.7L499.1 701.5L501.1 700.3L502.8 699.2L504.3 698.3L505.4 697.4L505.2 697.2L503.9 697.5L502.3 698.2L500.4 699.0L498.3 700.0L496.1 701.0L493.7 702.1L491.2 703.1L488.6 704.1L486.0 705.0L483.3 705.7L480.6 706.2L477.6 706.8L474.5 707.2L471.2 707.7L467.8 708.0L464.4 708.4L461.0 708.7L457.6 709.1L454.2 709.5L451.0 709.9L447.7 710.3L444.3 710.9L440.8 711.5L437.3 712.1L433.8 712.7L430.5 713.3L427.5 713.9L424.8 714.4L422.5 715.0L420.8 715.6ZM427.3 709.3L429.1 709.6L431.4 709.5L434.1 709.4L437.1 709.3L440.4 709.1L443.8 708.9L447.2 708.5L450.6 708.1L453.8 707.7L456.8 707.3L459.7 706.9L462.8 706.5L466.0 706.0L469.1 705.4L472.2 704.8L475.1 704.1L477.8 703.5L480.2 702.9L482.2 702.4L483.7 701.7L483.7 701.5L482.0 701.3L479.9 701.5L477.5 701.7L474.7 702.0L471.8 702.3L468.7 702.7L465.5 703.1L462.4 703.6L459.3 704.1L456.4 704.5L453.4 704.8L450.2 705.2L446.9 705.6L443.5 706.0L440.1 706.5L436.9 707.0L433.9 707.5L431.2 708.0L429.0 708.4L427.3 709.1ZM362.0 718.1L363.3 718.7L365.0 719.2L367.0 719.9L369.3 720.6L371.8 721.4L374.4 722.0L377.1 722.6L379.8 723.0L382.5 723.2L385.1 723.1L387.6 722.7L390.1 722.0L392.6 721.2L395.1 720.2L397.6 719.0L400.1 717.9L402.7 716.7L405.2 715.5L407.8 714.4L410.5 713.4L413.3 712.3L416.2 711.3L419.1 710.2L422.1 709.1L425.2 708.1L428.2 707.0L431.3 706.0L434.3 705.1L437.4 704.2L440.4 703.4L443.3 702.7L446.3 702.1L449.2 701.6L452.2 701.1L455.2 700.6L458.2 700.2L461.2 699.8L464.2 699.4L467.2 698.9L470.2 698.4L473.3 697.8L476.5 697.2L479.8 696.6L483.1 696.0L486.3 695.4L489.5 694.8L492.5 694.3L495.3 693.7L497.9 693.2L500.1 692.8L502.1 692.4L503.9 692.1L505.4 691.8L506.8 691.5L508.0 691.2L509.0 691.0L509.9 690.8L510.7 690.6L511.4 690.4L512.0 690.1L512.0 689.9L511.3 689.8L510.6 689.9L509.8 689.9L508.8 690.0L507.8 690.2L506.6 690.3L505.2 690.5L503.6 690.7L501.9 690.9L499.9 691.2L497.6 691.5L495.0 691.9L492.2 692.3L489.1 692.7L485.9 693.2L482.7 693.7L479.4 694.2L476.1 694.7L472.9 695.2L469.8 695.6L466.8 696.1L463.8 696.5L460.8 696.9L457.8 697.3L454.8 697.8L451.8 698.2L448.8 698.7L445.7 699.3L442.7 699.9L439.6 700.6L436.6 701.4L433.5 702.3L430.4 703.3L427.3 704.3L424.2 705.3L421.2 706.4L418.1 707.5L415.2 708.6L412.3 709.6L409.5 710.6L406.7 711.7L404.1 712.9L401.5 714.2L399.0 715.5L396.5 716.7L394.1 717.9L391.8 718.9L389.4 719.8L387.1 720.5L384.9 720.9L382.5 721.1L380.0 721.1L377.4 720.8L374.7 720.4L372.1 719.9L369.6 719.3L367.3 718.8L365.2 718.3L363.4 717.9L362.0 717.9ZM385.0 731.1L386.5 731.2L388.4 731.0L390.6 730.8L393.1 730.5L395.8 730.2L398.6 729.8L401.5 729.4L404.5 729.1L407.4 728.7L410.2 728.3L413.0 727.9L415.9 727.4L418.9 727.0L421.9 726.5L424.9 725.9L428.0 725.4L431.1 724.9L434.2 724.4L437.2 723.9L440.2 723.4L443.2 723.0L446.3 722.6L449.3 722.3L452.4 722.0L455.5 721.6L458.5 721.3L461.6 720.9L464.5 720.4L467.4 719.9L470.3 719.3L473.1 718.5L476.0 717.6L479.0 716.7L481.9 715.6L484.7 714.6L487.3 713.6L489.7 712.6L491.9 711.7L493.7 710.9L495.0 710.1L495.0 709.9L493.4 710.1L491.5 710.6L489.3 711.3L486.8 712.1L484.1 712.9L481.2 713.8L478.3 714.6L475.4 715.4L472.5 716.1L469.7 716.7L467.0 717.2L464.1 717.6L461.2 718.0L458.2 718.4L455.2 718.7L452.1 719.1L449.0 719.4L445.9 719.8L442.8 720.1L439.8 720.6L436.8 721.0L433.7 721.5L430.6 722.0L427.5 722.5L424.4 723.1L421.4 723.6L418.4 724.1L415.4 724.7L412.6 725.2L409.8 725.7L407.0 726.3L404.1 726.8L401.2 727.4L398.3 727.9L395.5 728.4L392.8 729.0L390.4 729.5L388.2 729.9L386.4 730.4L385.0 730.9ZM410.0 741.1L411.7 741.7L414.1 742.2L416.8 742.8L419.9 743.3L423.3 743.9L426.8 744.4L430.3 744.9L433.7 745.2L437.0 745.4L440.0 745.4L442.8 745.3L445.5 745.1L448.2 744.8L450.8 744.4L453.4 744.0L455.9 743.5L458.3 743.0L460.7 742.5L463.0 741.9L465.3 741.4L467.6 740.7L470.0 740.0L472.3 739.3L474.6 738.5L476.9 737.7L478.9 736.9L480.9 736.1L482.5 735.4L484.0 734.8L485.0 734.1L485.0 733.9L483.7 733.9L482.2 734.3L480.4 734.7L478.4 735.3L476.3 735.8L474.0 736.4L471.7 737.1L469.3 737.6L467.0 738.2L464.7 738.6L462.4 739.1L460.1 739.6L457.7 740.2L455.3 740.7L452.9 741.1L450.4 741.6L447.8 741.9L445.3 742.2L442.6 742.4L440.0 742.6L437.1 742.5L433.9 742.4L430.5 742.1L427.1 741.9L423.6 741.6L420.2 741.3L417.1 741.0L414.3 740.8L411.9 740.7L410.0 740.9ZM445.0 703.1L446.5 703.4L448.4 703.5L450.6 703.6L453.1 703.6L455.8 703.5L458.7 703.5L461.6 703.3L464.5 703.1L467.4 702.8L470.2 702.4L473.0 702.0L476.1 701.5L479.3 701.0L482.6 700.4L485.8 699.7L488.9 698.9L491.7 698.2L494.3 697.5L496.4 696.9L498.0 696.1L498.0 695.9L496.2 695.8L494.0 696.0L491.4 696.3L488.5 696.7L485.3 697.1L482.1 697.6L478.8 698.1L475.6 698.7L472.6 699.2L469.8 699.6L467.1 699.9L464.3 700.2L461.4 700.4L458.5 700.8L455.7 701.1L453.0 701.4L450.5 701.7L448.3 702.0L446.4 702.4L445.0 702.9ZM395.0 695.1L396.6 694.9L398.5 694.3L400.8 693.6L403.3 692.7L406.1 691.8L408.9 690.9L411.8 689.9L414.8 689.0L417.7 688.0L420.4 687.2L423.1 686.4L425.8 685.6L428.5 684.8L431.2 684.0L434.0 683.1L436.8 682.3L439.6 681.5L442.5 680.8L445.4 680.1L448.3 679.4L451.3 678.8L454.4 678.3L457.6 677.8L460.8 677.3L464.1 676.9L467.3 676.4L470.6 676.0L473.9 675.5L477.1 675.0L480.3 674.3L483.5 673.6L486.9 672.8L490.3 671.9L493.8 671.0L497.2 670.1L500.5 669.2L503.4 668.3L506.1 667.6L508.3 666.9L510.0 666.1L510.0 665.9L508.1 666.0L505.8 666.4L503.1 666.9L500.1 667.6L496.8 668.3L493.3 669.0L489.8 669.7L486.3 670.4L483.0 671.1L479.7 671.7L476.6 672.2L473.4 672.6L470.2 673.1L467.0 673.6L463.7 674.0L460.4 674.4L457.2 674.9L453.9 675.4L450.8 676.0L447.7 676.6L444.7 677.3L441.7 678.0L438.8 678.7L436.0 679.5L433.2 680.4L430.4 681.2L427.6 682.1L424.9 683.0L422.3 683.9L419.6 684.8L416.9 685.8L414.0 686.8L411.1 687.9L408.2 689.0L405.4 690.2L402.8 691.3L400.3 692.3L398.2 693.2L396.3 694.1L395.0 694.9Z"/>
</g>
<path d="M337 714.5C342 721 348 728 356 738C364.5 748 370 755 373.7 763.3C376 769 377 775 377.3 781" fill="none" stroke="#000" stroke-width="6"/>
<path d="M355 712C362 722 372 733 380 740C388 748 393 755 398 762C402 769 405 775 407 781" fill="none" stroke="#000" stroke-width="7"/></g></defs><use href="#brain"/><use href="#brain" transform="translate(759,0)"/></svg><!--/BRAINS-->
</div>

<!-- Right panel -->
<svg style="left:1470px;top:188px" width="436" height="248" viewBox="0 0 1920 1092">
<defs>
<clipPath id="vclip"><rect x="18" y="18" width="1884" height="1054" rx="30"/></clipPath>
<filter id="b2" x="-50%" y="-50%" width="200%" height="200%"><feGaussianBlur stdDeviation="16"/></filter>
<filter id="b3" x="-50%" y="-50%" width="200%" height="200%"><feGaussianBlur stdDeviation="6"/></filter>
<filter id="b4" x="-50%" y="-50%" width="200%" height="200%"><feGaussianBlur stdDeviation="3"/></filter>
<linearGradient id="vbg" x1="0" x2="1" y1="0" y2="0"><stop offset="0" stop-color="#c2c0bb"/><stop offset="0.06" stop-color="#aeaaa4"/><stop offset="0.2" stop-color="#9a948e"/><stop offset="0.35" stop-color="#8a837d"/><stop offset="0.5" stop-color="#756d67"/><stop offset="0.7" stop-color="#6c6660"/><stop offset="0.9" stop-color="#5b5650"/><stop offset="1" stop-color="#4a4641"/></linearGradient>
<radialGradient id="rg1"><stop offset="0" stop-color="#938e7d" stop-opacity="0.95"/><stop offset="0.6" stop-color="#8a8576" stop-opacity="0.5"/><stop offset="1" stop-color="#8a8576" stop-opacity="0"/></radialGradient>
<radialGradient id="rg2"><stop offset="0" stop-color="#34312d" stop-opacity="0.85"/><stop offset="1" stop-color="#34312d" stop-opacity="0"/></radialGradient>
<radialGradient id="rg3"><stop offset="0" stop-color="#504d49" stop-opacity="0.8"/><stop offset="0.55" stop-color="#5a5653" stop-opacity="0.5"/><stop offset="1" stop-color="#5a5653" stop-opacity="0"/></radialGradient>
<radialGradient id="rgTop"><stop offset="0" stop-color="#6a625c" stop-opacity="0.7"/><stop offset="1" stop-color="#6a625c" stop-opacity="0"/></radialGradient>
<radialGradient id="face" cx="0.5" cy="0.45" r="0.6"><stop offset="0" stop-color="#f1cdbd"/><stop offset="0.6" stop-color="#e9bdab"/><stop offset="1" stop-color="#d7a291"/></radialGradient>
</defs>
<rect x="0" y="0" width="1920" height="1092" rx="38" fill="#4caf50"/>
<rect x="14" y="14" width="1892" height="1062" rx="32" fill="#111"/>
<g clip-path="url(#vclip)">
<rect width="1920" height="1092" fill="url(#vbg)"/>
<ellipse cx="900" cy="150" rx="600" ry="250" fill="url(#rgTop)"/>
<ellipse cx="1560" cy="560" rx="330" ry="400" fill="url(#rg1)"/>
<ellipse cx="1830" cy="880" rx="200" ry="330" fill="url(#rg2)"/>
<ellipse cx="260" cy="880" rx="230" ry="300" fill="url(#rg3)"/>
<!-- neck -->
<path d="M956 797C906 840 915 1014 965 1057C1015 1100 1209 1100 1259 1057C1310 1014 1318 840 1268 797C1217 754 1007 754 956 797Z" fill="#cf9f8e" filter="url(#b3)"/>
<path d="M948 815C965 807 1036 872 1078 875C1119 878 1173 825 1199 832C1225 839 1254 895 1233 918C1213 941 1121 970 1078 970C1034 970 995 944 974 918C952 892 930 822 948 815Z" fill="#b98877" filter="url(#b2)" opacity="0.7"/>
<!-- face -->
<path d="M852 572C857 621 863 670 878 711C894 751 915 787 948 815C981 842 1036 872 1078 875C1119 878 1167 846 1199 832C1230 817 1249 817 1268 789C1287 760 1300 706 1311 659C1323 611 1339 561 1337 503C1336 445 1329 362 1303 312C1277 263 1226 229 1181 209C1137 188 1080 183 1034 191C988 200 935 223 904 261C874 298 861 364 852 416C844 468 848 523 852 572Z" fill="url(#face)" filter="url(#b4)"/>
<ellipse cx="844" cy="589" rx="22" ry="55" fill="#dba594" filter="url(#b4)"/>
<!-- hair -->
<path d="M887 252C913 229 977 217 1034 217C1092 217 1194 232 1233 252C1272 272 1301 328 1268 338C1235 349 1099 310 1034 312C969 315 903 366 878 356C854 346 861 275 887 252Z" fill="#5a4539" opacity="0.45" filter="url(#b2)"/>
<path d="M814 538C806 521 809 480 811 442C813 405 814 354 827 312C839 271 852 223 887 191C922 159 979 126 1034 120C1089 114 1173 130 1216 155C1259 180 1269 224 1290 269C1311 314 1332 385 1342 425C1351 465 1353 495 1348 507C1342 520 1319 520 1307 499C1295 478 1289 419 1277 382C1264 345 1255 303 1233 278C1212 253 1180 239 1147 230C1114 221 1070 221 1034 224C999 228 959 236 935 252C911 268 903 294 891 321C880 349 872 380 865 416C859 453 863 522 854 542C846 562 821 554 814 538Z" fill="#3e332d" filter="url(#b4)"/>
<path d="M1008 217C1011 198 1042 201 1050 217C1057 234 1056 297 1053 317C1051 336 1043 351 1036 334C1028 318 1006 237 1008 217Z" fill="#3e332d" filter="url(#b4)"/>
<path d="M1108 222C1113 205 1149 211 1154 226C1158 241 1142 296 1136 312C1131 329 1127 338 1123 323C1118 308 1103 238 1108 222Z" fill="#43372f" filter="url(#b4)"/>
<path d="M1164 230C1166 226 1207 243 1220 261C1234 279 1248 334 1246 338C1244 343 1221 305 1207 287C1194 268 1162 235 1164 230Z" fill="#43372f" filter="url(#b4)"/>
<path d="M913 252C924 233 970 220 975 230C981 240 959 294 948 312C937 331 915 353 909 343C903 333 902 271 913 252Z" fill="#45392f" filter="url(#b4)" opacity="0.85"/>
<!-- brows -->
<path d="M896 409 Q948 392 1004 399" stroke="#9b6e60" stroke-width="9" fill="none" filter="url(#b4)"/>
<path d="M1121 395 Q1181 382 1238 390" stroke="#9b6e60" stroke-width="9" fill="none" filter="url(#b4)"/>
<!-- eyes -->
<path d="M909 487C909 482 943 468 961 467C978 466 1013 476 1013 481C1013 487 978 498 961 499C943 500 909 493 909 487Z" fill="#6e5044" filter="url(#b4)"/>
<path d="M1134 474C1134 470 1174 456 1194 455C1215 454 1255 464 1255 468C1255 473 1215 483 1194 484C1174 485 1134 479 1134 474Z" fill="#6e5044" filter="url(#b4)"/>
<!-- nose -->
<path d="M1013 607 Q1078 637 1142 607" stroke="#a06a5c" stroke-width="12" fill="none" filter="url(#b3)"/>
<ellipse cx="1078" cy="564" rx="40" ry="30" fill="#f2d0c2" filter="url(#b2)"/>
<!-- mouth -->
<path d="M991 715C1004 704 1054 681 1086 678C1119 675 1184 683 1186 698C1187 713 1124 760 1095 767C1065 774 1026 750 1008 741C991 732 978 726 991 715Z" fill="#c07c72" filter="url(#b4)"/>
<path d="M1026 712C1026 706 1072 699 1095 698C1118 696 1164 697 1164 704C1164 710 1118 735 1095 737C1072 738 1026 719 1026 712Z" fill="#eee3dc" filter="url(#b4)"/>
<!-- earring -->
<path d="M1259 745C1268 734 1311 740 1320 754C1329 768 1324 820 1316 832C1307 843 1277 838 1268 823C1259 809 1251 757 1259 745Z" fill="#38414d" filter="url(#b4)"/>
<rect x="1272" y="763" width="12" height="50" fill="#d8dde4" filter="url(#b4)"/>
<!-- sweater -->
<path d="M470 1100 C540 1000 620 930 760 890 C850 870 920 855 956 849 C960 900 962 940 965 962 C990 1020 1030 1057 1077 1057 C1150 1057 1200 1020 1233 979 C1270 920 1290 860 1302 815 C1360 800 1410 797 1453 797 C1560 830 1640 900 1680 1000 L1690 1100 Z" fill="#4894dc" filter="url(#b4)"/>
<path d="M956 849 C960 900 962 940 965 962 C990 1020 1030 1057 1077 1057 C1150 1057 1200 1020 1233 979 C1270 920 1290 860 1302 815" stroke="#3b7bbd" stroke-width="9" fill="none" filter="url(#b4)"/>
</g>
</svg>
<div class="a" style="left:1470px;top:445px;width:435px;height:243px;border-radius:8px;background:#000"></div>
<div class="a" style="left:1613px;top:492px;width:150px;height:150px;border-radius:50%;background:#52ae57;color:#fff;font-size:73px;line-height:150px;text-align:center">C</div>
<svg style="left:1872px;top:651px" width="20" height="22" viewBox="0 0 20 22"><path d="M10 1.5 Q13 1.5 13 4.5 V10 Q13 13 10 13 Q7 13 7 10 V4.5 Q7 1.5 10 1.5 Z" fill="#e35050"/><path d="M4 9.5 Q4 15.5 10 15.5 Q16 15.5 16 9.5 M10 15.5 V19.5" fill="none" stroke="#e35050" stroke-width="1.6"/><path d="M2.5 2.5 L17.5 19.5" stroke="#000" stroke-width="3.5"/><path d="M2.5 2.5 L17.5 19.5" stroke="#e35050" stroke-width="1.6"/></svg>

<!-- Chat -->
<div class="a" style="left:1470px;top:742px;font-size:17.5px;line-height:22px;color:#9b9b9b;white-space:nowrap">Юлия Галдина</div>
<div class="a" style="left:1850px;top:742px;width:55px;text-align:right;font-size:17.5px;line-height:22px;color:#9b9b9b">10:14</div>
<div class="a" style="left:1470px;top:784px;width:31px;height:45px;border-radius:9px;background:#3a3a3a;color:#fff;font-weight:bold;font-size:17px;line-height:45px;text-align:center">4</div>
<div class="a" style="left:1470px;top:859px;font-size:17.5px;line-height:22px;color:#9b9b9b;white-space:nowrap">Диана Орлова</div>
<div class="a" style="left:1470px;top:902px;width:31px;height:45px;border-radius:9px;background:#3a3a3a;color:#fff;font-weight:bold;font-size:17px;line-height:45px;text-align:center">4</div>
<div class="a" style="left:1470px;top:977px;font-size:17.8px;line-height:22px;color:#9b9b9b;white-space:nowrap">zsaidmurodova.callc</div>
<div class="a" style="left:1470px;top:1019px;width:98px;height:45px;border-radius:9px;background:#3a3a3a;color:#fff;font-weight:bold;font-size:17px;line-height:45px;text-align:center">1 миф #2</div>
<div class="a" style="left:1470px;top:1077px;width:435px;height:58px;border-radius:9px;background:#f2f2f2"></div>
<div class="a" style="left:1485px;top:1094px;font-size:18px;line-height:24px;color:#7a7a7a;white-space:nowrap">Введите сообщение</div>
<svg style="left:1811px;top:1092px" width="28" height="28" viewBox="0 0 28 28"><circle cx="14" cy="14" r="11.5" fill="none" stroke="#555" stroke-width="2.2"/><path d="M8.5 15.5 Q14 22 19.5 15.5 Z" fill="#555"/><path d="M8.5 11.5 Q10.2 9 11.8 11.5 M16.2 11.5 Q17.8 9 19.5 11.5" fill="none" stroke="#555" stroke-width="1.8"/></svg>
<svg style="left:1863px;top:1094px" width="26" height="24" viewBox="0 0 26 24"><path d="M1 1 L25 12 L1 23 L1 14.5 L16 12 L1 9.5 Z" fill="#9a9a9a"/></svg>

<!-- Bottom toolbar -->
<div class="a" style="left:15px;top:1039px;width:215px;height:32px;border-radius:6px;background:#050505"></div>
<div class="a" style="left:30px;top:1044px;font-size:17.7px;line-height:22px;color:#ddd;white-space:nowrap">Платформа МТС Линк</div>
<div class="a" style="left:25px;top:1086px;width:50px;height:50px;border-radius:50%;background:#fff"></div>
<svg style="left:37px;top:1100px" width="26" height="22" viewBox="0 0 26 22"><rect x="1" y="1" width="24" height="13.5" rx="1.5" fill="#333"/><rect x="1" y="15.8" width="24" height="2.2" fill="#333"/><rect x="9" y="19" width="8" height="2.2" fill="#333"/></svg>
<div class="a" style="left:85px;top:1086px;width:415px;height:50px;border-radius:25px;background:#333"></div>
<svg style="left:99px;top:1100px" width="22" height="22" viewBox="0 0 22 22"><path d="M20 11 H2.5 M10 3 L2 11 L10 19" fill="none" stroke="#fff" stroke-width="2.2"/></svg>
<svg style="left:149px;top:1100px" width="22" height="22" viewBox="0 0 22 22"><path d="M2 11 H19.5 M12 3 L20 11 L12 19" fill="none" stroke="#fff" stroke-width="2.2"/></svg>
<div class="a" style="left:205px;top:1110px;width:90px;height:1.5px;background:#fff"></div>
<div class="a" style="left:295px;top:1110px;width:35px;height:1.5px;background:#111"></div>
<div class="a" style="left:285px;top:1101px;width:20px;height:20px;border-radius:50%;background:#fff;box-shadow:0 1px 2px rgba(0,0,0,.5)"></div>
<svg style="left:367px;top:1098px" width="16" height="26" viewBox="0 0 16 26"><path d="M2 1 L14.5 13.5 L9 13.5 L12.5 23 L9.5 24.5 L6 15 L2 19 Z" fill="#fff"/></svg>
<svg style="left:412px;top:1098px" width="25" height="25" viewBox="0 0 25 25"><path d="M2 19.5 L16 5.5 L20.5 10 L6.5 24 L2 24 Z" fill="#fff"/><path d="M17.8 3.7 L20 1.5 Q21 0.5 22 1.5 L24.5 4 Q25.5 5 24.5 6 L22.3 8.2 Z" fill="#fff"/></svg>
<svg style="left:465px;top:1101px" width="20" height="20" viewBox="0 0 20 20"><path d="M1 1 H19 V6 H16.5 V4 H12 V19 H8 V4 H3.5 V6 H1 Z" fill="#fff"/></svg>

<div class="a" style="left:1095px;top:1086px;width:120px;height:50px;border-radius:25px;background:#333"></div>
<svg style="left:1115px;top:1101px" width="28" height="20" viewBox="0 0 28 20"><path d="M1 10 Q14 -6 27 10 Q14 26 1 10 Z" fill="#fff"/><circle cx="14" cy="10" r="5.5" fill="#333"/><circle cx="14" cy="10" r="3.2" fill="#fff"/></svg>
<div class="a" style="left:1153px;top:1097px;font-size:22px;line-height:26px;color:#fff;white-space:nowrap">89%</div>
<div class="a" style="left:1225px;top:1086px;width:50px;height:50px;border-radius:50%;background:#333"></div>
<div class="a" style="left:1285px;top:1086px;width:50px;height:50px;border-radius:50%;background:#333"></div>
<div class="a" style="left:1345px;top:1086px;width:50px;height:50px;border-radius:50%;background:#333"></div>
<div class="a" style="left:1405px;top:1086px;width:50px;height:50px;border-radius:50%;background:#333"></div>
<svg style="left:1237px;top:1096px" width="26" height="28" viewBox="0 0 26 28"><rect x="9.5" y="0.5" width="7" height="2.3" fill="#fff"/><circle cx="13" cy="15.5" r="10.2" fill="none" stroke="#fff" stroke-width="2.2"/><rect x="11.9" y="9" width="2.2" height="7" fill="#fff"/><path d="M21 6 L23 4" stroke="#fff" stroke-width="2"/></svg>
<svg style="left:1297px;top:1095px" width="26" height="30" viewBox="0 0 26 30"><path d="M6.5 17 V8 Q6.5 6 8.2 6 Q10 6 10 8 V14 V4 Q10 2 11.8 2 Q13.6 2 13.6 4 V13 V3 Q13.6 1 15.4 1 Q17.2 1 17.2 3 V13 V5 Q17.2 3 19 3 Q20.8 3 20.8 5 V18 Q20.8 28 13 28 Q8 28 5.5 23 L2 16 Q1 14.5 2.5 13.8 Q4 13 5 14.5 Z" fill="none" stroke="#fff" stroke-width="2"/></svg>
<svg style="left:1357px;top:1097px" width="26" height="28" viewBox="0 0 26 28"><path d="M13 1 Q15 6 18 9.5 Q21 13 21 18 Q21 24 15.5 26.5 Q18 22 15 18 Q14 20.5 12 21 Q13 17 10.5 14 Q10 18 7.5 20.5 Q6.5 23.5 9 26.5 Q5 25 5 19 Q5 14 9 9.5 Q12 6 13 1 Z" fill="#fff"/></svg>
<svg style="left:1415px;top:1098px" width="30" height="26" viewBox="0 0 30 26"><rect x="1.5" y="1.5" width="27" height="22" fill="none" stroke="#fff" stroke-width="2.6"/><rect x="15" y="5" width="10" height="7" fill="#fff"/></svg>

<!-- Taskbar -->
<div id="taskbar" class="a">
  <svg style="left:20px;top:14px" width="21" height="21" viewBox="0 0 21 21"><path d="M0 3 L8.6 1.8 V9.8 H0 Z M9.6 1.6 L21 0 V9.8 H9.6 Z M0 10.8 H8.6 V18.8 L0 17.6 Z M9.6 10.8 H21 V20.6 L9.6 19 Z" fill="#fff"/></svg>
  <svg style="left:76px;top:10px" width="30" height="30" viewBox="0 0 30 30"><circle cx="17.5" cy="12" r="9.5" fill="none" stroke="#fff" stroke-width="2.3"/><path d="M11 18.5 L2 27.5" stroke="#fff" stroke-width="2.6" stroke-linecap="round"/></svg>
  <svg style="left:140px;top:11px" width="28" height="28" viewBox="0 0 28 28"><path d="M0 2 Q0 1 1 1 H9 L11 3 H27 Q28 3 28 4 V24 Q28 25 27 25 H1 Q0 25 0 24 Z" fill="#e8a92b"/><path d="M0 6 H28 V24 Q28 25 27 25 H1 Q0 25 0 24 Z" fill="#f8cf5a"/><path d="M8 25 V15 H20 V25 H16.5 V18.5 H11.5 V25 Z" fill="#3b8fd8"/></svg>
  <svg style="left:201px;top:10px" width="31" height="31" viewBox="0 0 31 31"><defs><linearGradient id="edg" x1="0" y1="0" x2="1" y2="1"><stop offset="0" stop-color="#35c1f1"/><stop offset="0.6" stop-color="#1b84d8"/><stop offset="1" stop-color="#0c59a4"/></linearGradient></defs><circle cx="15.5" cy="15.5" r="15" fill="url(#edg)"/><path d="M22 5 Q31 10 30 18 Q27 24 20 23 Q14 22 14 17 Q14 13 18 13 Q24 13 27 15 Q28 8 22 5 Z" fill="#5fd96a"/><path d="M9 12 Q10 22 18 26 Q10 29 4 22 Q3 16 9 12 Z" fill="#0e4f9a"/></svg>
  <div class="a" style="left:263px;top:10px;width:31px;height:31px;border-radius:50%;background:#fff"></div>
  <svg style="left:263px;top:10px" width="31" height="31" viewBox="0 0 31 31"><path d="M8 7 L15.5 17 V26 M23 7 L15.5 17" fill="none" stroke="#fc3f1d" stroke-width="3.5"/><path d="M23 7 L15.5 17" stroke="#f55ed8" stroke-width="3.5" opacity="0.7"/></svg>
  <div class="a" style="left:310px;top:0;width:57px;height:52px;background:#4a4c42"></div>
  <div class="a" style="left:310px;top:48px;width:57px;height:4px;background:#76b9ed"></div>
  <div class="a" style="left:367px;top:0;width:3px;height:52px;background:#3a3d34"></div>
  <svg style="left:325px;top:10px" width="31" height="31" viewBox="0 0 31 31"><circle cx="15.5" cy="15.5" r="15" fill="#db4437"/><path d="M15.5 0.5 A15 15 0 0 1 28.5 8 L15.5 8 Z" fill="#f4c20d"/><path d="M28.5 8 A15 15 0 0 1 15.5 30.5 L22 19 Z" fill="#f4c20d"/><path d="M2.5 8 A15 15 0 0 0 15.5 30.5 L9 19 Z" fill="#0f9d58"/><circle cx="15.5" cy="15.5" r="6.5" fill="#fff"/><circle cx="15.5" cy="15.5" r="5.2" fill="#4285f4"/></svg>
  <div class="a" style="left:337px;top:23px;width:20px;height:20px;border-radius:50%;background:radial-gradient(circle at 50% 45%,#d9b89f 0 35%,#6b5a4c 60%,#a8b0b8 100%);border:1px solid #555"></div>
  <svg style="left:387px;top:10px" width="29" height="28" viewBox="0 0 29 28"><rect x="1" y="1" width="27" height="26" rx="3" fill="#1a0a2e" stroke="#9f7ee8" stroke-width="2"/><text x="14.5" y="19.5" font-family="Liberation Sans" font-weight="bold" font-size="14" fill="#d8c8fa" text-anchor="middle">Ru</text></svg>
  <svg style="left:450px;top:10px" width="29" height="28" viewBox="0 0 29 28"><rect x="1" y="1" width="27" height="26" rx="1" fill="#1f0a2a" stroke="#e37ef5" stroke-width="2"/><text x="14.5" y="19.5" font-family="Liberation Sans" font-size="14" fill="#e89cf7" text-anchor="middle">Pr</text></svg>
  <svg style="left:511px;top:10px" width="29" height="28" viewBox="0 0 29 28"><rect x="1" y="1" width="27" height="26" rx="1" fill="#061e2f" stroke="#31c5f4" stroke-width="2"/><text x="14.5" y="19.5" font-family="Liberation Sans" font-size="14" fill="#31c5f4" text-anchor="middle">Ps</text></svg>
  <div class="a" style="left:573px;top:10px;width:30px;height:30px;border-radius:5px;background:linear-gradient(#1d2426,#0e1213)"></div>
  <svg style="left:575px;top:18px" width="26" height="14" viewBox="0 0 26 14"><circle cx="4" cy="7" r="3.5" fill="#19a07a"/><circle cx="22" cy="7" r="3.5" fill="#19a07a"/><circle cx="13" cy="7" r="5.5" fill="#19a07a"/><rect x="4" y="4.5" width="18" height="5" fill="#19a07a"/><circle cx="13" cy="7" r="2" fill="#0e1213"/></svg>
  <div class="a" style="left:636px;top:10px;width:28px;height:28px;border-radius:50%;background:linear-gradient(#37aee2,#1e96c8)"></div>
  <svg style="left:640px;top:16px" width="20" height="16" viewBox="0 0 20 16"><path d="M1 7.5 L18 1 L15 15 L10 11 L7.5 13.5 L7 9.5 L15 3.5 L6 9 Z" fill="#fff"/></svg>
  <div class="a" style="left:649px;top:28px;width:28px;height:17px;border-radius:4px;background:#e53935;color:#fff;font-size:13px;line-height:17px;text-align:center">..74</div>
  <div class="a" style="left:625px;top:48px;width:51px;height:4px;background:#76b9ed"></div>
  <svg style="left:696px;top:9px" width="32" height="32" viewBox="0 0 32 32"><path d="M16 2.5 A13.2 13.2 0 1 1 9 27 L2.5 29 L4.8 23 A13.2 13.2 0 0 1 16 2.5 Z" fill="none" stroke="#25d366" stroke-width="2.6"/><path d="M11 9.5 Q9.5 10.5 10 13 Q12 19 19 22 Q21.5 22.5 22.5 20.5 L20 18.5 L18.5 19.5 Q15 18 13 14 L14 12.5 L12.5 9.5 Z" fill="#25d366"/></svg>
  <div class="a" style="left:716px;top:24px;width:24px;height:24px;border-radius:50%;background:#2b2f2a;border:1px solid #888;color:#fff;font-size:15px;line-height:22px;text-align:center">37</div>
  <div class="a" style="left:687px;top:48px;width:50px;height:4px;background:#76b9ed"></div>
  <svg style="left:759px;top:9px" width="30" height="31" viewBox="0 0 30 31"><defs><radialGradient id="ffg" cx="0.7" cy="0.2" r="0.9"><stop offset="0" stop-color="#ffe14d"/><stop offset="0.4" stop-color="#ff8a1c"/><stop offset="0.8" stop-color="#ff3b5c"/></radialGradient></defs><circle cx="15" cy="17" r="13" fill="url(#ffg)"/><path d="M19 2 Q27 7 28 15 Q26 8 21 7 Z" fill="#ffb21c"/><circle cx="15" cy="16.5" r="6" fill="#7542e5"/><path d="M5 12 Q8 8 13 9 Q10 11 11 13 Z" fill="#ff7139"/></svg>
  <!-- tray -->
  <svg style="left:1549px;top:17px" width="18" height="12" viewBox="0 0 18 12"><path d="M1 10 L9 2 L17 10" fill="none" stroke="#fff" stroke-width="1.3"/></svg>
  <svg style="left:1579px;top:13px" width="17" height="25" viewBox="0 0 17 25"><rect x="4.5" y="0.5" width="8" height="15" rx="4" fill="#fff"/><path d="M2 11 Q2 18 8.5 18 Q15 18 15 11 M8.5 18 V23 M5 23.5 H12" fill="none" stroke="#fff" stroke-width="1.3"/></svg>
  <svg style="left:1607px;top:14px" width="23" height="24" viewBox="0 0 23 24"><path d="M1 3 L20 0.5 V18 L1 17 Z" fill="none" stroke="#fff" stroke-width="1.2"/><path d="M8 11 Q8 6 12 6 M14 8 Q14 13 10 13" fill="none" stroke="#fff" stroke-width="1.2"/><circle cx="16.5" cy="18.5" r="4.5" fill="#f7940f"/></svg>
  <svg style="left:1637px;top:18px" width="22" height="14" viewBox="0 0 22 14"><path d="M3 1 V4 M6 1 V4 M2 4 H7 V7 Q7 9 4.5 9 Q2 9 2 7 Z M4.5 9 V12" fill="none" stroke="#fff" stroke-width="1.1"/><rect x="7" y="3" width="13" height="9" fill="none" stroke="#fff" stroke-width="1.2"/><rect x="8.5" y="4.5" width="8" height="6" fill="#fff"/><rect x="20" y="6" width="1.5" height="3" fill="#fff"/></svg>
  <svg style="left:1667px;top:14px" width="22" height="22" viewBox="0 0 22 22"><path d="M1 8 H5 L10 3.5 V18.5 L5 14 H1 Z" fill="none" stroke="#fff" stroke-width="1.2"/><path d="M13 8.5 Q14.5 11 13 13.5 M15.5 6 Q18.5 11 15.5 16 M18 3.5 Q22.5 11 18 18.5" fill="none" stroke="#bbb" stroke-width="1.1"/></svg>
  <svg style="left:1699px;top:14px" width="22" height="20" viewBox="0 0 22 20"><path d="M2 13 Q10 3 20 2 M5 15.5 Q11 8 20 6 M8 17.5 Q13 12 19 10.5" fill="none" stroke="#fff" stroke-width="1.2"/><circle cx="16" cy="16.5" r="1.8" fill="#fff"/></svg>
  <div class="a" style="left:1731px;top:16px;font-size:14.5px;line-height:18px;color:#fff;white-space:nowrap">РУС</div>
  <div class="a" style="left:1776px;top:4px;width:70px;text-align:center;font-size:14.5px;line-height:18px;color:#fff;white-space:nowrap">10:16</div>
  <div class="a" style="left:1773px;top:27px;width:76px;text-align:center;font-size:14.5px;line-height:18px;color:#fff;white-space:nowrap">25.09.2025</div>
  <svg style="left:1868px;top:16px" width="24" height="22" viewBox="0 0 24 22"><path d="M1 1 H21 V15 H9 L4.5 20 V15 H1 Z" fill="#fff"/><path d="M5 5 H17 M5 8 H17 M5 11 H13" stroke="#333" stroke-width="1.1"/></svg>
  <div class="a" style="left:1879px;top:23px;width:21px;height:21px;border-radius:50%;background:#2b3432;border:1px solid #888;color:#fff;font-size:14px;line-height:19px;text-align:center;font-weight:bold">3</div>
  <div class="a" style="left:1913px;top:0;width:1px;height:52px;background:#888"></div>
</div>

</body></html>
